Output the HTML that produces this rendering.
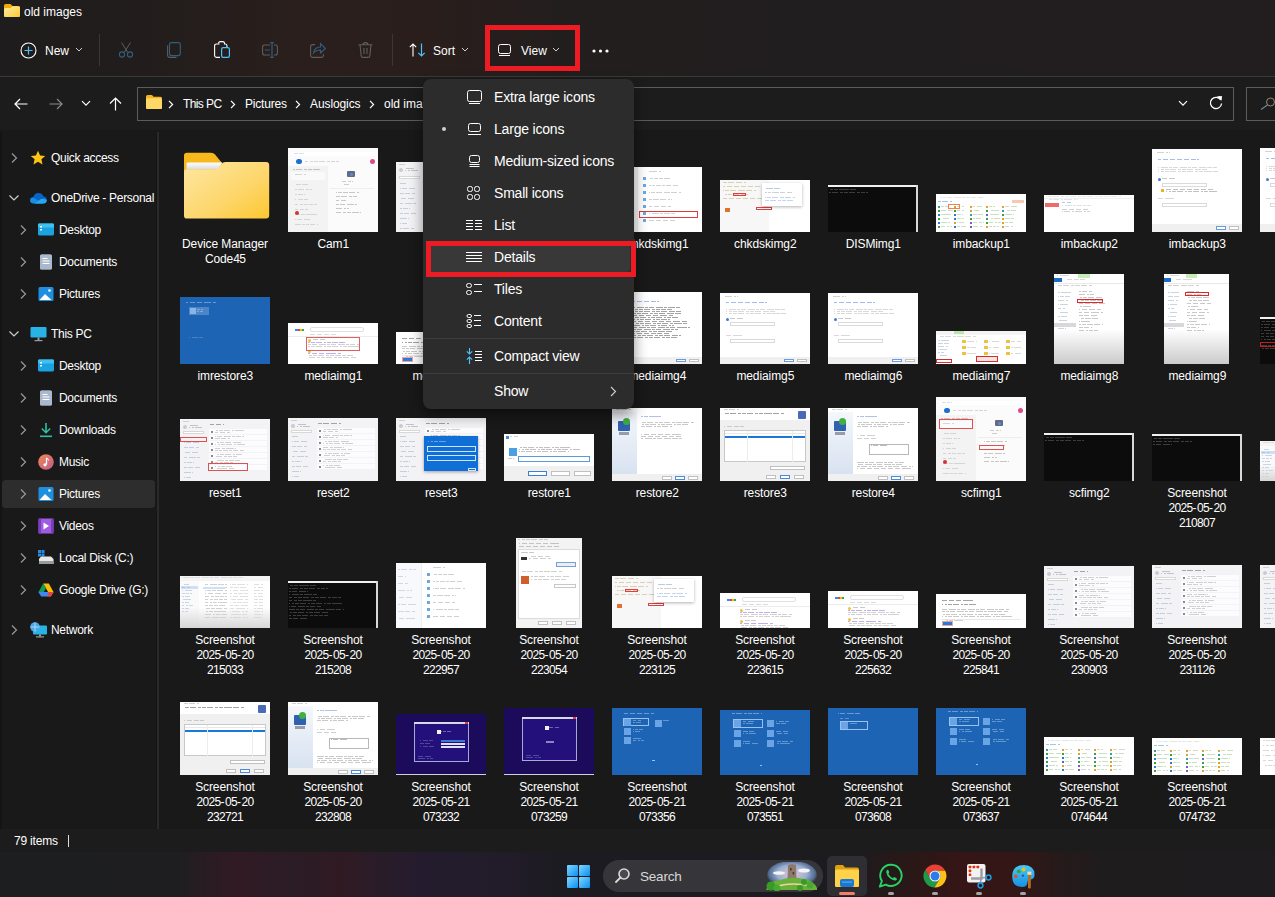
<!DOCTYPE html>
<html><head><meta charset="utf-8"><style>
*{margin:0;padding:0}
html,body{width:1275px;height:897px;overflow:hidden;background:#191919;font-family:"Liberation Sans", sans-serif}
.th{position:absolute;overflow:hidden;background:#fff}
.tf{filter:blur(0.7px)}
.th i{position:absolute;display:block}
.lab{position:absolute;width:100px;text-align:center;color:#fff;font-size:12px;line-height:15px;white-space:nowrap}
.sbt{position:absolute;color:#fff;font-size:12px;line-height:16px;letter-spacing:-0.3px;white-space:nowrap}
.t12{position:absolute;font-size:12px;line-height:16px;white-space:nowrap}
.mt{position:absolute;color:#fff;font-size:14px;line-height:18px;letter-spacing:-0.2px;white-space:nowrap}
.tsearch{position:absolute;color:#d8d8d8;font-size:13.5px;line-height:18px;letter-spacing:-0.2px}
</style></head><body>
<div style="position:absolute;left:0;top:0;width:1275px;height:76px;background:linear-gradient(90deg,#1e1c1c 0px,#221d1c 150px,#2a1f1c 300px,#291e1c 430px,#231e1e 560px,#211e1f 800px,#221e1f 1275px)"></div>
<div style="position:absolute;left:0;top:76px;width:1275px;height:1px;background:#3a3a3a"></div>
<div style="position:absolute;left:0;top:77px;width:1275px;height:53px;background:#1c1c1c"></div>
<div style="position:absolute;left:0;top:132px;width:2px;height:697px;background:#141414"></div>
<div style="position:absolute;left:156px;top:132px;width:1px;height:697px;background:#151515"></div><div style="position:absolute;left:157px;top:132px;width:2px;height:697px;background:#2a2a2a"></div>
<svg style="position:absolute;left:4px;top:4px" width="16" height="13" viewBox="0 0 16 13"><defs><linearGradient id="tfg" x1="0" y1="0" x2="1" y2="1"><stop offset="0" stop-color="#ffeea0"/><stop offset="1" stop-color="#fcc838"/></linearGradient></defs><path d="M1.5 0 H6.5 L8.5 2 H14.5 Q16 2 16 3.5 V11.5 Q16 13 14.5 13 H1.5 Q0 13 0 11.5 V1.5 Q0 0 1.5 0Z" fill="#f2aa08"/><path d="M0 5.5 Q0 4 1.5 4 H6.5 L8.5 2.2 H14.5 Q16 2.2 16 3.7 V11.5 Q16 13 14.5 13 H1.5 Q0 13 0 11.5Z" fill="url(#tfg)"/></svg><div class="t12" style="left:24px;top:4px;color:#fff">old images</div><svg style="position:absolute;left:20px;top:42px" width="17" height="17" viewBox="0 0 17 17"><circle cx="8.5" cy="8.5" r="7.5" fill="none" stroke="#fff" stroke-width="1.1"/><path d="M8.5 4.5 V12.5 M4.5 8.5 H12.5" stroke="#4cc2ff" stroke-width="1.2"/></svg><div class="t12" style="left:45px;top:43px;color:#fff">New</div><svg style="position:absolute;left:75px;top:47px" width="8" height="5" viewBox="0 0 8 5"><path d="M1 1 L4 4 L7 1" fill="none" stroke="#cfcfcf" stroke-width="1"/></svg><div style="position:absolute;left:99px;top:34px;width:1px;height:32px;background:#3a3636"></div><svg style="position:absolute;left:118px;top:42px" width="16" height="16" viewBox="0 0 16 16"><path d="M3.5 0.5 L9.5 10 M12.5 0.5 L6.5 10" stroke="#5e5e5e" stroke-width="1"/><circle cx="4" cy="12.5" r="2.6" fill="none" stroke="#2f5f80" stroke-width="1.1"/><circle cx="12" cy="12.5" r="2.6" fill="none" stroke="#2f5f80" stroke-width="1.1"/></svg><svg style="position:absolute;left:167px;top:42px" width="14" height="16" viewBox="0 0 14 16"><rect x="2.5" y="0.6" width="10.8" height="13" rx="2" fill="none" stroke="#2f5f80" stroke-width="1.1"/><path d="M0.6 3.5 V13 Q0.6 15.4 3 15.4 H9.5" fill="none" stroke="#5e5e5e" stroke-width="1.1"/></svg><svg style="position:absolute;left:214px;top:41px" width="16" height="17" viewBox="0 0 16 17"><path d="M5.5 3 H2.5 Q0.6 3 0.6 5 V14.5 Q0.6 16.4 2.5 16.4 H6" fill="none" stroke="#fff" stroke-width="1.1"/><path d="M4.5 2.5 Q4.5 0.6 6.5 0.6 H8.5 Q10.5 0.6 10.5 2.5 M10 3 H11.5 Q13 3 13 5 V6" fill="none" stroke="#fff" stroke-width="1.1"/><rect x="7.6" y="6.6" width="7.8" height="9.8" rx="1.6" fill="none" stroke="#4cc2ff" stroke-width="1.2"/></svg><svg style="position:absolute;left:262px;top:42px" width="16" height="16" viewBox="0 0 16 16"><path d="M8 3 H2.5 Q0.6 3 0.6 5 V11 Q0.6 13 2.5 13 H8 M12 3 H13.5 Q15.4 3 15.4 5 V11 Q15.4 13 13.5 13 H12" fill="none" stroke="#5e5e5e" stroke-width="1.1"/><path d="M10 0.6 V15.4 M8.2 0.6 H11.8 M8.2 15.4 H11.8 M2.8 8 H8" stroke="#2f5f80" stroke-width="1.2"/></svg><svg style="position:absolute;left:310px;top:42px" width="16" height="16" viewBox="0 0 16 16"><path d="M5 2.6 H2.5 Q0.6 2.6 0.6 4.5 V13.5 Q0.6 15.4 2.5 15.4 H11.5 Q13.4 15.4 13.4 13.5 V12" fill="none" stroke="#5e5e5e" stroke-width="1.1"/><path d="M3.5 11 Q4.5 5 10.5 5 V1.5 L15.4 6.5 L10.5 11 V8 Q6 8 3.5 11Z" fill="none" stroke="#2f5f80" stroke-width="1.1"/></svg><svg style="position:absolute;left:358px;top:42px" width="15" height="16" viewBox="0 0 15 16"><path d="M0.5 2.8 H14.5 M5 2.8 Q5 0.6 7.5 0.6 Q10 0.6 10 2.8 M2 2.8 L3.2 14 Q3.4 15.4 4.8 15.4 H10.2 Q11.6 15.4 11.8 14 L13 2.8 M6 6 V12 M9 6 V12" fill="none" stroke="#5e5e5e" stroke-width="1.1"/></svg><div style="position:absolute;left:392px;top:34px;width:1px;height:32px;background:#3a3636"></div><svg style="position:absolute;left:409px;top:43px" width="17" height="14" viewBox="0 0 17 14"><path d="M4 13.5 V1 M0.8 4.2 L4 1 L7.2 4.2" fill="none" stroke="#fff" stroke-width="1.1"/><path d="M12.5 0.5 V13 M9.3 9.8 L12.5 13 L15.7 9.8" fill="none" stroke="#4cc2ff" stroke-width="1.2"/></svg><div class="t12" style="left:433px;top:43px;color:#fff">Sort</div><svg style="position:absolute;left:461px;top:47px" width="8" height="5" viewBox="0 0 8 5"><path d="M1 1 L4 4 L7 1" fill="none" stroke="#cfcfcf" stroke-width="1"/></svg><div style="position:absolute;left:485px;top:25px;width:95px;height:46px;box-sizing:border-box;border:5px solid #ed1c24"></div><svg style="position:absolute;left:498px;top:44px" width="14" height="14" viewBox="0 0 14 14"><rect x="0.5" y="0.5" width="12" height="9" rx="2" fill="none" stroke="#fff" stroke-width="1"/><path d="M1 11.5 H12" stroke="#fff" stroke-width="1"/></svg><div class="t12" style="left:521px;top:43px;color:#fff">View</div><svg style="position:absolute;left:552px;top:47px" width="8" height="5" viewBox="0 0 8 5"><path d="M1 1 L4 4 L7 1" fill="none" stroke="#cfcfcf" stroke-width="1"/></svg><svg style="position:absolute;left:592px;top:49px" width="18" height="4" viewBox="0 0 18 4"><circle cx="2" cy="2" r="1.6" fill="#fff"/><circle cx="8.5" cy="2" r="1.6" fill="#fff"/><circle cx="15" cy="2" r="1.6" fill="#fff"/></svg>
<svg style="position:absolute;left:14px;top:98px" width="14" height="12" viewBox="0 0 14 12"><path d="M13.5 6 H1 M6 1 L1 6 L6 11" fill="none" stroke="#fff" stroke-width="1.2"/></svg><svg style="position:absolute;left:49px;top:98px" width="14" height="12" viewBox="0 0 14 12"><path d="M0.5 6 H13 M8 1 L13 6 L8 11" fill="none" stroke="#8a8a8a" stroke-width="1.2"/></svg><svg style="position:absolute;left:81px;top:100px" width="10" height="7" viewBox="0 0 10 7"><path d="M1 1.2 L5 5.2 L9 1.2" fill="none" stroke="#fff" stroke-width="1.2"/></svg><svg style="position:absolute;left:109px;top:97px" width="13" height="14" viewBox="0 0 13 14"><path d="M6.5 13.5 V1 M1 6.5 L6.5 1 L12 6.5" fill="none" stroke="#fff" stroke-width="1.2"/></svg><div style="position:absolute;left:137px;top:87px;width:1097px;height:34px;box-sizing:border-box;border:1px solid #5c5c5c;background:#1c1c1c"></div><svg style="position:absolute;left:146px;top:95px" width="16" height="14" viewBox="0 0 16 14"><path d="M1.5 0 H6 L7.5 1.8 H14.5 Q16 1.8 16 3.3 V12.5 Q16 14 14.5 14 H1.5 Q0 14 0 12.5 V1.5 Q0 0 1.5 0Z" fill="#f2b522"/><path d="M0 4.5 Q0 3.3 1.5 3.3 H14.5 Q16 3.3 16 4.8 V12.5 Q16 14 14.5 14 H1.5 Q0 14 0 12.5Z" fill="#ffd865"/></svg><svg style="position:absolute;left:168px;top:100px" width="6" height="9" viewBox="0 0 6 9"><path d="M1 0.8 L4.6 4.5 L1 8.2" fill="none" stroke="#fff" stroke-width="1.2"/></svg><div class="t12" style="left:183px;top:96px;color:#fff;letter-spacing:-0.6px">This PC</div><svg style="position:absolute;left:230px;top:100px" width="6" height="9" viewBox="0 0 6 9"><path d="M1 0.8 L4.6 4.5 L1 8.2" fill="none" stroke="#fff" stroke-width="1.2"/></svg><div class="t12" style="left:245px;top:96px;color:#fff;letter-spacing:-0.2px">Pictures</div><svg style="position:absolute;left:295px;top:100px" width="6" height="9" viewBox="0 0 6 9"><path d="M1 0.8 L4.6 4.5 L1 8.2" fill="none" stroke="#fff" stroke-width="1.2"/></svg><div class="t12" style="left:310px;top:96px;color:#fff;letter-spacing:-0.1px">Auslogics</div><svg style="position:absolute;left:369px;top:100px" width="6" height="9" viewBox="0 0 6 9"><path d="M1 0.8 L4.6 4.5 L1 8.2" fill="none" stroke="#fff" stroke-width="1.2"/></svg><div class="t12" style="left:384px;top:96px;color:#fff">old images</div><svg style="position:absolute;left:1178px;top:100px" width="10" height="7" viewBox="0 0 10 7"><path d="M1 1.2 L5 5.2 L9 1.2" fill="none" stroke="#fff" stroke-width="1.2"/></svg><svg style="position:absolute;left:1209px;top:96px" width="14" height="14" viewBox="0 0 14 14"><path d="M11.8 4 A5.6 5.6 0 1 0 12.6 7.5" fill="none" stroke="#fff" stroke-width="1.3"/><path d="M8.5 0.8 L12.2 4.2 L12.6 0.2Z" fill="#fff" stroke="#fff" stroke-width="0.8"/></svg><div style="position:absolute;left:1246px;top:87px;width:40px;height:34px;box-sizing:border-box;border:1px solid #5c5c5c"></div><svg style="position:absolute;left:1260px;top:97px" width="15" height="13" viewBox="0 0 15 13"><circle cx="10.5" cy="5" r="4" fill="none" stroke="#9a8a70" stroke-width="1"/><path d="M7.5 8 L1 12.5" stroke="#6a8aa0" stroke-width="1.1"/></svg>
<svg style="position:absolute;left:9px;top:152px" width="10" height="12" viewBox="0 0 10 12"><path d="M3 1.5 L7.5 6 L3 10.5" fill="none" stroke="#9a9a9a" stroke-width="1.2"/></svg><div style="position:absolute;left:30px;top:150px;width:16px;height:16px"><svg width="16" height="16" viewBox="0 0 16 16"><path d="M8 0.8 L10.1 5.4 L15.2 5.9 L11.4 9.3 L12.5 14.5 L8 11.8 L3.5 14.5 L4.6 9.3 L0.8 5.9 L5.9 5.4Z" fill="#ffc516"/></svg></div><div class="sbt" style="left:51px;top:150px">Quick access</div><svg style="position:absolute;left:8px;top:193px" width="12" height="10" viewBox="0 0 12 10"><path d="M1.5 2.5 L6 7 L10.5 2.5" fill="none" stroke="#cfcfcf" stroke-width="1.2"/></svg><div style="position:absolute;left:30px;top:190px;width:16px;height:16px"><svg width="17" height="12" viewBox="0 0 17 12" style="position:absolute;left:0;top:2px"><path d="M4 11.5 Q0.2 11.5 0.2 8.2 Q0.2 5.2 3.4 5 Q4.5 1 8.5 1 Q12 1 13.2 4.2 Q16.8 4.6 16.8 8 Q16.8 11.5 13 11.5Z" fill="#0a64c8"/><path d="M4 11.5 Q0.2 11.5 0.2 8.2 Q0.2 6 3 5.6 L13 11.5Z" fill="#1490df"/><path d="M5 11.5 L10 7.5 Q13 6 16.8 8 Q16.8 11.5 13 11.5Z" fill="#28a8ea"/></svg></div><div class="sbt" style="left:51px;top:190px">OneDrive - Personal</div><svg style="position:absolute;left:17.5px;top:224px" width="10" height="12" viewBox="0 0 10 12"><path d="M3 1.5 L7.5 6 L3 10.5" fill="none" stroke="#9a9a9a" stroke-width="1.2"/></svg><div style="position:absolute;left:38px;top:222px;width:16px;height:16px"><svg width="16" height="16" viewBox="0 0 16 16"><rect x="0" y="1.5" width="16" height="12" rx="1.5" fill="#1aa3e0"/><rect x="0" y="1.5" width="16" height="4" rx="1" fill="#3ec0f0"/><rect x="2" y="4" width="2" height="1.5" fill="#fff"/><rect x="2" y="7" width="2" height="1.5" fill="#fff"/></svg></div><div class="sbt" style="left:59px;top:222px">Desktop</div><svg style="position:absolute;left:17.5px;top:256px" width="10" height="12" viewBox="0 0 10 12"><path d="M3 1.5 L7.5 6 L3 10.5" fill="none" stroke="#9a9a9a" stroke-width="1.2"/></svg><div style="position:absolute;left:38px;top:254px;width:16px;height:16px"><svg width="16" height="16" viewBox="0 0 16 16"><rect x="2" y="0.5" width="12" height="15" rx="1.5" fill="#8b9ab0"/><rect x="2" y="0.5" width="12" height="15" rx="1.5" fill="#a9b8cc"/><rect x="4.5" y="4" width="5" height="1" fill="#fff"/><rect x="4.5" y="6.5" width="7" height="1" fill="#fff"/><rect x="4.5" y="9" width="7" height="1" fill="#fff"/></svg></div><div class="sbt" style="left:59px;top:254px">Documents</div><svg style="position:absolute;left:17.5px;top:288px" width="10" height="12" viewBox="0 0 10 12"><path d="M3 1.5 L7.5 6 L3 10.5" fill="none" stroke="#9a9a9a" stroke-width="1.2"/></svg><div style="position:absolute;left:38px;top:286px;width:16px;height:16px"><svg width="16" height="16" viewBox="0 0 16 16"><rect x="0.5" y="1" width="15" height="14" rx="1.5" fill="#1f8fe0"/><path d="M1.5 14 L7 8 L13.5 14Z" fill="#fff"/><circle cx="11.5" cy="4.5" r="1.3" fill="#fff"/></svg></div><div class="sbt" style="left:59px;top:286px">Pictures</div><svg style="position:absolute;left:8px;top:329px" width="12" height="10" viewBox="0 0 12 10"><path d="M1.5 2.5 L6 7 L10.5 2.5" fill="none" stroke="#cfcfcf" stroke-width="1.2"/></svg><div style="position:absolute;left:30px;top:326px;width:16px;height:16px"><svg width="17" height="16" viewBox="0 0 17 16"><rect x="0.5" y="1" width="16" height="10.5" rx="1" fill="#27b3e6"/><rect x="7.5" y="11.5" width="2" height="3" fill="#9a9a9a"/><rect x="4.5" y="14" width="8" height="1.2" fill="#9a9a9a"/></svg></div><div class="sbt" style="left:51px;top:326px">This PC</div><svg style="position:absolute;left:17.5px;top:360px" width="10" height="12" viewBox="0 0 10 12"><path d="M3 1.5 L7.5 6 L3 10.5" fill="none" stroke="#9a9a9a" stroke-width="1.2"/></svg><div style="position:absolute;left:38px;top:358px;width:16px;height:16px"><svg width="16" height="16" viewBox="0 0 16 16"><rect x="0" y="1.5" width="16" height="12" rx="1.5" fill="#1aa3e0"/><rect x="0" y="1.5" width="16" height="4" rx="1" fill="#3ec0f0"/><rect x="2" y="4" width="2" height="1.5" fill="#fff"/><rect x="2" y="7" width="2" height="1.5" fill="#fff"/></svg></div><div class="sbt" style="left:59px;top:358px">Desktop</div><svg style="position:absolute;left:17.5px;top:392px" width="10" height="12" viewBox="0 0 10 12"><path d="M3 1.5 L7.5 6 L3 10.5" fill="none" stroke="#9a9a9a" stroke-width="1.2"/></svg><div style="position:absolute;left:38px;top:390px;width:16px;height:16px"><svg width="16" height="16" viewBox="0 0 16 16"><rect x="2" y="0.5" width="12" height="15" rx="1.5" fill="#8b9ab0"/><rect x="2" y="0.5" width="12" height="15" rx="1.5" fill="#a9b8cc"/><rect x="4.5" y="4" width="5" height="1" fill="#fff"/><rect x="4.5" y="6.5" width="7" height="1" fill="#fff"/><rect x="4.5" y="9" width="7" height="1" fill="#fff"/></svg></div><div class="sbt" style="left:59px;top:390px">Documents</div><svg style="position:absolute;left:17.5px;top:424px" width="10" height="12" viewBox="0 0 10 12"><path d="M3 1.5 L7.5 6 L3 10.5" fill="none" stroke="#9a9a9a" stroke-width="1.2"/></svg><div style="position:absolute;left:38px;top:422px;width:16px;height:16px"><svg width="16" height="16" viewBox="0 0 16 16"><path d="M8 1 V10.5 M3.8 6.5 L8 10.7 L12.2 6.5" fill="none" stroke="#2ec0a0" stroke-width="1.6"/><rect x="2" y="13.5" width="12" height="1.6" fill="#2ec0a0"/></svg></div><div class="sbt" style="left:59px;top:422px">Downloads</div><svg style="position:absolute;left:17.5px;top:456px" width="10" height="12" viewBox="0 0 10 12"><path d="M3 1.5 L7.5 6 L3 10.5" fill="none" stroke="#9a9a9a" stroke-width="1.2"/></svg><div style="position:absolute;left:38px;top:454px;width:16px;height:16px"><svg width="16" height="16" viewBox="0 0 16 16"><defs><linearGradient id="mg" x1="0" y1="0" x2="1" y2="1"><stop offset="0" stop-color="#f08a50"/><stop offset="1" stop-color="#c05a90"/></linearGradient></defs><circle cx="8" cy="8" r="7.8" fill="url(#mg)"/><path d="M8.5 4 V10.5" stroke="#fff" stroke-width="1.3"/><circle cx="7" cy="10.8" r="1.6" fill="#fff"/><path d="M8.5 4 Q10.5 4.5 10.5 6.5" fill="none" stroke="#fff" stroke-width="1"/></svg></div><div class="sbt" style="left:59px;top:454px">Music</div><div style="position:absolute;left:2px;top:480px;width:153px;height:28px;background:#2d2d2d;border-radius:4px"></div><svg style="position:absolute;left:17.5px;top:488px" width="10" height="12" viewBox="0 0 10 12"><path d="M3 1.5 L7.5 6 L3 10.5" fill="none" stroke="#9a9a9a" stroke-width="1.2"/></svg><div style="position:absolute;left:38px;top:486px;width:16px;height:16px"><svg width="16" height="16" viewBox="0 0 16 16"><rect x="0.5" y="1" width="15" height="14" rx="1.5" fill="#1f8fe0"/><path d="M1.5 14 L7 8 L13.5 14Z" fill="#fff"/><circle cx="11.5" cy="4.5" r="1.3" fill="#fff"/></svg></div><div class="sbt" style="left:59px;top:486px">Pictures</div><svg style="position:absolute;left:17.5px;top:520px" width="10" height="12" viewBox="0 0 10 12"><path d="M3 1.5 L7.5 6 L3 10.5" fill="none" stroke="#9a9a9a" stroke-width="1.2"/></svg><div style="position:absolute;left:38px;top:518px;width:16px;height:16px"><svg width="16" height="16" viewBox="0 0 16 16"><rect x="0.5" y="0.5" width="15" height="15" rx="1.5" fill="#a05ce0"/><rect x="0.5" y="0.5" width="2.5" height="15" fill="#7c3cc0"/><rect x="13" y="0.5" width="2.5" height="15" fill="#7c3cc0"/><path d="M5.5 4.5 L11 8 L5.5 11.5Z" fill="#fff"/></svg></div><div class="sbt" style="left:59px;top:518px">Videos</div><svg style="position:absolute;left:17.5px;top:552px" width="10" height="12" viewBox="0 0 10 12"><path d="M3 1.5 L7.5 6 L3 10.5" fill="none" stroke="#9a9a9a" stroke-width="1.2"/></svg><div style="position:absolute;left:38px;top:550px;width:16px;height:16px"><svg width="16" height="16" viewBox="0 0 16 16"><rect x="0" y="0" width="3" height="3" fill="#2a8ae0"/><rect x="3.5" y="0" width="3" height="3" fill="#2a8ae0"/><rect x="0" y="3.5" width="3" height="3" fill="#2a8ae0"/><rect x="3.5" y="3.5" width="3" height="3" fill="#2a8ae0"/><path d="M1 9 L3 6.5 H13 L15.5 9 V14 H1Z" fill="#e8e8e8"/><rect x="1" y="11" width="14.5" height="3" fill="#9a9a9a"/><rect x="3" y="12" width="2" height="1" fill="#40d060"/></svg></div><div class="sbt" style="left:59px;top:550px">Local Disk (C:)</div><svg style="position:absolute;left:17.5px;top:584px" width="10" height="12" viewBox="0 0 10 12"><path d="M3 1.5 L7.5 6 L3 10.5" fill="none" stroke="#9a9a9a" stroke-width="1.2"/></svg><div style="position:absolute;left:38px;top:582px;width:16px;height:16px"><svg width="16" height="16" viewBox="0 0 16 16"><path d="M5.2 1.5 H10.8 L15.5 10 L12.7 14.5 Z" fill="#fbbc04"/><path d="M5.2 1.5 L0.5 10 L3.3 14.5 L8 6.3Z" fill="#0f9d58"/><path d="M0.5 10 H15.5 L12.7 14.5 H3.3Z" fill="#4285f4"/><path d="M15.5 10 L12.7 14.5 H9 L11 10Z" fill="#ea4335"/></svg></div><div class="sbt" style="left:59px;top:582px">Google Drive (G:)</div><svg style="position:absolute;left:9px;top:624px" width="10" height="12" viewBox="0 0 10 12"><path d="M3 1.5 L7.5 6 L3 10.5" fill="none" stroke="#9a9a9a" stroke-width="1.2"/></svg><div style="position:absolute;left:30px;top:622px;width:16px;height:16px"><svg width="17" height="16" viewBox="0 0 17 16"><rect x="3" y="3.5" width="14" height="9" rx="1" fill="#27b3e6"/><rect x="9" y="12.5" width="2" height="2" fill="#9a9a9a"/><rect x="6" y="14.3" width="8" height="1.2" fill="#9a9a9a"/><circle cx="5" cy="5" r="4.8" fill="#4aa8e8"/><path d="M0.5 5 H9.5 M5 0.3 V9.7" stroke="#bfe4ff" stroke-width="0.8"/></svg></div><div class="sbt" style="left:51px;top:622px">Network</div>
<div class="th" style="left:184px;top:152px;width:86px;height:68px;background:none"><svg width="86" height="68" viewBox="0 0 86 68" style="position:absolute;left:0;top:0">
<defs><linearGradient id="fg" x1="0" y1="0" x2="1" y2="1"><stop offset="0" stop-color="#fee7a2"/><stop offset="0.6" stop-color="#fdd66a"/><stop offset="1" stop-color="#fcc72f"/></linearGradient>
<linearGradient id="pg" x1="0" y1="0" x2="0" y2="1"><stop offset="0" stop-color="#ffffff"/><stop offset="1" stop-color="#d9dde3"/></linearGradient></defs>
<path d="M0 3.5 Q0 0.8 3 0.8 H27 Q29.5 0.8 31 2.6 L37.5 10.5 V20 H0Z" fill="#f6b81c"/>
<path d="M2.5 11.5 Q2.5 10.5 4 10.5 H38.5 L34 17 H2.5Z" fill="url(#pg)"/>
<path d="M0 20.5 Q0 17.2 3 17.2 H31.5 Q33.5 17.2 34.8 15.6 L38 11.5 Q39 10 41.5 10 H82 Q85.2 10 85.2 13.2 V63 Q85.2 66.6 82 66.6 H3.2 Q0 66.6 0 63.4 Z" fill="url(#fg)"/>
</svg></div>
<div class="lab" style="left:175px;top:237px"><span style="letter-spacing:-0.1px">Device Manager</span><br><span style="letter-spacing:-0.1px">Code</span><span style="letter-spacing:-0.7px">45</span></div>
<div class="th" style="left:288px;top:148px;width:90px;height:84px"><div class="tf"><i style="left:0px;top:0px;width:90px;height:84px;background:#fbfbfb;"></i><i style="left:3px;top:4px;width:84px;height:4px;background:#ffffff;"></i><i style="left:6px;top:5px;width:10px;height:1px;background:repeating-linear-gradient(90deg,#9ab8d8 0px 3px,transparent 3px 4px,#9ab8d8 4px 9px,transparent 9px 11px,#9ab8d8 11px 18px,transparent 18px 19px);background-position:-5px 0;opacity:.45"></i><i style="left:8px;top:11px;width:6px;height:5px;background:#1a6fd0;border-radius:3px;"></i><i style="left:17px;top:13px;width:34px;height:1px;background:repeating-linear-gradient(90deg,#a8a8a8 0px 4px,transparent 4px 5px,#a8a8a8 5px 11px,transparent 11px 13px,#a8a8a8 13px 16px,transparent 16px 17px);background-position:-8px 0;opacity:.45"></i><i style="left:82px;top:11px;width:5px;height:5px;background:#e04a8a;border-radius:3px;"></i><i style="left:0px;top:18px;width:40px;height:66px;background:#f3f3f3;"></i><i style="left:3px;top:24px;width:34px;height:8px;background:#fafafa;"></i><i style="left:5px;top:21px;width:27px;height:1px;background:repeating-linear-gradient(90deg,#888 0px 4px,transparent 4px 5px,#888 5px 11px,transparent 11px 13px,#888 13px 16px,transparent 16px 17px);background-position:-2px 0;opacity:.45"></i><i style="left:7px;top:26px;width:12px;height:1px;background:repeating-linear-gradient(90deg,#aaa 0px 6px,transparent 6px 8px,#aaa 8px 10px,transparent 10px 11px,#aaa 11px 15px,transparent 15px 16px);background-position:-11px 0;opacity:.45"></i><i style="left:7px;top:36px;width:14px;height:1px;background:repeating-linear-gradient(90deg,#b0b0b0 0px 4px,transparent 4px 5px,#b0b0b0 5px 11px,transparent 11px 13px,#b0b0b0 13px 16px,transparent 16px 17px);background-position:-12px 0;opacity:.45"></i><i style="left:7px;top:41px;width:17px;height:1px;background:repeating-linear-gradient(90deg,#b0b0b0 0px 4px,transparent 4px 5px,#b0b0b0 5px 11px,transparent 11px 13px,#b0b0b0 13px 16px,transparent 16px 17px);background-position:-2px 0;opacity:.45"></i><i style="left:7px;top:46px;width:10px;height:1px;background:repeating-linear-gradient(90deg,#b0b0b0 0px 3px,transparent 3px 4px,#b0b0b0 4px 9px,transparent 9px 11px,#b0b0b0 11px 18px,transparent 18px 19px);background-position:-1px 0;opacity:.45"></i><i style="left:7px;top:51px;width:13px;height:1px;background:repeating-linear-gradient(90deg,#b0b0b0 0px 3px,transparent 3px 4px,#b0b0b0 4px 9px,transparent 9px 11px,#b0b0b0 11px 18px,transparent 18px 19px);background-position:-8px 0;opacity:.45"></i><i style="left:7px;top:56px;width:22px;height:1px;background:repeating-linear-gradient(90deg,#b0b0b0 0px 4px,transparent 4px 5px,#b0b0b0 5px 11px,transparent 11px 13px,#b0b0b0 13px 16px,transparent 16px 17px);background-position:-8px 0;opacity:.45"></i><i style="left:7px;top:61px;width:13px;height:1px;background:repeating-linear-gradient(90deg,#b0b0b0 0px 4px,transparent 4px 5px,#b0b0b0 5px 11px,transparent 11px 13px,#b0b0b0 13px 16px,transparent 16px 17px);background-position:-8px 0;opacity:.45"></i><i style="left:7px;top:66px;width:22px;height:1px;background:repeating-linear-gradient(90deg,#b0b0b0 0px 6px,transparent 6px 8px,#b0b0b0 8px 10px,transparent 10px 11px,#b0b0b0 11px 15px,transparent 15px 16px);background-position:-5px 0;opacity:.45"></i><i style="left:7px;top:71px;width:15px;height:1px;background:repeating-linear-gradient(90deg,#b0b0b0 0px 3px,transparent 3px 4px,#b0b0b0 4px 9px,transparent 9px 11px,#b0b0b0 11px 18px,transparent 18px 19px);background-position:-2px 0;opacity:.45"></i><i style="left:7px;top:76px;width:23px;height:1px;background:repeating-linear-gradient(90deg,#b0b0b0 0px 3px,transparent 3px 4px,#b0b0b0 4px 9px,transparent 9px 11px,#b0b0b0 11px 18px,transparent 18px 19px);background-position:-12px 0;opacity:.45"></i><i style="left:7px;top:63px;width:4px;height:4px;background:#d83030;border-radius:2px;"></i><i style="left:59px;top:23px;width:8px;height:6px;background:#666a80;border-radius:1px;"></i><i style="left:62px;top:25px;width:3px;height:3px;background:#5a8ae0;border-radius:2px;"></i><i style="left:54px;top:33px;width:11px;height:1px;background:repeating-linear-gradient(90deg,#999 0px 3px,transparent 3px 4px,#999 4px 9px,transparent 9px 11px,#999 11px 18px,transparent 18px 19px);background-position:-16px 0;opacity:.45"></i><i style="left:54px;top:36px;width:7px;height:1px;background:repeating-linear-gradient(90deg,#999 0px 5px,transparent 5px 7px,#999 7px 12px,transparent 12px 14px);background-position:-12px 0;opacity:.45"></i><i style="left:42px;top:40px;width:44px;height:1px;background:#eeeeee;"></i><i style="left:48px;top:44px;width:23px;height:1px;background:repeating-linear-gradient(90deg,#888 0px 4px,transparent 4px 5px,#888 5px 11px,transparent 11px 13px,#888 13px 16px,transparent 16px 17px);background-position:-15px 0;opacity:.45"></i><i style="left:48px;top:48px;width:22px;height:1px;background:repeating-linear-gradient(90deg,#888 0px 4px,transparent 4px 5px,#888 5px 11px,transparent 11px 13px,#888 13px 16px,transparent 16px 17px);background-position:-0px 0;opacity:.45"></i><i style="left:48px;top:52px;width:10px;height:1px;background:repeating-linear-gradient(90deg,#888 0px 5px,transparent 5px 7px,#888 7px 12px,transparent 12px 14px);background-position:-12px 0;opacity:.45"></i><i style="left:48px;top:56px;width:21px;height:1px;background:repeating-linear-gradient(90deg,#888 0px 3px,transparent 3px 4px,#888 4px 9px,transparent 9px 11px,#888 11px 18px,transparent 18px 19px);background-position:-0px 0;opacity:.45"></i><i style="left:48px;top:60px;width:13px;height:1px;background:repeating-linear-gradient(90deg,#888 0px 6px,transparent 6px 8px,#888 8px 10px,transparent 10px 11px,#888 11px 15px,transparent 15px 16px);background-position:-13px 0;opacity:.45"></i><i style="left:48px;top:64px;width:25px;height:1px;background:repeating-linear-gradient(90deg,#888 0px 4px,transparent 4px 5px,#888 5px 11px,transparent 11px 13px,#888 13px 16px,transparent 16px 17px);background-position:-6px 0;opacity:.45"></i></div></div>
<div class="lab" style="left:283px;top:237px"><span style="letter-spacing:-0.1px">Cam</span><span style="letter-spacing:-0.7px">1</span></div>
<div class="th" style="left:396px;top:162px;width:90px;height:70px"><div class="tf"><i style="left:0px;top:0px;width:90px;height:70px;background:#f3f3f6;"></i><i style="left:3px;top:2px;width:7px;height:1px;background:repeating-linear-gradient(90deg,#a8a8a8 0px 3px,transparent 3px 4px,#a8a8a8 4px 9px,transparent 9px 11px,#a8a8a8 11px 18px,transparent 18px 19px);background-position:-4px 0;opacity:.45"></i><i style="left:3px;top:6px;width:4px;height:4px;background:#c8ccd4;border-radius:2px;"></i><i style="left:9px;top:6px;width:10px;height:1px;background:repeating-linear-gradient(90deg,#888 0px 6px,transparent 6px 8px,#888 8px 10px,transparent 10px 11px,#888 11px 15px,transparent 15px 16px);background-position:-7px 0;opacity:.45"></i><i style="left:9px;top:8px;width:13px;height:1px;background:repeating-linear-gradient(90deg,#888 0px 6px,transparent 6px 8px,#888 8px 10px,transparent 10px 11px,#888 11px 15px,transparent 15px 16px);background-position:-5px 0;opacity:.45"></i><i style="left:3px;top:14px;width:21px;height:3px;background:#ffffff;box-sizing:border-box;border:1px solid #d8d8d8;"></i><i style="left:4px;top:21px;width:8px;height:1px;background:repeating-linear-gradient(90deg,#8aa0c0 0px 6px,transparent 6px 8px,#8aa0c0 8px 10px,transparent 10px 11px,#8aa0c0 11px 15px,transparent 15px 16px);background-position:-8px 0;opacity:.45"></i><i style="left:4px;top:26px;width:15px;height:1px;background:repeating-linear-gradient(90deg,#8aa0c0 0px 3px,transparent 3px 4px,#8aa0c0 4px 9px,transparent 9px 11px,#8aa0c0 11px 18px,transparent 18px 19px);background-position:-2px 0;opacity:.45"></i><i style="left:4px;top:31px;width:15px;height:1px;background:repeating-linear-gradient(90deg,#8aa0c0 0px 3px,transparent 3px 4px,#8aa0c0 4px 9px,transparent 9px 11px,#8aa0c0 11px 18px,transparent 18px 19px);background-position:-14px 0;opacity:.45"></i><i style="left:4px;top:36px;width:15px;height:1px;background:repeating-linear-gradient(90deg,#8aa0c0 0px 5px,transparent 5px 7px,#8aa0c0 7px 12px,transparent 12px 14px);background-position:-6px 0;opacity:.45"></i><i style="left:4px;top:41px;width:16px;height:1px;background:repeating-linear-gradient(90deg,#8aa0c0 0px 4px,transparent 4px 5px,#8aa0c0 5px 11px,transparent 11px 13px,#8aa0c0 13px 16px,transparent 16px 17px);background-position:-8px 0;opacity:.45"></i><i style="left:4px;top:46px;width:10px;height:1px;background:repeating-linear-gradient(90deg,#8aa0c0 0px 3px,transparent 3px 4px,#8aa0c0 4px 9px,transparent 9px 11px,#8aa0c0 11px 18px,transparent 18px 19px);background-position:-11px 0;opacity:.45"></i><i style="left:4px;top:51px;width:16px;height:1px;background:repeating-linear-gradient(90deg,#8aa0c0 0px 3px,transparent 3px 4px,#8aa0c0 4px 9px,transparent 9px 11px,#8aa0c0 11px 18px,transparent 18px 19px);background-position:-16px 0;opacity:.45"></i><i style="left:4px;top:56px;width:9px;height:1px;background:repeating-linear-gradient(90deg,#8aa0c0 0px 3px,transparent 3px 4px,#8aa0c0 4px 9px,transparent 9px 11px,#8aa0c0 11px 18px,transparent 18px 19px);background-position:-5px 0;opacity:.45"></i><i style="left:4px;top:61px;width:7px;height:1px;background:repeating-linear-gradient(90deg,#8aa0c0 0px 4px,transparent 4px 5px,#8aa0c0 5px 11px,transparent 11px 13px,#8aa0c0 13px 16px,transparent 16px 17px);background-position:-3px 0;opacity:.45"></i><i style="left:4px;top:66px;width:14px;height:1px;background:repeating-linear-gradient(90deg,#8aa0c0 0px 4px,transparent 4px 5px,#8aa0c0 5px 11px,transparent 11px 13px,#8aa0c0 13px 16px,transparent 16px 17px);background-position:-2px 0;opacity:.45"></i><i style="left:30px;top:5px;width:14px;height:1px;background:repeating-linear-gradient(90deg,#444 0px 5px,transparent 5px 7px,#444 7px 12px,transparent 12px 14px);background-position:-8px 0;opacity:.45"></i><i style="left:29px;top:11px;width:58px;height:6px;background:#fcfcfe;"></i><i style="left:31px;top:13px;width:2px;height:2px;background:#8a8a8a;"></i><i style="left:35px;top:12px;width:30px;height:1px;background:repeating-linear-gradient(90deg,#9a9a9a 0px 6px,transparent 6px 8px,#9a9a9a 8px 10px,transparent 10px 11px,#9a9a9a 11px 15px,transparent 15px 16px);background-position:-7px 0;opacity:.45"></i><i style="left:35px;top:14px;width:15px;height:1px;background:repeating-linear-gradient(90deg,#9a9a9a 0px 5px,transparent 5px 7px,#9a9a9a 7px 12px,transparent 12px 14px);background-position:-2px 0;opacity:.45"></i><i style="left:29px;top:18px;width:58px;height:6px;background:#fcfcfe;"></i><i style="left:31px;top:20px;width:2px;height:2px;background:#8a8a8a;"></i><i style="left:35px;top:19px;width:29px;height:1px;background:repeating-linear-gradient(90deg,#9a9a9a 0px 3px,transparent 3px 4px,#9a9a9a 4px 9px,transparent 9px 11px,#9a9a9a 11px 18px,transparent 18px 19px);background-position:-2px 0;opacity:.45"></i><i style="left:35px;top:21px;width:15px;height:1px;background:repeating-linear-gradient(90deg,#9a9a9a 0px 3px,transparent 3px 4px,#9a9a9a 4px 9px,transparent 9px 11px,#9a9a9a 11px 18px,transparent 18px 19px);background-position:-13px 0;opacity:.45"></i><i style="left:29px;top:25px;width:58px;height:6px;background:#fcfcfe;"></i><i style="left:31px;top:27px;width:2px;height:2px;background:#8a8a8a;"></i><i style="left:35px;top:26px;width:26px;height:1px;background:repeating-linear-gradient(90deg,#9a9a9a 0px 6px,transparent 6px 8px,#9a9a9a 8px 10px,transparent 10px 11px,#9a9a9a 11px 15px,transparent 15px 16px);background-position:-6px 0;opacity:.45"></i><i style="left:35px;top:28px;width:30px;height:1px;background:repeating-linear-gradient(90deg,#9a9a9a 0px 6px,transparent 6px 8px,#9a9a9a 8px 10px,transparent 10px 11px,#9a9a9a 11px 15px,transparent 15px 16px);background-position:-5px 0;opacity:.45"></i><i style="left:29px;top:32px;width:58px;height:6px;background:#fcfcfe;"></i><i style="left:31px;top:34px;width:2px;height:2px;background:#8a8a8a;"></i><i style="left:35px;top:33px;width:21px;height:1px;background:repeating-linear-gradient(90deg,#9a9a9a 0px 4px,transparent 4px 5px,#9a9a9a 5px 11px,transparent 11px 13px,#9a9a9a 13px 16px,transparent 16px 17px);background-position:-6px 0;opacity:.45"></i><i style="left:35px;top:35px;width:29px;height:1px;background:repeating-linear-gradient(90deg,#9a9a9a 0px 3px,transparent 3px 4px,#9a9a9a 4px 9px,transparent 9px 11px,#9a9a9a 11px 18px,transparent 18px 19px);background-position:-15px 0;opacity:.45"></i><i style="left:29px;top:39px;width:58px;height:6px;background:#fcfcfe;"></i><i style="left:31px;top:41px;width:2px;height:2px;background:#8a8a8a;"></i><i style="left:35px;top:40px;width:27px;height:1px;background:repeating-linear-gradient(90deg,#9a9a9a 0px 6px,transparent 6px 8px,#9a9a9a 8px 10px,transparent 10px 11px,#9a9a9a 11px 15px,transparent 15px 16px);background-position:-6px 0;opacity:.45"></i><i style="left:35px;top:42px;width:22px;height:1px;background:repeating-linear-gradient(90deg,#9a9a9a 0px 4px,transparent 4px 5px,#9a9a9a 5px 11px,transparent 11px 13px,#9a9a9a 13px 16px,transparent 16px 17px);background-position:-4px 0;opacity:.45"></i><i style="left:29px;top:46px;width:58px;height:6px;background:#fcfcfe;"></i><i style="left:31px;top:48px;width:2px;height:2px;background:#8a8a8a;"></i><i style="left:35px;top:47px;width:25px;height:1px;background:repeating-linear-gradient(90deg,#9a9a9a 0px 3px,transparent 3px 4px,#9a9a9a 4px 9px,transparent 9px 11px,#9a9a9a 11px 18px,transparent 18px 19px);background-position:-9px 0;opacity:.45"></i><i style="left:35px;top:49px;width:18px;height:1px;background:repeating-linear-gradient(90deg,#9a9a9a 0px 4px,transparent 4px 5px,#9a9a9a 5px 11px,transparent 11px 13px,#9a9a9a 13px 16px,transparent 16px 17px);background-position:-8px 0;opacity:.45"></i><i style="left:29px;top:53px;width:58px;height:6px;background:#fcfcfe;"></i><i style="left:31px;top:55px;width:2px;height:2px;background:#8a8a8a;"></i><i style="left:35px;top:54px;width:17px;height:1px;background:repeating-linear-gradient(90deg,#9a9a9a 0px 6px,transparent 6px 8px,#9a9a9a 8px 10px,transparent 10px 11px,#9a9a9a 11px 15px,transparent 15px 16px);background-position:-5px 0;opacity:.45"></i><i style="left:35px;top:56px;width:19px;height:1px;background:repeating-linear-gradient(90deg,#9a9a9a 0px 5px,transparent 5px 7px,#9a9a9a 7px 12px,transparent 12px 14px);background-position:-12px 0;opacity:.45"></i><i style="left:27px;top:23px;width:62px;height:35px;box-sizing:border-box;border:1px solid #e06060;"></i></div></div>
<div class="th" style="left:504px;top:160px;width:90px;height:72px"><div class="tf"><i style="left:0px;top:0px;width:90px;height:72px;background:#ffffff;"></i><i style="left:5px;top:3px;width:13px;height:1px;background:repeating-linear-gradient(90deg,#9a9a9a 0px 6px,transparent 6px 8px,#9a9a9a 8px 10px,transparent 10px 11px,#9a9a9a 11px 15px,transparent 15px 16px);background-position:-12px 0;opacity:.45"></i><i style="left:6px;top:9px;width:41px;height:1px;background:repeating-linear-gradient(90deg,#3a6ad0 0px 5px,transparent 5px 7px,#3a6ad0 7px 12px,transparent 12px 14px);background-position:-2px 0;opacity:.45"></i><i style="left:6px;top:16px;width:59px;height:1px;background:repeating-linear-gradient(90deg,#aaa 0px 3px,transparent 3px 4px,#aaa 4px 9px,transparent 9px 11px,#aaa 11px 18px,transparent 18px 19px);background-position:-8px 0;opacity:.45"></i><i style="left:6px;top:18px;width:49px;height:1px;background:repeating-linear-gradient(90deg,#aaa 0px 4px,transparent 4px 5px,#aaa 5px 11px,transparent 11px 13px,#aaa 13px 16px,transparent 16px 17px);background-position:-10px 0;opacity:.45"></i><i style="left:6px;top:20px;width:60px;height:1px;background:repeating-linear-gradient(90deg,#aaa 0px 4px,transparent 4px 5px,#aaa 5px 11px,transparent 11px 13px,#aaa 13px 16px,transparent 16px 17px);background-position:-10px 0;opacity:.45"></i><i style="left:6px;top:25px;width:3px;height:3px;background:#3a7ad8;border-radius:2px;"></i><i style="left:10px;top:25px;width:15px;height:1px;background:repeating-linear-gradient(90deg,#888 0px 5px,transparent 5px 7px,#888 7px 12px,transparent 12px 14px);background-position:-7px 0;opacity:.45"></i><i style="left:10px;top:30px;width:45px;height:4px;box-sizing:border-box;border:1px solid #dadada;"></i><i style="left:6px;top:43px;width:17px;height:1px;background:repeating-linear-gradient(90deg,#aaa 0px 3px,transparent 3px 4px,#aaa 4px 9px,transparent 9px 11px,#aaa 11px 18px,transparent 18px 19px);background-position:-4px 0;opacity:.45"></i><i style="left:10px;top:47px;width:45px;height:4px;box-sizing:border-box;border:1px solid #dadada;"></i><i style="left:0px;top:65px;width:90px;height:7px;background:#f0f0f0;"></i><i style="left:64px;top:67px;width:10px;height:3px;background:#ffffff;box-sizing:border-box;border:1px solid #6a9ad8;"></i><i style="left:77px;top:67px;width:10px;height:3px;background:#ffffff;box-sizing:border-box;border:1px solid #c0c0c0;"></i></div></div>
<div class="th" style="left:612px;top:167px;width:90px;height:65px"><div class="tf"><i style="left:0px;top:0px;width:90px;height:65px;background:#ffffff;"></i><i style="left:0px;top:0px;width:25px;height:65px;background:#f7f9fc;"></i><i style="left:2px;top:6px;width:18px;height:1px;background:repeating-linear-gradient(90deg,#a0b0c8 0px 4px,transparent 4px 5px,#a0b0c8 5px 11px,transparent 11px 13px,#a0b0c8 13px 16px,transparent 16px 17px);background-position:-2px 0;opacity:.45"></i><i style="left:2px;top:13px;width:8px;height:1px;background:repeating-linear-gradient(90deg,#a0b0c8 0px 6px,transparent 6px 8px,#a0b0c8 8px 10px,transparent 10px 11px,#a0b0c8 11px 15px,transparent 15px 16px);background-position:-9px 0;opacity:.45"></i><i style="left:2px;top:20px;width:10px;height:1px;background:repeating-linear-gradient(90deg,#a0b0c8 0px 6px,transparent 6px 8px,#a0b0c8 8px 10px,transparent 10px 11px,#a0b0c8 11px 15px,transparent 15px 16px);background-position:-1px 0;opacity:.45"></i><i style="left:2px;top:27px;width:14px;height:1px;background:repeating-linear-gradient(90deg,#a0b0c8 0px 6px,transparent 6px 8px,#a0b0c8 8px 10px,transparent 10px 11px,#a0b0c8 11px 15px,transparent 15px 16px);background-position:-13px 0;opacity:.45"></i><i style="left:2px;top:34px;width:14px;height:1px;background:repeating-linear-gradient(90deg,#a0b0c8 0px 3px,transparent 3px 4px,#a0b0c8 4px 9px,transparent 9px 11px,#a0b0c8 11px 18px,transparent 18px 19px);background-position:-17px 0;opacity:.45"></i><i style="left:2px;top:41px;width:18px;height:1px;background:repeating-linear-gradient(90deg,#a0b0c8 0px 3px,transparent 3px 4px,#a0b0c8 4px 9px,transparent 9px 11px,#a0b0c8 11px 18px,transparent 18px 19px);background-position:-1px 0;opacity:.45"></i><i style="left:2px;top:48px;width:17px;height:1px;background:repeating-linear-gradient(90deg,#a0b0c8 0px 3px,transparent 3px 4px,#a0b0c8 4px 9px,transparent 9px 11px,#a0b0c8 11px 18px,transparent 18px 19px);background-position:-14px 0;opacity:.45"></i><i style="left:2px;top:55px;width:18px;height:1px;background:repeating-linear-gradient(90deg,#a0b0c8 0px 5px,transparent 5px 7px,#a0b0c8 7px 12px,transparent 12px 14px);background-position:-6px 0;opacity:.45"></i><i style="left:25px;top:0px;width:1px;height:65px;background:#eeeeee;"></i><i style="left:37px;top:4px;width:13px;height:1px;background:repeating-linear-gradient(90deg,#999 0px 6px,transparent 6px 8px,#999 8px 10px,transparent 10px 11px,#999 11px 15px,transparent 15px 16px);background-position:-11px 0;opacity:.45"></i><i style="left:31px;top:10px;width:3px;height:3px;background:#6aa8e0;"></i><i style="left:37px;top:11px;width:22px;height:1px;background:repeating-linear-gradient(90deg,#999 0px 4px,transparent 4px 5px,#999 5px 11px,transparent 11px 13px,#999 13px 16px,transparent 16px 17px);background-position:-12px 0;opacity:.45"></i><i style="left:31px;top:17px;width:3px;height:3px;background:#6aa8e0;"></i><i style="left:37px;top:18px;width:29px;height:1px;background:repeating-linear-gradient(90deg,#999 0px 3px,transparent 3px 4px,#999 4px 9px,transparent 9px 11px,#999 11px 18px,transparent 18px 19px);background-position:-16px 0;opacity:.45"></i><i style="left:31px;top:24px;width:3px;height:3px;background:#6aa8e0;"></i><i style="left:37px;top:25px;width:32px;height:1px;background:repeating-linear-gradient(90deg,#999 0px 4px,transparent 4px 5px,#999 5px 11px,transparent 11px 13px,#999 13px 16px,transparent 16px 17px);background-position:-15px 0;opacity:.45"></i><i style="left:31px;top:31px;width:3px;height:3px;background:#6aa8e0;"></i><i style="left:37px;top:32px;width:23px;height:1px;background:repeating-linear-gradient(90deg,#999 0px 6px,transparent 6px 8px,#999 8px 10px,transparent 10px 11px,#999 11px 15px,transparent 15px 16px);background-position:-12px 0;opacity:.45"></i><i style="left:31px;top:38px;width:3px;height:3px;background:#6aa8e0;"></i><i style="left:37px;top:39px;width:22px;height:1px;background:repeating-linear-gradient(90deg,#999 0px 5px,transparent 5px 7px,#999 7px 12px,transparent 12px 14px);background-position:-2px 0;opacity:.45"></i><i style="left:31px;top:45px;width:3px;height:3px;background:#6aa8e0;"></i><i style="left:37px;top:46px;width:26px;height:1px;background:repeating-linear-gradient(90deg,#999 0px 3px,transparent 3px 4px,#999 4px 9px,transparent 9px 11px,#999 11px 18px,transparent 18px 19px);background-position:-8px 0;opacity:.45"></i><i style="left:31px;top:52px;width:3px;height:3px;background:#6aa8e0;"></i><i style="left:37px;top:53px;width:28px;height:1px;background:repeating-linear-gradient(90deg,#999 0px 5px,transparent 5px 7px,#999 7px 12px,transparent 12px 14px);background-position:-7px 0;opacity:.45"></i><i style="left:27px;top:44px;width:59px;height:7px;box-sizing:border-box;border:1px solid #e03a3a;"></i><i style="left:0px;top:55px;width:8px;height:6px;background:#cfe0f8;box-sizing:border-box;border:1px solid #e03a3a;"></i></div></div>
<div class="lab" style="left:607px;top:237px"><span style="letter-spacing:-0.1px">chkdskimg</span><span style="letter-spacing:-0.7px">1</span></div>
<div class="th" style="left:720px;top:180px;width:90px;height:52px"><div class="tf"><i style="left:0px;top:0px;width:90px;height:52px;background:#ffffff;"></i><i style="left:0px;top:0px;width:49px;height:52px;background:#f7f7f7;"></i><i style="left:3px;top:2px;width:24px;height:1px;background:repeating-linear-gradient(90deg,#b8a060 0px 6px,transparent 6px 8px,#b8a060 8px 10px,transparent 10px 11px,#b8a060 11px 15px,transparent 15px 16px);background-position:-11px 0;opacity:.45"></i><i style="left:3px;top:6px;width:42px;height:1px;background:repeating-linear-gradient(90deg,#b8a060 0px 5px,transparent 5px 7px,#b8a060 7px 12px,transparent 12px 14px);background-position:-10px 0;opacity:.45"></i><i style="left:3px;top:10px;width:33px;height:1px;background:repeating-linear-gradient(90deg,#b8a060 0px 4px,transparent 4px 5px,#b8a060 5px 11px,transparent 11px 13px,#b8a060 13px 16px,transparent 16px 17px);background-position:-15px 0;opacity:.45"></i><i style="left:3px;top:14px;width:25px;height:1px;background:repeating-linear-gradient(90deg,#b8a060 0px 6px,transparent 6px 8px,#b8a060 8px 10px,transparent 10px 11px,#b8a060 11px 15px,transparent 15px 16px);background-position:-6px 0;opacity:.45"></i><i style="left:3px;top:18px;width:44px;height:1px;background:repeating-linear-gradient(90deg,#b8a060 0px 5px,transparent 5px 7px,#b8a060 7px 12px,transparent 12px 14px);background-position:-8px 0;opacity:.45"></i><i style="left:13px;top:13px;width:13px;height:3px;box-sizing:border-box;border:1px solid #e04040;"></i><i style="left:36px;top:27px;width:16px;height:3px;box-sizing:border-box;border:1px solid #e04040;"></i><i style="left:5px;top:28px;width:5px;height:4px;background:#e07030;"></i><i style="left:42px;top:3px;width:40px;height:23px;background:#ffffff;box-shadow:0 1px 3px rgba(0,0,0,0.3)"></i><i style="left:45px;top:8px;width:16px;height:1px;background:repeating-linear-gradient(90deg,#5a8ad8 0px 4px,transparent 4px 5px,#5a8ad8 5px 11px,transparent 11px 13px,#5a8ad8 13px 16px,transparent 16px 17px);background-position:-12px 0;opacity:.45"></i><i style="left:45px;top:12px;width:27px;height:1px;background:repeating-linear-gradient(90deg,#999 0px 3px,transparent 3px 4px,#999 4px 9px,transparent 9px 11px,#999 11px 18px,transparent 18px 19px);background-position:-16px 0;opacity:.45"></i><i style="left:45px;top:17px;width:30px;height:1px;background:repeating-linear-gradient(90deg,#7aa0e0 0px 4px,transparent 4px 5px,#7aa0e0 5px 11px,transparent 11px 13px,#7aa0e0 13px 16px,transparent 16px 17px);background-position:-15px 0;opacity:.45"></i><i style="left:45px;top:20px;width:29px;height:1px;background:repeating-linear-gradient(90deg,#7aa0e0 0px 4px,transparent 4px 5px,#7aa0e0 5px 11px,transparent 11px 13px,#7aa0e0 13px 16px,transparent 16px 17px);background-position:-0px 0;opacity:.45"></i></div></div>
<div class="lab" style="left:715px;top:237px"><span style="letter-spacing:-0.1px">chkdskimg</span><span style="letter-spacing:-0.7px">2</span></div>
<div class="th" style="left:828px;top:185px;width:90px;height:47px"><div class="tf"><i style="left:0px;top:0px;width:90px;height:47px;background:#0c0c0c;"></i><i style="left:0px;top:0px;width:90px;height:2px;background:#f0f0f0;"></i><i style="left:88px;top:0px;width:2px;height:47px;background:#d8d8d8;"></i><i style="left:1px;top:4px;width:28px;height:1px;background:repeating-linear-gradient(90deg,#777 0px 4px,transparent 4px 5px,#777 5px 11px,transparent 11px 13px,#777 13px 16px,transparent 16px 17px);background-position:-12px 0;opacity:.45"></i><i style="left:1px;top:7px;width:39px;height:1px;background:repeating-linear-gradient(90deg,#777 0px 4px,transparent 4px 5px,#777 5px 11px,transparent 11px 13px,#777 13px 16px,transparent 16px 17px);background-position:-2px 0;opacity:.45"></i></div></div>
<div class="lab" style="left:823px;top:237px"><span style="letter-spacing:-0.1px">DISMimg</span><span style="letter-spacing:-0.7px">1</span></div>
<div class="th" style="left:936px;top:194px;width:90px;height:38px"><div class="tf"><i style="left:0px;top:0px;width:90px;height:38px;background:#ffffff;"></i><i style="left:4px;top:3px;width:43px;height:1px;background:repeating-linear-gradient(90deg,#c8c8c8 0px 3px,transparent 3px 4px,#c8c8c8 4px 9px,transparent 9px 11px,#c8c8c8 11px 18px,transparent 18px 19px);background-position:-16px 0;opacity:.45"></i><i style="left:2px;top:7px;width:14px;height:1px;background:repeating-linear-gradient(90deg,#3a7ad0 0px 4px,transparent 4px 5px,#3a7ad0 5px 11px,transparent 11px 13px,#3a7ad0 13px 16px,transparent 16px 17px);background-position:-15px 0;opacity:.45"></i><i style="left:76px;top:6px;width:12px;height:3px;background:#f8c8b0;"></i><i style="left:2px;top:12px;width:2px;height:2px;background:#30a0a0;"></i><i style="left:5px;top:12px;width:8px;height:1px;background:repeating-linear-gradient(90deg,#8ab87a 0px 3px,transparent 3px 4px,#8ab87a 4px 9px,transparent 9px 11px,#8ab87a 11px 18px,transparent 18px 19px);background-position:-16px 0;opacity:.45"></i><i style="left:2px;top:16px;width:2px;height:2px;background:#3aa03a;"></i><i style="left:5px;top:16px;width:12px;height:1px;background:repeating-linear-gradient(90deg,#8ab87a 0px 5px,transparent 5px 7px,#8ab87a 7px 12px,transparent 12px 14px);background-position:-12px 0;opacity:.45"></i><i style="left:2px;top:20px;width:2px;height:2px;background:#2a7ad0;"></i><i style="left:5px;top:20px;width:11px;height:1px;background:repeating-linear-gradient(90deg,#8ab87a 0px 4px,transparent 4px 5px,#8ab87a 5px 11px,transparent 11px 13px,#8ab87a 13px 16px,transparent 16px 17px);background-position:-5px 0;opacity:.45"></i><i style="left:2px;top:24px;width:2px;height:2px;background:#3aa03a;"></i><i style="left:5px;top:24px;width:8px;height:1px;background:repeating-linear-gradient(90deg,#8ab87a 0px 5px,transparent 5px 7px,#8ab87a 7px 12px,transparent 12px 14px);background-position:-13px 0;opacity:.45"></i><i style="left:2px;top:28px;width:2px;height:2px;background:#2a7ad0;"></i><i style="left:5px;top:28px;width:9px;height:1px;background:repeating-linear-gradient(90deg,#8ab87a 0px 4px,transparent 4px 5px,#8ab87a 5px 11px,transparent 11px 13px,#8ab87a 13px 16px,transparent 16px 17px);background-position:-7px 0;opacity:.45"></i><i style="left:2px;top:32px;width:2px;height:2px;background:#3aa03a;"></i><i style="left:5px;top:32px;width:11px;height:1px;background:repeating-linear-gradient(90deg,#8ab87a 0px 6px,transparent 6px 8px,#8ab87a 8px 10px,transparent 10px 11px,#8ab87a 11px 15px,transparent 15px 16px);background-position:-13px 0;opacity:.45"></i><i style="left:18px;top:12px;width:2px;height:2px;background:#e0a030;"></i><i style="left:21px;top:12px;width:7px;height:1px;background:repeating-linear-gradient(90deg,#8ab87a 0px 5px,transparent 5px 7px,#8ab87a 7px 12px,transparent 12px 14px);background-position:-2px 0;opacity:.45"></i><i style="left:18px;top:16px;width:2px;height:2px;background:#3aa03a;"></i><i style="left:21px;top:16px;width:7px;height:1px;background:repeating-linear-gradient(90deg,#8ab87a 0px 5px,transparent 5px 7px,#8ab87a 7px 12px,transparent 12px 14px);background-position:-2px 0;opacity:.45"></i><i style="left:18px;top:20px;width:2px;height:2px;background:#2a7ad0;"></i><i style="left:21px;top:20px;width:6px;height:1px;background:repeating-linear-gradient(90deg,#8ab87a 0px 4px,transparent 4px 5px,#8ab87a 5px 11px,transparent 11px 13px,#8ab87a 13px 16px,transparent 16px 17px);background-position:-6px 0;opacity:.45"></i><i style="left:18px;top:24px;width:2px;height:2px;background:#2a7ad0;"></i><i style="left:21px;top:24px;width:7px;height:1px;background:repeating-linear-gradient(90deg,#8ab87a 0px 6px,transparent 6px 8px,#8ab87a 8px 10px,transparent 10px 11px,#8ab87a 11px 15px,transparent 15px 16px);background-position:-9px 0;opacity:.45"></i><i style="left:18px;top:28px;width:2px;height:2px;background:#e0a030;"></i><i style="left:21px;top:28px;width:7px;height:1px;background:repeating-linear-gradient(90deg,#8ab87a 0px 6px,transparent 6px 8px,#8ab87a 8px 10px,transparent 10px 11px,#8ab87a 11px 15px,transparent 15px 16px);background-position:-5px 0;opacity:.45"></i><i style="left:18px;top:32px;width:2px;height:2px;background:#2a7ad0;"></i><i style="left:21px;top:32px;width:9px;height:1px;background:repeating-linear-gradient(90deg,#8ab87a 0px 3px,transparent 3px 4px,#8ab87a 4px 9px,transparent 9px 11px,#8ab87a 11px 18px,transparent 18px 19px);background-position:-0px 0;opacity:.45"></i><i style="left:34px;top:12px;width:2px;height:2px;background:#e0a030;"></i><i style="left:37px;top:12px;width:9px;height:1px;background:repeating-linear-gradient(90deg,#8ab87a 0px 6px,transparent 6px 8px,#8ab87a 8px 10px,transparent 10px 11px,#8ab87a 11px 15px,transparent 15px 16px);background-position:-4px 0;opacity:.45"></i><i style="left:34px;top:16px;width:2px;height:2px;background:#e0a030;"></i><i style="left:37px;top:16px;width:6px;height:1px;background:repeating-linear-gradient(90deg,#8ab87a 0px 3px,transparent 3px 4px,#8ab87a 4px 9px,transparent 9px 11px,#8ab87a 11px 18px,transparent 18px 19px);background-position:-9px 0;opacity:.45"></i><i style="left:34px;top:20px;width:2px;height:2px;background:#30a0a0;"></i><i style="left:37px;top:20px;width:10px;height:1px;background:repeating-linear-gradient(90deg,#8ab87a 0px 4px,transparent 4px 5px,#8ab87a 5px 11px,transparent 11px 13px,#8ab87a 13px 16px,transparent 16px 17px);background-position:-10px 0;opacity:.45"></i><i style="left:34px;top:24px;width:2px;height:2px;background:#3aa03a;"></i><i style="left:37px;top:24px;width:8px;height:1px;background:repeating-linear-gradient(90deg,#8ab87a 0px 3px,transparent 3px 4px,#8ab87a 4px 9px,transparent 9px 11px,#8ab87a 11px 18px,transparent 18px 19px);background-position:-9px 0;opacity:.45"></i><i style="left:34px;top:28px;width:2px;height:2px;background:#7a5ac0;"></i><i style="left:37px;top:28px;width:11px;height:1px;background:repeating-linear-gradient(90deg,#8ab87a 0px 3px,transparent 3px 4px,#8ab87a 4px 9px,transparent 9px 11px,#8ab87a 11px 18px,transparent 18px 19px);background-position:-5px 0;opacity:.45"></i><i style="left:34px;top:32px;width:2px;height:2px;background:#7a5ac0;"></i><i style="left:37px;top:32px;width:9px;height:1px;background:repeating-linear-gradient(90deg,#8ab87a 0px 6px,transparent 6px 8px,#8ab87a 8px 10px,transparent 10px 11px,#8ab87a 11px 15px,transparent 15px 16px);background-position:-1px 0;opacity:.45"></i><i style="left:50px;top:12px;width:2px;height:2px;background:#e0a030;"></i><i style="left:53px;top:12px;width:6px;height:1px;background:repeating-linear-gradient(90deg,#8ab87a 0px 3px,transparent 3px 4px,#8ab87a 4px 9px,transparent 9px 11px,#8ab87a 11px 18px,transparent 18px 19px);background-position:-12px 0;opacity:.45"></i><i style="left:50px;top:16px;width:2px;height:2px;background:#3aa03a;"></i><i style="left:53px;top:16px;width:10px;height:1px;background:repeating-linear-gradient(90deg,#8ab87a 0px 5px,transparent 5px 7px,#8ab87a 7px 12px,transparent 12px 14px);background-position:-5px 0;opacity:.45"></i><i style="left:50px;top:20px;width:2px;height:2px;background:#7a5ac0;"></i><i style="left:53px;top:20px;width:10px;height:1px;background:repeating-linear-gradient(90deg,#8ab87a 0px 4px,transparent 4px 5px,#8ab87a 5px 11px,transparent 11px 13px,#8ab87a 13px 16px,transparent 16px 17px);background-position:-14px 0;opacity:.45"></i><i style="left:50px;top:24px;width:2px;height:2px;background:#3aa03a;"></i><i style="left:53px;top:24px;width:11px;height:1px;background:repeating-linear-gradient(90deg,#8ab87a 0px 6px,transparent 6px 8px,#8ab87a 8px 10px,transparent 10px 11px,#8ab87a 11px 15px,transparent 15px 16px);background-position:-6px 0;opacity:.45"></i><i style="left:50px;top:28px;width:2px;height:2px;background:#3aa03a;"></i><i style="left:53px;top:28px;width:12px;height:1px;background:repeating-linear-gradient(90deg,#8ab87a 0px 6px,transparent 6px 8px,#8ab87a 8px 10px,transparent 10px 11px,#8ab87a 11px 15px,transparent 15px 16px);background-position:-14px 0;opacity:.45"></i><i style="left:50px;top:32px;width:2px;height:2px;background:#e0a030;"></i><i style="left:53px;top:32px;width:10px;height:1px;background:repeating-linear-gradient(90deg,#8ab87a 0px 3px,transparent 3px 4px,#8ab87a 4px 9px,transparent 9px 11px,#8ab87a 11px 18px,transparent 18px 19px);background-position:-16px 0;opacity:.45"></i><i style="left:66px;top:12px;width:2px;height:2px;background:#e0a030;"></i><i style="left:69px;top:12px;width:12px;height:1px;background:repeating-linear-gradient(90deg,#8ab87a 0px 5px,transparent 5px 7px,#8ab87a 7px 12px,transparent 12px 14px);background-position:-1px 0;opacity:.45"></i><i style="left:66px;top:16px;width:2px;height:2px;background:#30a0a0;"></i><i style="left:69px;top:16px;width:11px;height:1px;background:repeating-linear-gradient(90deg,#8ab87a 0px 3px,transparent 3px 4px,#8ab87a 4px 9px,transparent 9px 11px,#8ab87a 11px 18px,transparent 18px 19px);background-position:-9px 0;opacity:.45"></i><i style="left:66px;top:20px;width:2px;height:2px;background:#3aa03a;"></i><i style="left:69px;top:20px;width:9px;height:1px;background:repeating-linear-gradient(90deg,#8ab87a 0px 4px,transparent 4px 5px,#8ab87a 5px 11px,transparent 11px 13px,#8ab87a 13px 16px,transparent 16px 17px);background-position:-6px 0;opacity:.45"></i><i style="left:66px;top:24px;width:2px;height:2px;background:#e0a030;"></i><i style="left:69px;top:24px;width:10px;height:1px;background:repeating-linear-gradient(90deg,#8ab87a 0px 3px,transparent 3px 4px,#8ab87a 4px 9px,transparent 9px 11px,#8ab87a 11px 18px,transparent 18px 19px);background-position:-4px 0;opacity:.45"></i><i style="left:66px;top:28px;width:2px;height:2px;background:#e0a030;"></i><i style="left:69px;top:28px;width:8px;height:1px;background:repeating-linear-gradient(90deg,#8ab87a 0px 4px,transparent 4px 5px,#8ab87a 5px 11px,transparent 11px 13px,#8ab87a 13px 16px,transparent 16px 17px);background-position:-9px 0;opacity:.45"></i><i style="left:66px;top:32px;width:2px;height:2px;background:#e0a030;"></i><i style="left:69px;top:32px;width:8px;height:1px;background:repeating-linear-gradient(90deg,#8ab87a 0px 6px,transparent 6px 8px,#8ab87a 8px 10px,transparent 10px 11px,#8ab87a 11px 15px,transparent 15px 16px);background-position:-2px 0;opacity:.45"></i><i style="left:12px;top:10px;width:12px;height:5px;box-sizing:border-box;border:1px solid #f08050;"></i></div></div>
<div class="lab" style="left:931px;top:237px"><span style="letter-spacing:-0.1px">imbackup</span><span style="letter-spacing:-0.7px">1</span></div>
<div class="th" style="left:1044px;top:195px;width:90px;height:37px"><div class="tf"><i style="left:0px;top:0px;width:90px;height:37px;background:#ffffff;"></i><i style="left:2px;top:1px;width:75px;height:1px;background:repeating-linear-gradient(90deg,#d0d0d0 0px 4px,transparent 4px 5px,#d0d0d0 5px 11px,transparent 11px 13px,#d0d0d0 13px 16px,transparent 16px 17px);background-position:-15px 0;opacity:.45"></i><i style="left:0px;top:3px;width:90px;height:1px;background:#f0f0f0;"></i><i style="left:5px;top:4px;width:29px;height:1px;background:repeating-linear-gradient(90deg,#b0c8e0 0px 6px,transparent 6px 8px,#b0c8e0 8px 10px,transparent 10px 11px,#b0c8e0 11px 15px,transparent 15px 16px);background-position:-12px 0;opacity:.45"></i><i style="left:1px;top:8px;width:14px;height:4px;background:#f06a6a;"></i><i style="left:18px;top:7px;width:9px;height:1px;background:repeating-linear-gradient(90deg,#5a8ad8 0px 5px,transparent 5px 7px,#5a8ad8 7px 12px,transparent 12px 14px);background-position:-2px 0;opacity:.45"></i><i style="left:18px;top:10px;width:29px;height:1px;background:repeating-linear-gradient(90deg,#c0c0c0 0px 3px,transparent 3px 4px,#c0c0c0 4px 9px,transparent 9px 11px,#c0c0c0 11px 18px,transparent 18px 19px);background-position:-8px 0;opacity:.45"></i><i style="left:18px;top:14px;width:28px;height:1px;background:repeating-linear-gradient(90deg,#9a9a9a 0px 5px,transparent 5px 7px,#9a9a9a 7px 12px,transparent 12px 14px);background-position:-7px 0;opacity:.45"></i><i style="left:18px;top:16px;width:28px;height:1px;background:repeating-linear-gradient(90deg,#9a9a9a 0px 6px,transparent 6px 8px,#9a9a9a 8px 10px,transparent 10px 11px,#9a9a9a 11px 15px,transparent 15px 16px);background-position:-14px 0;opacity:.45"></i></div></div>
<div class="lab" style="left:1039px;top:237px"><span style="letter-spacing:-0.1px">imbackup</span><span style="letter-spacing:-0.7px">2</span></div>
<div class="th" style="left:1152px;top:149px;width:90px;height:83px"><div class="tf"><i style="left:0px;top:0px;width:90px;height:83px;background:#ffffff;"></i><i style="left:5px;top:3px;width:13px;height:1px;background:repeating-linear-gradient(90deg,#9a9a9a 0px 6px,transparent 6px 8px,#9a9a9a 8px 10px,transparent 10px 11px,#9a9a9a 11px 15px,transparent 15px 16px);background-position:-12px 0;opacity:.45"></i><i style="left:6px;top:10px;width:41px;height:1px;background:repeating-linear-gradient(90deg,#3a6ad0 0px 5px,transparent 5px 7px,#3a6ad0 7px 12px,transparent 12px 14px);background-position:-2px 0;opacity:.45"></i><i style="left:6px;top:18px;width:59px;height:1px;background:repeating-linear-gradient(90deg,#aaa 0px 3px,transparent 3px 4px,#aaa 4px 9px,transparent 9px 11px,#aaa 11px 18px,transparent 18px 19px);background-position:-8px 0;opacity:.45"></i><i style="left:6px;top:20px;width:49px;height:1px;background:repeating-linear-gradient(90deg,#aaa 0px 4px,transparent 4px 5px,#aaa 5px 11px,transparent 11px 13px,#aaa 13px 16px,transparent 16px 17px);background-position:-10px 0;opacity:.45"></i><i style="left:6px;top:22px;width:60px;height:1px;background:repeating-linear-gradient(90deg,#aaa 0px 4px,transparent 4px 5px,#aaa 5px 11px,transparent 11px 13px,#aaa 13px 16px,transparent 16px 17px);background-position:-10px 0;opacity:.45"></i><i style="left:6px;top:29px;width:3px;height:3px;background:#3a7ad8;border-radius:2px;"></i><i style="left:10px;top:29px;width:15px;height:1px;background:repeating-linear-gradient(90deg,#888 0px 5px,transparent 5px 7px,#888 7px 12px,transparent 12px 14px);background-position:-7px 0;opacity:.45"></i><i style="left:10px;top:34px;width:45px;height:4px;box-sizing:border-box;border:1px solid #dadada;"></i><i style="left:9px;top:40px;width:3px;height:3px;background:#f0b020;"></i><i style="left:14px;top:40px;width:49px;height:1px;background:repeating-linear-gradient(90deg,#777 0px 5px,transparent 5px 7px,#777 7px 12px,transparent 12px 14px);background-position:-7px 0;opacity:.45"></i><i style="left:14px;top:42px;width:51px;height:1px;background:repeating-linear-gradient(90deg,#777 0px 6px,transparent 6px 8px,#777 8px 10px,transparent 10px 11px,#777 11px 15px,transparent 15px 16px);background-position:-5px 0;opacity:.45"></i><i style="left:6px;top:49px;width:17px;height:1px;background:repeating-linear-gradient(90deg,#aaa 0px 3px,transparent 3px 4px,#aaa 4px 9px,transparent 9px 11px,#aaa 11px 18px,transparent 18px 19px);background-position:-4px 0;opacity:.45"></i><i style="left:10px;top:54px;width:45px;height:4px;box-sizing:border-box;border:1px solid #dadada;"></i><i style="left:0px;top:75px;width:90px;height:8px;background:#f0f0f0;"></i><i style="left:64px;top:77px;width:10px;height:4px;background:#ffffff;box-sizing:border-box;border:1px solid #6a9ad8;"></i><i style="left:77px;top:77px;width:10px;height:4px;background:#ffffff;box-sizing:border-box;border:1px solid #c0c0c0;"></i></div></div>
<div class="lab" style="left:1147px;top:237px"><span style="letter-spacing:-0.1px">imbackup</span><span style="letter-spacing:-0.7px">3</span></div>
<div class="th" style="left:1260px;top:148px;width:90px;height:84px"><div class="tf"><i style="left:0px;top:0px;width:90px;height:84px;background:#ffffff;"></i><i style="left:5px;top:3px;width:13px;height:1px;background:repeating-linear-gradient(90deg,#9a9a9a 0px 6px,transparent 6px 8px,#9a9a9a 8px 10px,transparent 10px 11px,#9a9a9a 11px 15px,transparent 15px 16px);background-position:-12px 0;opacity:.45"></i><i style="left:6px;top:10px;width:41px;height:1px;background:repeating-linear-gradient(90deg,#3a6ad0 0px 5px,transparent 5px 7px,#3a6ad0 7px 12px,transparent 12px 14px);background-position:-2px 0;opacity:.45"></i><i style="left:6px;top:18px;width:59px;height:1px;background:repeating-linear-gradient(90deg,#aaa 0px 3px,transparent 3px 4px,#aaa 4px 9px,transparent 9px 11px,#aaa 11px 18px,transparent 18px 19px);background-position:-8px 0;opacity:.45"></i><i style="left:6px;top:20px;width:49px;height:1px;background:repeating-linear-gradient(90deg,#aaa 0px 4px,transparent 4px 5px,#aaa 5px 11px,transparent 11px 13px,#aaa 13px 16px,transparent 16px 17px);background-position:-10px 0;opacity:.45"></i><i style="left:6px;top:22px;width:60px;height:1px;background:repeating-linear-gradient(90deg,#aaa 0px 4px,transparent 4px 5px,#aaa 5px 11px,transparent 11px 13px,#aaa 13px 16px,transparent 16px 17px);background-position:-10px 0;opacity:.45"></i><i style="left:6px;top:30px;width:3px;height:3px;background:#3a7ad8;border-radius:2px;"></i><i style="left:10px;top:30px;width:15px;height:1px;background:repeating-linear-gradient(90deg,#888 0px 5px,transparent 5px 7px,#888 7px 12px,transparent 12px 14px);background-position:-7px 0;opacity:.45"></i><i style="left:10px;top:35px;width:45px;height:4px;box-sizing:border-box;border:1px solid #dadada;"></i><i style="left:6px;top:50px;width:17px;height:1px;background:repeating-linear-gradient(90deg,#aaa 0px 3px,transparent 3px 4px,#aaa 4px 9px,transparent 9px 11px,#aaa 11px 18px,transparent 18px 19px);background-position:-4px 0;opacity:.45"></i><i style="left:10px;top:55px;width:45px;height:4px;box-sizing:border-box;border:1px solid #dadada;"></i><i style="left:0px;top:76px;width:90px;height:8px;background:#f0f0f0;"></i><i style="left:64px;top:78px;width:10px;height:4px;background:#ffffff;box-sizing:border-box;border:1px solid #6a9ad8;"></i><i style="left:77px;top:78px;width:10px;height:4px;background:#ffffff;box-sizing:border-box;border:1px solid #c0c0c0;"></i></div></div>
<div class="th" style="left:180px;top:297px;width:90px;height:67px"><div class="tf"><i style="left:0px;top:0px;width:90px;height:67px;background:#1e64b4;"></i><i style="left:6px;top:5px;width:30px;height:1px;background:repeating-linear-gradient(90deg,#c8dcf4 0px 5px,transparent 5px 7px,#c8dcf4 7px 12px,transparent 12px 14px);background-position:-10px 0;opacity:.45"></i><i style="left:9px;top:10px;width:20px;height:8px;background:#4d86c8;"></i><i style="left:10px;top:11px;width:6px;height:6px;background:#8ab4e6;"></i><i style="left:17px;top:12px;width:6px;height:1px;background:repeating-linear-gradient(90deg,#c0d8f0 0px 5px,transparent 5px 7px,#c0d8f0 7px 12px,transparent 12px 14px);background-position:-2px 0;opacity:.45"></i><i style="left:17px;top:14px;width:6px;height:1px;background:repeating-linear-gradient(90deg,#c0d8f0 0px 4px,transparent 4px 5px,#c0d8f0 5px 11px,transparent 11px 13px,#c0d8f0 13px 16px,transparent 16px 17px);background-position:-2px 0;opacity:.45"></i><i style="left:9px;top:40px;width:14px;height:1px;background:repeating-linear-gradient(90deg,#7aa4d8 0px 3px,transparent 3px 4px,#7aa4d8 4px 9px,transparent 9px 11px,#7aa4d8 11px 18px,transparent 18px 19px);background-position:-8px 0;opacity:.45"></i></div></div>
<div class="lab" style="left:175px;top:369px"><span style="letter-spacing:-0.1px">imrestore</span><span style="letter-spacing:-0.7px">3</span></div>
<div class="th" style="left:288px;top:323px;width:90px;height:41px"><div class="tf"><i style="left:0px;top:0px;width:90px;height:41px;background:#ffffff;"></i><i style="left:7px;top:6px;width:3px;height:2px;background:#4285f4;"></i><i style="left:10px;top:6px;width:2px;height:2px;background:#ea4335;"></i><i style="left:12px;top:6px;width:2px;height:2px;background:#fbbc04;"></i><i style="left:14px;top:6px;width:2px;height:2px;background:#34a853;"></i><i style="left:22px;top:4px;width:54px;height:5px;box-sizing:border-box;border:1px solid #e0e0e0;border-radius:2px;"></i><i style="left:22px;top:11px;width:28px;height:1px;background:repeating-linear-gradient(90deg,#b0b0b0 0px 5px,transparent 5px 7px,#b0b0b0 7px 12px,transparent 12px 14px);background-position:-7px 0;opacity:.45"></i><i style="left:0px;top:13px;width:90px;height:1px;background:#ececec;"></i><i style="left:20px;top:16px;width:3px;height:3px;background:#f0c040;border-radius:2px;"></i><i style="left:25px;top:16px;width:14px;height:1px;background:repeating-linear-gradient(90deg,#888 0px 5px,transparent 5px 7px,#888 7px 12px,transparent 12px 14px);background-position:-7px 0;opacity:.45"></i><i style="left:20px;top:19px;width:39px;height:1px;background:repeating-linear-gradient(90deg,#7a4ad0 0px 6px,transparent 6px 8px,#7a4ad0 8px 10px,transparent 10px 11px,#7a4ad0 11px 15px,transparent 15px 16px);background-position:-8px 0;opacity:.45"></i><i style="left:20px;top:21px;width:52px;height:1px;background:repeating-linear-gradient(90deg,#9a9a9a 0px 3px,transparent 3px 4px,#9a9a9a 4px 9px,transparent 9px 11px,#9a9a9a 11px 18px,transparent 18px 19px);background-position:-0px 0;opacity:.45"></i><i style="left:20px;top:23px;width:53px;height:1px;background:repeating-linear-gradient(90deg,#9a9a9a 0px 6px,transparent 6px 8px,#9a9a9a 8px 10px,transparent 10px 11px,#9a9a9a 11px 15px,transparent 15px 16px);background-position:-8px 0;opacity:.45"></i><i style="left:20px;top:27px;width:3px;height:3px;background:#f0c040;border-radius:2px;"></i><i style="left:25px;top:27px;width:13px;height:1px;background:repeating-linear-gradient(90deg,#888 0px 5px,transparent 5px 7px,#888 7px 12px,transparent 12px 14px);background-position:-7px 0;opacity:.45"></i><i style="left:20px;top:30px;width:33px;height:1px;background:repeating-linear-gradient(90deg,#7a4ad0 0px 5px,transparent 5px 7px,#7a4ad0 7px 12px,transparent 12px 14px);background-position:-10px 0;opacity:.45"></i><i style="left:20px;top:32px;width:46px;height:1px;background:repeating-linear-gradient(90deg,#9a9a9a 0px 4px,transparent 4px 5px,#9a9a9a 5px 11px,transparent 11px 13px,#9a9a9a 13px 16px,transparent 16px 17px);background-position:-12px 0;opacity:.45"></i><i style="left:20px;top:34px;width:48px;height:1px;background:repeating-linear-gradient(90deg,#9a9a9a 0px 4px,transparent 4px 5px,#9a9a9a 5px 11px,transparent 11px 13px,#9a9a9a 13px 16px,transparent 16px 17px);background-position:-4px 0;opacity:.45"></i><i style="left:18px;top:14px;width:54px;height:14px;box-sizing:border-box;border:1px solid #e06060;"></i></div></div>
<div class="lab" style="left:283px;top:369px"><span style="letter-spacing:-0.1px">mediaimg</span><span style="letter-spacing:-0.7px">1</span></div>
<div class="th" style="left:396px;top:332px;width:90px;height:32px"><div class="tf"><i style="left:0px;top:0px;width:90px;height:32px;background:#ffffff;"></i><i style="left:6px;top:6px;width:33px;height:1px;background:repeating-linear-gradient(90deg,#333 0px 5px,transparent 5px 7px,#333 7px 12px,transparent 12px 14px);background-position:-7px 0;opacity:.45"></i><i style="left:6px;top:10px;width:34px;height:1px;background:repeating-linear-gradient(90deg,#333 0px 6px,transparent 6px 8px,#333 8px 10px,transparent 10px 11px,#333 11px 15px,transparent 15px 16px);background-position:-5px 0;opacity:.45"></i><i style="left:6px;top:14px;width:68px;height:1px;background:repeating-linear-gradient(90deg,#888 0px 3px,transparent 3px 4px,#888 4px 9px,transparent 9px 11px,#888 11px 18px,transparent 18px 19px);background-position:-4px 0;opacity:.45"></i><i style="left:6px;top:16px;width:66px;height:1px;background:repeating-linear-gradient(90deg,#888 0px 3px,transparent 3px 4px,#888 4px 9px,transparent 9px 11px,#888 11px 18px,transparent 18px 19px);background-position:-15px 0;opacity:.45"></i><i style="left:6px;top:19px;width:64px;height:1px;background:repeating-linear-gradient(90deg,#888 0px 6px,transparent 6px 8px,#888 8px 10px,transparent 10px 11px,#888 11px 15px,transparent 15px 16px);background-position:-7px 0;opacity:.45"></i><i style="left:6px;top:21px;width:70px;height:1px;background:repeating-linear-gradient(90deg,#888 0px 6px,transparent 6px 8px,#888 8px 10px,transparent 10px 11px,#888 11px 15px,transparent 15px 16px);background-position:-5px 0;opacity:.45"></i><i style="left:6px;top:23px;width:78px;height:1px;background:#e8e8e8;"></i><i style="left:10px;top:24px;width:19px;height:1px;background:repeating-linear-gradient(90deg,#999 0px 6px,transparent 6px 8px,#999 8px 10px,transparent 10px 11px,#999 11px 15px,transparent 15px 16px);background-position:-8px 0;opacity:.45"></i><i style="left:6px;top:25px;width:11px;height:5px;background:#2a7ad8;box-sizing:border-box;border:1px solid #f0a0a0;"></i></div></div>
<div class="lab" style="left:391px;top:369px"><span style="letter-spacing:-0.1px">mediaimg</span><span style="letter-spacing:-0.7px">2</span></div>
<div class="th" style="left:504px;top:300px;width:90px;height:64px"><div class="tf"><i style="left:0px;top:0px;width:90px;height:64px;background:#ffffff;"></i><i style="left:5px;top:3px;width:13px;height:1px;background:repeating-linear-gradient(90deg,#9a9a9a 0px 6px,transparent 6px 8px,#9a9a9a 8px 10px,transparent 10px 11px,#9a9a9a 11px 15px,transparent 15px 16px);background-position:-12px 0;opacity:.45"></i><i style="left:6px;top:8px;width:41px;height:1px;background:repeating-linear-gradient(90deg,#3a6ad0 0px 5px,transparent 5px 7px,#3a6ad0 7px 12px,transparent 12px 14px);background-position:-2px 0;opacity:.45"></i><i style="left:6px;top:14px;width:59px;height:1px;background:repeating-linear-gradient(90deg,#aaa 0px 3px,transparent 3px 4px,#aaa 4px 9px,transparent 9px 11px,#aaa 11px 18px,transparent 18px 19px);background-position:-8px 0;opacity:.45"></i><i style="left:6px;top:16px;width:49px;height:1px;background:repeating-linear-gradient(90deg,#aaa 0px 4px,transparent 4px 5px,#aaa 5px 11px,transparent 11px 13px,#aaa 13px 16px,transparent 16px 17px);background-position:-10px 0;opacity:.45"></i><i style="left:6px;top:18px;width:60px;height:1px;background:repeating-linear-gradient(90deg,#aaa 0px 4px,transparent 4px 5px,#aaa 5px 11px,transparent 11px 13px,#aaa 13px 16px,transparent 16px 17px);background-position:-10px 0;opacity:.45"></i><i style="left:6px;top:23px;width:3px;height:3px;background:#3a7ad8;border-radius:2px;"></i><i style="left:10px;top:23px;width:15px;height:1px;background:repeating-linear-gradient(90deg,#888 0px 5px,transparent 5px 7px,#888 7px 12px,transparent 12px 14px);background-position:-7px 0;opacity:.45"></i><i style="left:10px;top:26px;width:45px;height:4px;box-sizing:border-box;border:1px solid #dadada;"></i><i style="left:6px;top:38px;width:17px;height:1px;background:repeating-linear-gradient(90deg,#aaa 0px 3px,transparent 3px 4px,#aaa 4px 9px,transparent 9px 11px,#aaa 11px 18px,transparent 18px 19px);background-position:-4px 0;opacity:.45"></i><i style="left:10px;top:42px;width:45px;height:4px;box-sizing:border-box;border:1px solid #dadada;"></i><i style="left:0px;top:58px;width:90px;height:6px;background:#f0f0f0;"></i><i style="left:64px;top:60px;width:10px;height:2px;background:#ffffff;box-sizing:border-box;border:1px solid #6a9ad8;"></i><i style="left:77px;top:60px;width:10px;height:2px;background:#ffffff;box-sizing:border-box;border:1px solid #c0c0c0;"></i></div></div>
<div class="lab" style="left:499px;top:369px"><span style="letter-spacing:-0.1px">mediaimg</span><span style="letter-spacing:-0.7px">3</span></div>
<div class="th" style="left:612px;top:292px;width:90px;height:72px"><div class="tf"><i style="left:0px;top:0px;width:90px;height:72px;background:#ffffff;"></i><i style="left:5px;top:3px;width:13px;height:1px;background:repeating-linear-gradient(90deg,#9a9a9a 0px 6px,transparent 6px 8px,#9a9a9a 8px 10px,transparent 10px 11px,#9a9a9a 11px 15px,transparent 15px 16px);background-position:-12px 0;opacity:.45"></i><i style="left:6px;top:9px;width:41px;height:1px;background:repeating-linear-gradient(90deg,#3a6ad0 0px 5px,transparent 5px 7px,#3a6ad0 7px 12px,transparent 12px 14px);background-position:-2px 0;opacity:.45"></i><i style="left:3px;top:15px;width:65px;height:1px;background:repeating-linear-gradient(90deg,#333 0px 3px,transparent 3px 4px,#333 4px 9px,transparent 9px 11px,#333 11px 18px,transparent 18px 19px);background-position:-8px 0;opacity:.45"></i><i style="left:3px;top:17px;width:57px;height:1px;background:repeating-linear-gradient(90deg,#333 0px 4px,transparent 4px 5px,#333 5px 11px,transparent 11px 13px,#333 13px 16px,transparent 16px 17px);background-position:-10px 0;opacity:.45"></i><i style="left:3px;top:19px;width:66px;height:1px;background:repeating-linear-gradient(90deg,#333 0px 4px,transparent 4px 5px,#333 5px 11px,transparent 11px 13px,#333 13px 16px,transparent 16px 17px);background-position:-10px 0;opacity:.45"></i><i style="left:3px;top:21px;width:67px;height:1px;background:repeating-linear-gradient(90deg,#333 0px 4px,transparent 4px 5px,#333 5px 11px,transparent 11px 13px,#333 13px 16px,transparent 16px 17px);background-position:-12px 0;opacity:.45"></i><i style="left:3px;top:23px;width:58px;height:1px;background:repeating-linear-gradient(90deg,#333 0px 5px,transparent 5px 7px,#333 7px 12px,transparent 12px 14px);background-position:-11px 0;opacity:.45"></i><i style="left:3px;top:25px;width:64px;height:1px;background:repeating-linear-gradient(90deg,#333 0px 6px,transparent 6px 8px,#333 8px 10px,transparent 10px 11px,#333 11px 15px,transparent 15px 16px);background-position:-7px 0;opacity:.45"></i><i style="left:3px;top:27px;width:55px;height:1px;background:repeating-linear-gradient(90deg,#333 0px 6px,transparent 6px 8px,#333 8px 10px,transparent 10px 11px,#333 11px 15px,transparent 15px 16px);background-position:-2px 0;opacity:.45"></i><i style="left:3px;top:29px;width:72px;height:1px;background:repeating-linear-gradient(90deg,#333 0px 5px,transparent 5px 7px,#333 7px 12px,transparent 12px 14px);background-position:-12px 0;opacity:.45"></i><i style="left:3px;top:31px;width:72px;height:1px;background:repeating-linear-gradient(90deg,#333 0px 4px,transparent 4px 5px,#333 5px 11px,transparent 11px 13px,#333 13px 16px,transparent 16px 17px);background-position:-9px 0;opacity:.45"></i><i style="left:3px;top:33px;width:59px;height:1px;background:repeating-linear-gradient(90deg,#333 0px 6px,transparent 6px 8px,#333 8px 10px,transparent 10px 11px,#333 11px 15px,transparent 15px 16px);background-position:-13px 0;opacity:.45"></i><i style="left:3px;top:35px;width:75px;height:1px;background:repeating-linear-gradient(90deg,#333 0px 3px,transparent 3px 4px,#333 4px 9px,transparent 9px 11px,#333 11px 18px,transparent 18px 19px);background-position:-6px 0;opacity:.45"></i><i style="left:3px;top:37px;width:63px;height:1px;background:repeating-linear-gradient(90deg,#333 0px 3px,transparent 3px 4px,#333 4px 9px,transparent 9px 11px,#333 11px 18px,transparent 18px 19px);background-position:-1px 0;opacity:.45"></i><i style="left:3px;top:39px;width:59px;height:1px;background:repeating-linear-gradient(90deg,#333 0px 4px,transparent 4px 5px,#333 5px 11px,transparent 11px 13px,#333 13px 16px,transparent 16px 17px);background-position:-13px 0;opacity:.45"></i><i style="left:3px;top:41px;width:55px;height:1px;background:repeating-linear-gradient(90deg,#333 0px 5px,transparent 5px 7px,#333 7px 12px,transparent 12px 14px);background-position:-13px 0;opacity:.45"></i><i style="left:3px;top:43px;width:66px;height:1px;background:repeating-linear-gradient(90deg,#333 0px 4px,transparent 4px 5px,#333 5px 11px,transparent 11px 13px,#333 13px 16px,transparent 16px 17px);background-position:-7px 0;opacity:.45"></i><i style="left:3px;top:45px;width:64px;height:1px;background:repeating-linear-gradient(90deg,#333 0px 4px,transparent 4px 5px,#333 5px 11px,transparent 11px 13px,#333 13px 16px,transparent 16px 17px);background-position:-0px 0;opacity:.45"></i><i style="left:0px;top:65px;width:90px;height:7px;background:#f0f0f0;"></i><i style="left:64px;top:67px;width:10px;height:3px;background:#ffffff;box-sizing:border-box;border:1px solid #6a9ad8;"></i><i style="left:77px;top:67px;width:10px;height:3px;background:#ffffff;box-sizing:border-box;border:1px solid #c0c0c0;"></i></div></div>
<div class="lab" style="left:607px;top:369px"><span style="letter-spacing:-0.1px">mediaimg</span><span style="letter-spacing:-0.7px">4</span></div>
<div class="th" style="left:720px;top:293px;width:90px;height:71px"><div class="tf"><i style="left:0px;top:0px;width:90px;height:71px;background:#ffffff;"></i><i style="left:5px;top:3px;width:13px;height:1px;background:repeating-linear-gradient(90deg,#9a9a9a 0px 6px,transparent 6px 8px,#9a9a9a 8px 10px,transparent 10px 11px,#9a9a9a 11px 15px,transparent 15px 16px);background-position:-12px 0;opacity:.45"></i><i style="left:6px;top:9px;width:41px;height:1px;background:repeating-linear-gradient(90deg,#3a6ad0 0px 5px,transparent 5px 7px,#3a6ad0 7px 12px,transparent 12px 14px);background-position:-2px 0;opacity:.45"></i><i style="left:6px;top:16px;width:59px;height:1px;background:repeating-linear-gradient(90deg,#aaa 0px 3px,transparent 3px 4px,#aaa 4px 9px,transparent 9px 11px,#aaa 11px 18px,transparent 18px 19px);background-position:-8px 0;opacity:.45"></i><i style="left:6px;top:18px;width:49px;height:1px;background:repeating-linear-gradient(90deg,#aaa 0px 4px,transparent 4px 5px,#aaa 5px 11px,transparent 11px 13px,#aaa 13px 16px,transparent 16px 17px);background-position:-10px 0;opacity:.45"></i><i style="left:6px;top:20px;width:60px;height:1px;background:repeating-linear-gradient(90deg,#aaa 0px 4px,transparent 4px 5px,#aaa 5px 11px,transparent 11px 13px,#aaa 13px 16px,transparent 16px 17px);background-position:-10px 0;opacity:.45"></i><i style="left:6px;top:25px;width:3px;height:3px;background:#3a7ad8;border-radius:2px;"></i><i style="left:10px;top:25px;width:15px;height:1px;background:repeating-linear-gradient(90deg,#888 0px 5px,transparent 5px 7px,#888 7px 12px,transparent 12px 14px);background-position:-7px 0;opacity:.45"></i><i style="left:10px;top:29px;width:45px;height:4px;box-sizing:border-box;border:1px solid #dadada;"></i><i style="left:6px;top:42px;width:17px;height:1px;background:repeating-linear-gradient(90deg,#aaa 0px 3px,transparent 3px 4px,#aaa 4px 9px,transparent 9px 11px,#aaa 11px 18px,transparent 18px 19px);background-position:-4px 0;opacity:.45"></i><i style="left:10px;top:46px;width:45px;height:4px;box-sizing:border-box;border:1px solid #dadada;"></i><i style="left:0px;top:64px;width:90px;height:7px;background:#f0f0f0;"></i><i style="left:64px;top:66px;width:10px;height:3px;background:#ffffff;box-sizing:border-box;border:1px solid #6a9ad8;"></i><i style="left:77px;top:66px;width:10px;height:3px;background:#ffffff;box-sizing:border-box;border:1px solid #c0c0c0;"></i></div></div>
<div class="lab" style="left:715px;top:369px"><span style="letter-spacing:-0.1px">mediaimg</span><span style="letter-spacing:-0.7px">5</span></div>
<div class="th" style="left:828px;top:293px;width:90px;height:71px"><div class="tf"><i style="left:0px;top:0px;width:90px;height:71px;background:#ffffff;"></i><i style="left:5px;top:3px;width:13px;height:1px;background:repeating-linear-gradient(90deg,#9a9a9a 0px 6px,transparent 6px 8px,#9a9a9a 8px 10px,transparent 10px 11px,#9a9a9a 11px 15px,transparent 15px 16px);background-position:-12px 0;opacity:.45"></i><i style="left:6px;top:9px;width:41px;height:1px;background:repeating-linear-gradient(90deg,#3a6ad0 0px 5px,transparent 5px 7px,#3a6ad0 7px 12px,transparent 12px 14px);background-position:-2px 0;opacity:.45"></i><i style="left:6px;top:16px;width:59px;height:1px;background:repeating-linear-gradient(90deg,#aaa 0px 3px,transparent 3px 4px,#aaa 4px 9px,transparent 9px 11px,#aaa 11px 18px,transparent 18px 19px);background-position:-8px 0;opacity:.45"></i><i style="left:6px;top:18px;width:49px;height:1px;background:repeating-linear-gradient(90deg,#aaa 0px 4px,transparent 4px 5px,#aaa 5px 11px,transparent 11px 13px,#aaa 13px 16px,transparent 16px 17px);background-position:-10px 0;opacity:.45"></i><i style="left:6px;top:20px;width:60px;height:1px;background:repeating-linear-gradient(90deg,#aaa 0px 4px,transparent 4px 5px,#aaa 5px 11px,transparent 11px 13px,#aaa 13px 16px,transparent 16px 17px);background-position:-10px 0;opacity:.45"></i><i style="left:6px;top:25px;width:3px;height:3px;background:#3a7ad8;border-radius:2px;"></i><i style="left:10px;top:25px;width:15px;height:1px;background:repeating-linear-gradient(90deg,#888 0px 5px,transparent 5px 7px,#888 7px 12px,transparent 12px 14px);background-position:-7px 0;opacity:.45"></i><i style="left:10px;top:29px;width:45px;height:4px;box-sizing:border-box;border:1px solid #dadada;"></i><i style="left:6px;top:42px;width:17px;height:1px;background:repeating-linear-gradient(90deg,#aaa 0px 3px,transparent 3px 4px,#aaa 4px 9px,transparent 9px 11px,#aaa 11px 18px,transparent 18px 19px);background-position:-4px 0;opacity:.45"></i><i style="left:10px;top:46px;width:45px;height:4px;box-sizing:border-box;border:1px solid #dadada;"></i><i style="left:0px;top:64px;width:90px;height:7px;background:#f0f0f0;"></i><i style="left:64px;top:66px;width:10px;height:3px;background:#ffffff;box-sizing:border-box;border:1px solid #6a9ad8;"></i><i style="left:77px;top:66px;width:10px;height:3px;background:#ffffff;box-sizing:border-box;border:1px solid #c0c0c0;"></i></div></div>
<div class="lab" style="left:823px;top:369px"><span style="letter-spacing:-0.1px">mediaimg</span><span style="letter-spacing:-0.7px">6</span></div>
<div class="th" style="left:936px;top:331px;width:90px;height:33px"><div class="tf"><i style="left:0px;top:0px;width:90px;height:33px;background:#ffffff;"></i><i style="left:0px;top:0px;width:90px;height:4px;background:#f4f4f4;"></i><i style="left:18px;top:0px;width:10px;height:3px;background:#b8e8a8;"></i><i style="left:3px;top:5px;width:37px;height:1px;background:repeating-linear-gradient(90deg,#aaa 0px 4px,transparent 4px 5px,#aaa 5px 11px,transparent 11px 13px,#aaa 13px 16px,transparent 16px 17px);background-position:-16px 0;opacity:.45"></i><i style="left:2px;top:9px;width:13px;height:1px;background:repeating-linear-gradient(90deg,#8aa0c0 0px 6px,transparent 6px 8px,#8aa0c0 8px 10px,transparent 10px 11px,#8aa0c0 11px 15px,transparent 15px 16px);background-position:-8px 0;opacity:.45"></i><i style="left:2px;top:12px;width:11px;height:1px;background:repeating-linear-gradient(90deg,#8aa0c0 0px 4px,transparent 4px 5px,#8aa0c0 5px 11px,transparent 11px 13px,#8aa0c0 13px 16px,transparent 16px 17px);background-position:-10px 0;opacity:.45"></i><i style="left:2px;top:15px;width:10px;height:1px;background:repeating-linear-gradient(90deg,#8aa0c0 0px 6px,transparent 6px 8px,#8aa0c0 8px 10px,transparent 10px 11px,#8aa0c0 11px 15px,transparent 15px 16px);background-position:-0px 0;opacity:.45"></i><i style="left:2px;top:18px;width:9px;height:1px;background:repeating-linear-gradient(90deg,#8aa0c0 0px 4px,transparent 4px 5px,#8aa0c0 5px 11px,transparent 11px 13px,#8aa0c0 13px 16px,transparent 16px 17px);background-position:-3px 0;opacity:.45"></i><i style="left:2px;top:21px;width:6px;height:1px;background:repeating-linear-gradient(90deg,#8aa0c0 0px 5px,transparent 5px 7px,#8aa0c0 7px 12px,transparent 12px 14px);background-position:-9px 0;opacity:.45"></i><i style="left:2px;top:24px;width:9px;height:1px;background:repeating-linear-gradient(90deg,#8aa0c0 0px 6px,transparent 6px 8px,#8aa0c0 8px 10px,transparent 10px 11px,#8aa0c0 11px 15px,transparent 15px 16px);background-position:-6px 0;opacity:.45"></i><i style="left:26px;top:9px;width:4px;height:3px;background:#f0c040;"></i><i style="left:31px;top:10px;width:10px;height:1px;background:repeating-linear-gradient(90deg,#aaa 0px 6px,transparent 6px 8px,#aaa 8px 10px,transparent 10px 11px,#aaa 11px 15px,transparent 15px 16px);background-position:-9px 0;opacity:.45"></i><i style="left:26px;top:15px;width:4px;height:3px;background:#f0c040;"></i><i style="left:31px;top:16px;width:10px;height:1px;background:repeating-linear-gradient(90deg,#aaa 0px 3px,transparent 3px 4px,#aaa 4px 9px,transparent 9px 11px,#aaa 11px 18px,transparent 18px 19px);background-position:-0px 0;opacity:.45"></i><i style="left:26px;top:21px;width:4px;height:3px;background:#f0c040;"></i><i style="left:31px;top:22px;width:10px;height:1px;background:repeating-linear-gradient(90deg,#aaa 0px 4px,transparent 4px 5px,#aaa 5px 11px,transparent 11px 13px,#aaa 13px 16px,transparent 16px 17px);background-position:-15px 0;opacity:.45"></i><i style="left:48px;top:9px;width:4px;height:3px;background:#f0c040;"></i><i style="left:53px;top:10px;width:10px;height:1px;background:repeating-linear-gradient(90deg,#aaa 0px 5px,transparent 5px 7px,#aaa 7px 12px,transparent 12px 14px);background-position:-4px 0;opacity:.45"></i><i style="left:48px;top:15px;width:4px;height:3px;background:#f0c040;"></i><i style="left:53px;top:16px;width:10px;height:1px;background:repeating-linear-gradient(90deg,#aaa 0px 5px,transparent 5px 7px,#aaa 7px 12px,transparent 12px 14px);background-position:-13px 0;opacity:.45"></i><i style="left:48px;top:21px;width:4px;height:3px;background:#f0c040;"></i><i style="left:53px;top:22px;width:10px;height:1px;background:repeating-linear-gradient(90deg,#aaa 0px 4px,transparent 4px 5px,#aaa 5px 11px,transparent 11px 13px,#aaa 13px 16px,transparent 16px 17px);background-position:-13px 0;opacity:.45"></i><i style="left:70px;top:9px;width:4px;height:3px;background:#f0c040;"></i><i style="left:75px;top:10px;width:10px;height:1px;background:repeating-linear-gradient(90deg,#aaa 0px 5px,transparent 5px 7px,#aaa 7px 12px,transparent 12px 14px);background-position:-1px 0;opacity:.45"></i><i style="left:70px;top:15px;width:4px;height:3px;background:#f0c040;"></i><i style="left:75px;top:16px;width:10px;height:1px;background:repeating-linear-gradient(90deg,#aaa 0px 4px,transparent 4px 5px,#aaa 5px 11px,transparent 11px 13px,#aaa 13px 16px,transparent 16px 17px);background-position:-12px 0;opacity:.45"></i><i style="left:70px;top:21px;width:4px;height:3px;background:#f0c040;"></i><i style="left:75px;top:22px;width:10px;height:1px;background:repeating-linear-gradient(90deg,#aaa 0px 6px,transparent 6px 8px,#aaa 8px 10px,transparent 10px 11px,#aaa 11px 15px,transparent 15px 16px);background-position:-14px 0;opacity:.45"></i><i style="left:0px;top:28px;width:16px;height:4px;box-sizing:border-box;border:1px solid #e02828;"></i><i style="left:40px;top:25px;width:22px;height:6px;background:#e8e8e8;box-sizing:border-box;border:1px solid #e02828;"></i></div></div>
<div class="lab" style="left:931px;top:369px"><span style="letter-spacing:-0.1px">mediaimg</span><span style="letter-spacing:-0.7px">7</span></div>
<div class="th" style="left:1054px;top:274px;width:70px;height:90px"><div class="tf"><i style="left:0px;top:0px;width:70px;height:90px;background:#ffffff;"></i><i style="left:3px;top:1px;width:12px;height:1px;background:repeating-linear-gradient(90deg,#aaa 0px 5px,transparent 5px 7px,#aaa 7px 12px,transparent 12px 14px);background-position:-4px 0;opacity:.45"></i><i style="left:24px;top:0px;width:12px;height:4px;background:#c8ecb8;"></i><i style="left:0px;top:4px;width:8px;height:4px;background:#1a6ac8;"></i><i style="left:11px;top:5px;width:20px;height:1px;background:repeating-linear-gradient(90deg,#aaa 0px 5px,transparent 5px 7px,#aaa 7px 12px,transparent 12px 14px);background-position:-5px 0;opacity:.45"></i><i style="left:0px;top:9px;width:70px;height:1px;background:#e8e8e8;"></i><i style="left:3px;top:11px;width:35px;height:1px;background:repeating-linear-gradient(90deg,#999 0px 4px,transparent 4px 5px,#999 5px 11px,transparent 11px 13px,#999 13px 16px,transparent 16px 17px);background-position:-16px 0;opacity:.45"></i><i style="left:4px;top:18px;width:15px;height:1px;background:repeating-linear-gradient(90deg,#8aa0c0 0px 6px,transparent 6px 8px,#8aa0c0 8px 10px,transparent 10px 11px,#8aa0c0 11px 15px,transparent 15px 16px);background-position:-8px 0;opacity:.45"></i><i style="left:4px;top:22px;width:12px;height:1px;background:repeating-linear-gradient(90deg,#8aa0c0 0px 4px,transparent 4px 5px,#8aa0c0 5px 11px,transparent 11px 13px,#8aa0c0 13px 16px,transparent 16px 17px);background-position:-10px 0;opacity:.45"></i><i style="left:4px;top:26px;width:11px;height:1px;background:repeating-linear-gradient(90deg,#8aa0c0 0px 6px,transparent 6px 8px,#8aa0c0 8px 10px,transparent 10px 11px,#8aa0c0 11px 15px,transparent 15px 16px);background-position:-0px 0;opacity:.45"></i><i style="left:4px;top:30px;width:10px;height:1px;background:repeating-linear-gradient(90deg,#8aa0c0 0px 4px,transparent 4px 5px,#8aa0c0 5px 11px,transparent 11px 13px,#8aa0c0 13px 16px,transparent 16px 17px);background-position:-3px 0;opacity:.45"></i><i style="left:4px;top:34px;width:7px;height:1px;background:repeating-linear-gradient(90deg,#8aa0c0 0px 5px,transparent 5px 7px,#8aa0c0 7px 12px,transparent 12px 14px);background-position:-9px 0;opacity:.45"></i><i style="left:4px;top:38px;width:10px;height:1px;background:repeating-linear-gradient(90deg,#8aa0c0 0px 6px,transparent 6px 8px,#8aa0c0 8px 10px,transparent 10px 11px,#8aa0c0 11px 15px,transparent 15px 16px);background-position:-6px 0;opacity:.45"></i><i style="left:4px;top:42px;width:9px;height:1px;background:repeating-linear-gradient(90deg,#8aa0c0 0px 3px,transparent 3px 4px,#8aa0c0 4px 9px,transparent 9px 11px,#8aa0c0 11px 18px,transparent 18px 19px);background-position:-10px 0;opacity:.45"></i><i style="left:4px;top:46px;width:10px;height:1px;background:repeating-linear-gradient(90deg,#8aa0c0 0px 5px,transparent 5px 7px,#8aa0c0 7px 12px,transparent 12px 14px);background-position:-6px 0;opacity:.45"></i><i style="left:4px;top:50px;width:7px;height:1px;background:repeating-linear-gradient(90deg,#8aa0c0 0px 6px,transparent 6px 8px,#8aa0c0 8px 10px,transparent 10px 11px,#8aa0c0 11px 15px,transparent 15px 16px);background-position:-1px 0;opacity:.45"></i><i style="left:4px;top:54px;width:8px;height:1px;background:repeating-linear-gradient(90deg,#8aa0c0 0px 4px,transparent 4px 5px,#8aa0c0 5px 11px,transparent 11px 13px,#8aa0c0 13px 16px,transparent 16px 17px);background-position:-6px 0;opacity:.45"></i><i style="left:0px;top:49px;width:22px;height:4px;background:#d8d8d8;"></i><i style="left:25px;top:17px;width:13px;height:1px;background:repeating-linear-gradient(90deg,#888 0px 5px,transparent 5px 7px,#888 7px 12px,transparent 12px 14px);background-position:-10px 0;opacity:.45"></i><i style="left:25px;top:20px;width:15px;height:1px;background:repeating-linear-gradient(90deg,#888 0px 6px,transparent 6px 8px,#888 8px 10px,transparent 10px 11px,#888 11px 15px,transparent 15px 16px);background-position:-15px 0;opacity:.45"></i><i style="left:25px;top:23px;width:24px;height:1px;background:repeating-linear-gradient(90deg,#888 0px 6px,transparent 6px 8px,#888 8px 10px,transparent 10px 11px,#888 11px 15px,transparent 15px 16px);background-position:-7px 0;opacity:.45"></i><i style="left:25px;top:26px;width:24px;height:1px;background:repeating-linear-gradient(90deg,#888 0px 4px,transparent 4px 5px,#888 5px 11px,transparent 11px 13px,#888 13px 16px,transparent 16px 17px);background-position:-11px 0;opacity:.45"></i><i style="left:25px;top:29px;width:26px;height:1px;background:repeating-linear-gradient(90deg,#888 0px 5px,transparent 5px 7px,#888 7px 12px,transparent 12px 14px);background-position:-1px 0;opacity:.45"></i><i style="left:25px;top:32px;width:13px;height:1px;background:repeating-linear-gradient(90deg,#888 0px 6px,transparent 6px 8px,#888 8px 10px,transparent 10px 11px,#888 11px 15px,transparent 15px 16px);background-position:-7px 0;opacity:.45"></i><i style="left:25px;top:35px;width:22px;height:1px;background:repeating-linear-gradient(90deg,#888 0px 5px,transparent 5px 7px,#888 7px 12px,transparent 12px 14px);background-position:-11px 0;opacity:.45"></i><i style="left:25px;top:38px;width:24px;height:1px;background:repeating-linear-gradient(90deg,#888 0px 5px,transparent 5px 7px,#888 7px 12px,transparent 12px 14px);background-position:-9px 0;opacity:.45"></i><i style="left:25px;top:41px;width:18px;height:1px;background:repeating-linear-gradient(90deg,#888 0px 3px,transparent 3px 4px,#888 4px 9px,transparent 9px 11px,#888 11px 18px,transparent 18px 19px);background-position:-17px 0;opacity:.45"></i><i style="left:25px;top:44px;width:19px;height:1px;background:repeating-linear-gradient(90deg,#888 0px 4px,transparent 4px 5px,#888 5px 11px,transparent 11px 13px,#888 13px 16px,transparent 16px 17px);background-position:-11px 0;opacity:.45"></i><i style="left:25px;top:47px;width:11px;height:1px;background:repeating-linear-gradient(90deg,#888 0px 4px,transparent 4px 5px,#888 5px 11px,transparent 11px 13px,#888 13px 16px,transparent 16px 17px);background-position:-3px 0;opacity:.45"></i><i style="left:25px;top:50px;width:24px;height:1px;background:repeating-linear-gradient(90deg,#888 0px 4px,transparent 4px 5px,#888 5px 11px,transparent 11px 13px,#888 13px 16px,transparent 16px 17px);background-position:-14px 0;opacity:.45"></i><i style="left:25px;top:53px;width:13px;height:1px;background:repeating-linear-gradient(90deg,#888 0px 3px,transparent 3px 4px,#888 4px 9px,transparent 9px 11px,#888 11px 18px,transparent 18px 19px);background-position:-12px 0;opacity:.45"></i><i style="left:25px;top:56px;width:19px;height:1px;background:repeating-linear-gradient(90deg,#888 0px 6px,transparent 6px 8px,#888 8px 10px,transparent 10px 11px,#888 11px 15px,transparent 15px 16px);background-position:-1px 0;opacity:.45"></i><i style="left:23px;top:25px;width:26px;height:4px;box-sizing:border-box;border:1px solid #e02828;"></i><i style="left:0;top:55px;width:70px;height:35px;background:linear-gradient(rgba(255,255,255,0),rgba(200,200,200,0.95))"></i></div></div>
<div class="lab" style="left:1039px;top:369px"><span style="letter-spacing:-0.1px">mediaimg</span><span style="letter-spacing:-0.7px">8</span></div>
<div class="th" style="left:1164px;top:274px;width:65px;height:90px"><div class="tf"><i style="left:0px;top:0px;width:65px;height:90px;background:#ffffff;"></i><i style="left:3px;top:1px;width:12px;height:1px;background:repeating-linear-gradient(90deg,#aaa 0px 5px,transparent 5px 7px,#aaa 7px 12px,transparent 12px 14px);background-position:-4px 0;opacity:.45"></i><i style="left:22px;top:0px;width:11px;height:4px;background:#c8ecb8;"></i><i style="left:0px;top:4px;width:7px;height:4px;background:#1a6ac8;"></i><i style="left:10px;top:5px;width:18px;height:1px;background:repeating-linear-gradient(90deg,#aaa 0px 5px,transparent 5px 7px,#aaa 7px 12px,transparent 12px 14px);background-position:-5px 0;opacity:.45"></i><i style="left:0px;top:9px;width:65px;height:1px;background:#e8e8e8;"></i><i style="left:3px;top:11px;width:32px;height:1px;background:repeating-linear-gradient(90deg,#999 0px 4px,transparent 4px 5px,#999 5px 11px,transparent 11px 13px,#999 13px 16px,transparent 16px 17px);background-position:-16px 0;opacity:.45"></i><i style="left:4px;top:18px;width:13px;height:1px;background:repeating-linear-gradient(90deg,#8aa0c0 0px 6px,transparent 6px 8px,#8aa0c0 8px 10px,transparent 10px 11px,#8aa0c0 11px 15px,transparent 15px 16px);background-position:-8px 0;opacity:.45"></i><i style="left:4px;top:22px;width:11px;height:1px;background:repeating-linear-gradient(90deg,#8aa0c0 0px 4px,transparent 4px 5px,#8aa0c0 5px 11px,transparent 11px 13px,#8aa0c0 13px 16px,transparent 16px 17px);background-position:-10px 0;opacity:.45"></i><i style="left:4px;top:26px;width:10px;height:1px;background:repeating-linear-gradient(90deg,#8aa0c0 0px 6px,transparent 6px 8px,#8aa0c0 8px 10px,transparent 10px 11px,#8aa0c0 11px 15px,transparent 15px 16px);background-position:-0px 0;opacity:.45"></i><i style="left:4px;top:30px;width:9px;height:1px;background:repeating-linear-gradient(90deg,#8aa0c0 0px 4px,transparent 4px 5px,#8aa0c0 5px 11px,transparent 11px 13px,#8aa0c0 13px 16px,transparent 16px 17px);background-position:-3px 0;opacity:.45"></i><i style="left:4px;top:34px;width:6px;height:1px;background:repeating-linear-gradient(90deg,#8aa0c0 0px 5px,transparent 5px 7px,#8aa0c0 7px 12px,transparent 12px 14px);background-position:-9px 0;opacity:.45"></i><i style="left:4px;top:38px;width:9px;height:1px;background:repeating-linear-gradient(90deg,#8aa0c0 0px 6px,transparent 6px 8px,#8aa0c0 8px 10px,transparent 10px 11px,#8aa0c0 11px 15px,transparent 15px 16px);background-position:-6px 0;opacity:.45"></i><i style="left:4px;top:42px;width:8px;height:1px;background:repeating-linear-gradient(90deg,#8aa0c0 0px 3px,transparent 3px 4px,#8aa0c0 4px 9px,transparent 9px 11px,#8aa0c0 11px 18px,transparent 18px 19px);background-position:-10px 0;opacity:.45"></i><i style="left:4px;top:46px;width:9px;height:1px;background:repeating-linear-gradient(90deg,#8aa0c0 0px 5px,transparent 5px 7px,#8aa0c0 7px 12px,transparent 12px 14px);background-position:-6px 0;opacity:.45"></i><i style="left:4px;top:50px;width:6px;height:1px;background:repeating-linear-gradient(90deg,#8aa0c0 0px 6px,transparent 6px 8px,#8aa0c0 8px 10px,transparent 10px 11px,#8aa0c0 11px 15px,transparent 15px 16px);background-position:-1px 0;opacity:.45"></i><i style="left:4px;top:54px;width:7px;height:1px;background:repeating-linear-gradient(90deg,#8aa0c0 0px 4px,transparent 4px 5px,#8aa0c0 5px 11px,transparent 11px 13px,#8aa0c0 13px 16px,transparent 16px 17px);background-position:-6px 0;opacity:.45"></i><i style="left:0px;top:49px;width:20px;height:4px;background:#d8d8d8;"></i><i style="left:23px;top:17px;width:12px;height:1px;background:repeating-linear-gradient(90deg,#888 0px 5px,transparent 5px 7px,#888 7px 12px,transparent 12px 14px);background-position:-10px 0;opacity:.45"></i><i style="left:23px;top:20px;width:14px;height:1px;background:repeating-linear-gradient(90deg,#888 0px 6px,transparent 6px 8px,#888 8px 10px,transparent 10px 11px,#888 11px 15px,transparent 15px 16px);background-position:-15px 0;opacity:.45"></i><i style="left:23px;top:23px;width:23px;height:1px;background:repeating-linear-gradient(90deg,#888 0px 6px,transparent 6px 8px,#888 8px 10px,transparent 10px 11px,#888 11px 15px,transparent 15px 16px);background-position:-7px 0;opacity:.45"></i><i style="left:23px;top:26px;width:22px;height:1px;background:repeating-linear-gradient(90deg,#888 0px 4px,transparent 4px 5px,#888 5px 11px,transparent 11px 13px,#888 13px 16px,transparent 16px 17px);background-position:-11px 0;opacity:.45"></i><i style="left:23px;top:29px;width:24px;height:1px;background:repeating-linear-gradient(90deg,#888 0px 5px,transparent 5px 7px,#888 7px 12px,transparent 12px 14px);background-position:-1px 0;opacity:.45"></i><i style="left:23px;top:32px;width:12px;height:1px;background:repeating-linear-gradient(90deg,#888 0px 6px,transparent 6px 8px,#888 8px 10px,transparent 10px 11px,#888 11px 15px,transparent 15px 16px);background-position:-7px 0;opacity:.45"></i><i style="left:23px;top:35px;width:21px;height:1px;background:repeating-linear-gradient(90deg,#888 0px 5px,transparent 5px 7px,#888 7px 12px,transparent 12px 14px);background-position:-11px 0;opacity:.45"></i><i style="left:23px;top:38px;width:22px;height:1px;background:repeating-linear-gradient(90deg,#888 0px 5px,transparent 5px 7px,#888 7px 12px,transparent 12px 14px);background-position:-9px 0;opacity:.45"></i><i style="left:23px;top:41px;width:17px;height:1px;background:repeating-linear-gradient(90deg,#888 0px 3px,transparent 3px 4px,#888 4px 9px,transparent 9px 11px,#888 11px 18px,transparent 18px 19px);background-position:-17px 0;opacity:.45"></i><i style="left:23px;top:44px;width:18px;height:1px;background:repeating-linear-gradient(90deg,#888 0px 4px,transparent 4px 5px,#888 5px 11px,transparent 11px 13px,#888 13px 16px,transparent 16px 17px);background-position:-11px 0;opacity:.45"></i><i style="left:23px;top:47px;width:10px;height:1px;background:repeating-linear-gradient(90deg,#888 0px 4px,transparent 4px 5px,#888 5px 11px,transparent 11px 13px,#888 13px 16px,transparent 16px 17px);background-position:-3px 0;opacity:.45"></i><i style="left:23px;top:50px;width:23px;height:1px;background:repeating-linear-gradient(90deg,#888 0px 4px,transparent 4px 5px,#888 5px 11px,transparent 11px 13px,#888 13px 16px,transparent 16px 17px);background-position:-14px 0;opacity:.45"></i><i style="left:23px;top:53px;width:12px;height:1px;background:repeating-linear-gradient(90deg,#888 0px 3px,transparent 3px 4px,#888 4px 9px,transparent 9px 11px,#888 11px 18px,transparent 18px 19px);background-position:-12px 0;opacity:.45"></i><i style="left:23px;top:56px;width:17px;height:1px;background:repeating-linear-gradient(90deg,#888 0px 6px,transparent 6px 8px,#888 8px 10px,transparent 10px 11px,#888 11px 15px,transparent 15px 16px);background-position:-1px 0;opacity:.45"></i><i style="left:21px;top:18px;width:24px;height:4px;box-sizing:border-box;border:1px solid #e02828;"></i><i style="left:0;top:55px;width:65px;height:35px;background:linear-gradient(rgba(255,255,255,0),rgba(200,200,200,0.95))"></i></div></div>
<div class="lab" style="left:1147px;top:369px"><span style="letter-spacing:-0.1px">mediaimg</span><span style="letter-spacing:-0.7px">9</span></div>
<div class="th" style="left:1260px;top:317px;width:90px;height:47px"><div class="tf"><i style="left:0px;top:0px;width:90px;height:47px;background:#0c0c0c;"></i><i style="left:0px;top:0px;width:90px;height:2px;background:#f0f0f0;"></i><i style="left:88px;top:0px;width:2px;height:47px;background:#d8d8d8;"></i><i style="left:1px;top:4px;width:28px;height:1px;background:repeating-linear-gradient(90deg,#777 0px 4px,transparent 4px 5px,#777 5px 11px,transparent 11px 13px,#777 13px 16px,transparent 16px 17px);background-position:-12px 0;opacity:.45"></i><i style="left:1px;top:7px;width:39px;height:1px;background:repeating-linear-gradient(90deg,#777 0px 4px,transparent 4px 5px,#777 5px 11px,transparent 11px 13px,#777 13px 16px,transparent 16px 17px);background-position:-2px 0;opacity:.45"></i><i style="left:1px;top:10px;width:19px;height:1px;background:repeating-linear-gradient(90deg,#777 0px 3px,transparent 3px 4px,#777 4px 9px,transparent 9px 11px,#777 11px 18px,transparent 18px 19px);background-position:-1px 0;opacity:.45"></i><i style="left:1px;top:13px;width:28px;height:1px;background:repeating-linear-gradient(90deg,#777 0px 3px,transparent 3px 4px,#777 4px 9px,transparent 9px 11px,#777 11px 18px,transparent 18px 19px);background-position:-8px 0;opacity:.45"></i><i style="left:1px;top:16px;width:52px;height:1px;background:repeating-linear-gradient(90deg,#777 0px 4px,transparent 4px 5px,#777 5px 11px,transparent 11px 13px,#777 13px 16px,transparent 16px 17px);background-position:-8px 0;opacity:.45"></i><i style="left:1px;top:19px;width:27px;height:1px;background:repeating-linear-gradient(90deg,#777 0px 4px,transparent 4px 5px,#777 5px 11px,transparent 11px 13px,#777 13px 16px,transparent 16px 17px);background-position:-8px 0;opacity:.45"></i><i style="left:1px;top:22px;width:53px;height:1px;background:repeating-linear-gradient(90deg,#777 0px 6px,transparent 6px 8px,#777 8px 10px,transparent 10px 11px,#777 11px 15px,transparent 15px 16px);background-position:-5px 0;opacity:.45"></i><i style="left:1px;top:25px;width:32px;height:1px;background:repeating-linear-gradient(90deg,#777 0px 3px,transparent 3px 4px,#777 4px 9px,transparent 9px 11px,#777 11px 18px,transparent 18px 19px);background-position:-2px 0;opacity:.45"></i><i style="left:1px;top:28px;width:55px;height:1px;background:repeating-linear-gradient(90deg,#777 0px 3px,transparent 3px 4px,#777 4px 9px,transparent 9px 11px,#777 11px 18px,transparent 18px 19px);background-position:-12px 0;opacity:.45"></i><i style="left:1px;top:31px;width:40px;height:1px;background:repeating-linear-gradient(90deg,#777 0px 6px,transparent 6px 8px,#777 8px 10px,transparent 10px 11px,#777 11px 15px,transparent 15px 16px);background-position:-7px 0;opacity:.45"></i><i style="left:0px;top:25px;width:90px;height:5px;box-sizing:border-box;border:1px solid #c02020;"></i></div></div>
<div class="th" style="left:180px;top:419px;width:90px;height:62px"><div class="tf"><i style="left:0px;top:0px;width:90px;height:62px;background:#f3f3f6;"></i><i style="left:3px;top:2px;width:7px;height:1px;background:repeating-linear-gradient(90deg,#a8a8a8 0px 3px,transparent 3px 4px,#a8a8a8 4px 9px,transparent 9px 11px,#a8a8a8 11px 18px,transparent 18px 19px);background-position:-4px 0;opacity:.45"></i><i style="left:3px;top:6px;width:4px;height:4px;background:#c8ccd4;border-radius:2px;"></i><i style="left:9px;top:6px;width:10px;height:1px;background:repeating-linear-gradient(90deg,#888 0px 6px,transparent 6px 8px,#888 8px 10px,transparent 10px 11px,#888 11px 15px,transparent 15px 16px);background-position:-7px 0;opacity:.45"></i><i style="left:9px;top:8px;width:13px;height:1px;background:repeating-linear-gradient(90deg,#888 0px 6px,transparent 6px 8px,#888 8px 10px,transparent 10px 11px,#888 11px 15px,transparent 15px 16px);background-position:-5px 0;opacity:.45"></i><i style="left:3px;top:12px;width:21px;height:3px;background:#ffffff;box-sizing:border-box;border:1px solid #d8d8d8;"></i><i style="left:4px;top:18px;width:8px;height:1px;background:repeating-linear-gradient(90deg,#8aa0c0 0px 6px,transparent 6px 8px,#8aa0c0 8px 10px,transparent 10px 11px,#8aa0c0 11px 15px,transparent 15px 16px);background-position:-8px 0;opacity:.45"></i><i style="left:4px;top:23px;width:15px;height:1px;background:repeating-linear-gradient(90deg,#8aa0c0 0px 3px,transparent 3px 4px,#8aa0c0 4px 9px,transparent 9px 11px,#8aa0c0 11px 18px,transparent 18px 19px);background-position:-2px 0;opacity:.45"></i><i style="left:4px;top:28px;width:15px;height:1px;background:repeating-linear-gradient(90deg,#8aa0c0 0px 3px,transparent 3px 4px,#8aa0c0 4px 9px,transparent 9px 11px,#8aa0c0 11px 18px,transparent 18px 19px);background-position:-14px 0;opacity:.45"></i><i style="left:4px;top:33px;width:15px;height:1px;background:repeating-linear-gradient(90deg,#8aa0c0 0px 5px,transparent 5px 7px,#8aa0c0 7px 12px,transparent 12px 14px);background-position:-6px 0;opacity:.45"></i><i style="left:4px;top:38px;width:16px;height:1px;background:repeating-linear-gradient(90deg,#8aa0c0 0px 4px,transparent 4px 5px,#8aa0c0 5px 11px,transparent 11px 13px,#8aa0c0 13px 16px,transparent 16px 17px);background-position:-8px 0;opacity:.45"></i><i style="left:4px;top:43px;width:10px;height:1px;background:repeating-linear-gradient(90deg,#8aa0c0 0px 3px,transparent 3px 4px,#8aa0c0 4px 9px,transparent 9px 11px,#8aa0c0 11px 18px,transparent 18px 19px);background-position:-11px 0;opacity:.45"></i><i style="left:4px;top:48px;width:16px;height:1px;background:repeating-linear-gradient(90deg,#8aa0c0 0px 3px,transparent 3px 4px,#8aa0c0 4px 9px,transparent 9px 11px,#8aa0c0 11px 18px,transparent 18px 19px);background-position:-16px 0;opacity:.45"></i><i style="left:4px;top:53px;width:9px;height:1px;background:repeating-linear-gradient(90deg,#8aa0c0 0px 3px,transparent 3px 4px,#8aa0c0 4px 9px,transparent 9px 11px,#8aa0c0 11px 18px,transparent 18px 19px);background-position:-5px 0;opacity:.45"></i><i style="left:4px;top:58px;width:7px;height:1px;background:repeating-linear-gradient(90deg,#8aa0c0 0px 4px,transparent 4px 5px,#8aa0c0 5px 11px,transparent 11px 13px,#8aa0c0 13px 16px,transparent 16px 17px);background-position:-3px 0;opacity:.45"></i><i style="left:4px;top:63px;width:14px;height:1px;background:repeating-linear-gradient(90deg,#8aa0c0 0px 4px,transparent 4px 5px,#8aa0c0 5px 11px,transparent 11px 13px,#8aa0c0 13px 16px,transparent 16px 17px);background-position:-2px 0;opacity:.45"></i><i style="left:30px;top:5px;width:14px;height:1px;background:repeating-linear-gradient(90deg,#444 0px 5px,transparent 5px 7px,#444 7px 12px,transparent 12px 14px);background-position:-8px 0;opacity:.45"></i><i style="left:29px;top:10px;width:58px;height:5px;background:#fcfcfe;"></i><i style="left:31px;top:12px;width:2px;height:2px;background:#8a8a8a;"></i><i style="left:35px;top:11px;width:30px;height:1px;background:repeating-linear-gradient(90deg,#9a9a9a 0px 6px,transparent 6px 8px,#9a9a9a 8px 10px,transparent 10px 11px,#9a9a9a 11px 15px,transparent 15px 16px);background-position:-7px 0;opacity:.45"></i><i style="left:35px;top:13px;width:15px;height:1px;background:repeating-linear-gradient(90deg,#9a9a9a 0px 5px,transparent 5px 7px,#9a9a9a 7px 12px,transparent 12px 14px);background-position:-2px 0;opacity:.45"></i><i style="left:29px;top:16px;width:58px;height:5px;background:#fcfcfe;"></i><i style="left:31px;top:18px;width:2px;height:2px;background:#8a8a8a;"></i><i style="left:35px;top:17px;width:29px;height:1px;background:repeating-linear-gradient(90deg,#9a9a9a 0px 3px,transparent 3px 4px,#9a9a9a 4px 9px,transparent 9px 11px,#9a9a9a 11px 18px,transparent 18px 19px);background-position:-2px 0;opacity:.45"></i><i style="left:35px;top:19px;width:15px;height:1px;background:repeating-linear-gradient(90deg,#9a9a9a 0px 3px,transparent 3px 4px,#9a9a9a 4px 9px,transparent 9px 11px,#9a9a9a 11px 18px,transparent 18px 19px);background-position:-13px 0;opacity:.45"></i><i style="left:29px;top:22px;width:58px;height:5px;background:#fcfcfe;"></i><i style="left:31px;top:24px;width:2px;height:2px;background:#8a8a8a;"></i><i style="left:35px;top:23px;width:26px;height:1px;background:repeating-linear-gradient(90deg,#9a9a9a 0px 6px,transparent 6px 8px,#9a9a9a 8px 10px,transparent 10px 11px,#9a9a9a 11px 15px,transparent 15px 16px);background-position:-6px 0;opacity:.45"></i><i style="left:35px;top:25px;width:30px;height:1px;background:repeating-linear-gradient(90deg,#9a9a9a 0px 6px,transparent 6px 8px,#9a9a9a 8px 10px,transparent 10px 11px,#9a9a9a 11px 15px,transparent 15px 16px);background-position:-5px 0;opacity:.45"></i><i style="left:29px;top:28px;width:58px;height:5px;background:#fcfcfe;"></i><i style="left:31px;top:30px;width:2px;height:2px;background:#8a8a8a;"></i><i style="left:35px;top:29px;width:21px;height:1px;background:repeating-linear-gradient(90deg,#9a9a9a 0px 4px,transparent 4px 5px,#9a9a9a 5px 11px,transparent 11px 13px,#9a9a9a 13px 16px,transparent 16px 17px);background-position:-6px 0;opacity:.45"></i><i style="left:35px;top:31px;width:29px;height:1px;background:repeating-linear-gradient(90deg,#9a9a9a 0px 3px,transparent 3px 4px,#9a9a9a 4px 9px,transparent 9px 11px,#9a9a9a 11px 18px,transparent 18px 19px);background-position:-15px 0;opacity:.45"></i><i style="left:29px;top:34px;width:58px;height:5px;background:#fcfcfe;"></i><i style="left:31px;top:36px;width:2px;height:2px;background:#8a8a8a;"></i><i style="left:35px;top:35px;width:27px;height:1px;background:repeating-linear-gradient(90deg,#9a9a9a 0px 6px,transparent 6px 8px,#9a9a9a 8px 10px,transparent 10px 11px,#9a9a9a 11px 15px,transparent 15px 16px);background-position:-6px 0;opacity:.45"></i><i style="left:35px;top:37px;width:22px;height:1px;background:repeating-linear-gradient(90deg,#9a9a9a 0px 4px,transparent 4px 5px,#9a9a9a 5px 11px,transparent 11px 13px,#9a9a9a 13px 16px,transparent 16px 17px);background-position:-4px 0;opacity:.45"></i><i style="left:29px;top:40px;width:58px;height:5px;background:#fcfcfe;"></i><i style="left:31px;top:42px;width:2px;height:2px;background:#8a8a8a;"></i><i style="left:35px;top:41px;width:25px;height:1px;background:repeating-linear-gradient(90deg,#9a9a9a 0px 3px,transparent 3px 4px,#9a9a9a 4px 9px,transparent 9px 11px,#9a9a9a 11px 18px,transparent 18px 19px);background-position:-9px 0;opacity:.45"></i><i style="left:35px;top:43px;width:18px;height:1px;background:repeating-linear-gradient(90deg,#9a9a9a 0px 4px,transparent 4px 5px,#9a9a9a 5px 11px,transparent 11px 13px,#9a9a9a 13px 16px,transparent 16px 17px);background-position:-8px 0;opacity:.45"></i><i style="left:29px;top:46px;width:58px;height:5px;background:#fcfcfe;"></i><i style="left:31px;top:48px;width:2px;height:2px;background:#8a8a8a;"></i><i style="left:35px;top:47px;width:17px;height:1px;background:repeating-linear-gradient(90deg,#9a9a9a 0px 6px,transparent 6px 8px,#9a9a9a 8px 10px,transparent 10px 11px,#9a9a9a 11px 15px,transparent 15px 16px);background-position:-5px 0;opacity:.45"></i><i style="left:35px;top:49px;width:19px;height:1px;background:repeating-linear-gradient(90deg,#9a9a9a 0px 5px,transparent 5px 7px,#9a9a9a 7px 12px,transparent 12px 14px);background-position:-12px 0;opacity:.45"></i><i style="left:0px;top:18px;width:27px;height:5px;box-sizing:border-box;border:1px solid #e05050;"></i><i style="left:28px;top:44px;width:40px;height:8px;box-sizing:border-box;border:1px solid #e05050;"></i></div></div>
<div class="lab" style="left:175px;top:486px"><span style="letter-spacing:-0.1px">reset</span><span style="letter-spacing:-0.7px">1</span></div>
<div class="th" style="left:288px;top:418px;width:90px;height:63px"><div class="tf"><i style="left:0px;top:0px;width:90px;height:63px;background:#f3f3f6;"></i><i style="left:3px;top:2px;width:7px;height:1px;background:repeating-linear-gradient(90deg,#a8a8a8 0px 3px,transparent 3px 4px,#a8a8a8 4px 9px,transparent 9px 11px,#a8a8a8 11px 18px,transparent 18px 19px);background-position:-4px 0;opacity:.45"></i><i style="left:3px;top:6px;width:4px;height:4px;background:#c8ccd4;border-radius:2px;"></i><i style="left:9px;top:6px;width:10px;height:1px;background:repeating-linear-gradient(90deg,#888 0px 6px,transparent 6px 8px,#888 8px 10px,transparent 10px 11px,#888 11px 15px,transparent 15px 16px);background-position:-7px 0;opacity:.45"></i><i style="left:9px;top:8px;width:13px;height:1px;background:repeating-linear-gradient(90deg,#888 0px 6px,transparent 6px 8px,#888 8px 10px,transparent 10px 11px,#888 11px 15px,transparent 15px 16px);background-position:-5px 0;opacity:.45"></i><i style="left:3px;top:12px;width:21px;height:3px;background:#ffffff;box-sizing:border-box;border:1px solid #d8d8d8;"></i><i style="left:4px;top:18px;width:8px;height:1px;background:repeating-linear-gradient(90deg,#8aa0c0 0px 6px,transparent 6px 8px,#8aa0c0 8px 10px,transparent 10px 11px,#8aa0c0 11px 15px,transparent 15px 16px);background-position:-8px 0;opacity:.45"></i><i style="left:4px;top:23px;width:15px;height:1px;background:repeating-linear-gradient(90deg,#8aa0c0 0px 3px,transparent 3px 4px,#8aa0c0 4px 9px,transparent 9px 11px,#8aa0c0 11px 18px,transparent 18px 19px);background-position:-2px 0;opacity:.45"></i><i style="left:4px;top:28px;width:15px;height:1px;background:repeating-linear-gradient(90deg,#8aa0c0 0px 3px,transparent 3px 4px,#8aa0c0 4px 9px,transparent 9px 11px,#8aa0c0 11px 18px,transparent 18px 19px);background-position:-14px 0;opacity:.45"></i><i style="left:4px;top:33px;width:15px;height:1px;background:repeating-linear-gradient(90deg,#8aa0c0 0px 5px,transparent 5px 7px,#8aa0c0 7px 12px,transparent 12px 14px);background-position:-6px 0;opacity:.45"></i><i style="left:4px;top:38px;width:16px;height:1px;background:repeating-linear-gradient(90deg,#8aa0c0 0px 4px,transparent 4px 5px,#8aa0c0 5px 11px,transparent 11px 13px,#8aa0c0 13px 16px,transparent 16px 17px);background-position:-8px 0;opacity:.45"></i><i style="left:4px;top:43px;width:10px;height:1px;background:repeating-linear-gradient(90deg,#8aa0c0 0px 3px,transparent 3px 4px,#8aa0c0 4px 9px,transparent 9px 11px,#8aa0c0 11px 18px,transparent 18px 19px);background-position:-11px 0;opacity:.45"></i><i style="left:4px;top:48px;width:16px;height:1px;background:repeating-linear-gradient(90deg,#8aa0c0 0px 3px,transparent 3px 4px,#8aa0c0 4px 9px,transparent 9px 11px,#8aa0c0 11px 18px,transparent 18px 19px);background-position:-16px 0;opacity:.45"></i><i style="left:4px;top:53px;width:9px;height:1px;background:repeating-linear-gradient(90deg,#8aa0c0 0px 3px,transparent 3px 4px,#8aa0c0 4px 9px,transparent 9px 11px,#8aa0c0 11px 18px,transparent 18px 19px);background-position:-5px 0;opacity:.45"></i><i style="left:4px;top:58px;width:7px;height:1px;background:repeating-linear-gradient(90deg,#8aa0c0 0px 4px,transparent 4px 5px,#8aa0c0 5px 11px,transparent 11px 13px,#8aa0c0 13px 16px,transparent 16px 17px);background-position:-3px 0;opacity:.45"></i><i style="left:4px;top:63px;width:14px;height:1px;background:repeating-linear-gradient(90deg,#8aa0c0 0px 4px,transparent 4px 5px,#8aa0c0 5px 11px,transparent 11px 13px,#8aa0c0 13px 16px,transparent 16px 17px);background-position:-2px 0;opacity:.45"></i><i style="left:30px;top:5px;width:24px;height:1px;background:repeating-linear-gradient(90deg,#444 0px 6px,transparent 6px 8px,#444 8px 10px,transparent 10px 11px,#444 11px 15px,transparent 15px 16px);background-position:-11px 0;opacity:.45"></i><i style="left:30px;top:10px;width:33px;height:1px;background:repeating-linear-gradient(90deg,#aaa 0px 5px,transparent 5px 7px,#aaa 7px 12px,transparent 12px 14px);background-position:-4px 0;opacity:.45"></i><i style="left:29px;top:10px;width:58px;height:5px;background:#fcfcfe;"></i><i style="left:31px;top:12px;width:2px;height:2px;background:#8a8a8a;"></i><i style="left:35px;top:11px;width:30px;height:1px;background:repeating-linear-gradient(90deg,#9a9a9a 0px 6px,transparent 6px 8px,#9a9a9a 8px 10px,transparent 10px 11px,#9a9a9a 11px 15px,transparent 15px 16px);background-position:-7px 0;opacity:.45"></i><i style="left:35px;top:13px;width:15px;height:1px;background:repeating-linear-gradient(90deg,#9a9a9a 0px 5px,transparent 5px 7px,#9a9a9a 7px 12px,transparent 12px 14px);background-position:-2px 0;opacity:.45"></i><i style="left:29px;top:16px;width:58px;height:5px;background:#fcfcfe;"></i><i style="left:31px;top:18px;width:2px;height:2px;background:#8a8a8a;"></i><i style="left:35px;top:17px;width:29px;height:1px;background:repeating-linear-gradient(90deg,#9a9a9a 0px 3px,transparent 3px 4px,#9a9a9a 4px 9px,transparent 9px 11px,#9a9a9a 11px 18px,transparent 18px 19px);background-position:-2px 0;opacity:.45"></i><i style="left:35px;top:19px;width:15px;height:1px;background:repeating-linear-gradient(90deg,#9a9a9a 0px 3px,transparent 3px 4px,#9a9a9a 4px 9px,transparent 9px 11px,#9a9a9a 11px 18px,transparent 18px 19px);background-position:-13px 0;opacity:.45"></i><i style="left:29px;top:22px;width:58px;height:5px;background:#fcfcfe;"></i><i style="left:31px;top:24px;width:2px;height:2px;background:#8a8a8a;"></i><i style="left:35px;top:23px;width:26px;height:1px;background:repeating-linear-gradient(90deg,#9a9a9a 0px 6px,transparent 6px 8px,#9a9a9a 8px 10px,transparent 10px 11px,#9a9a9a 11px 15px,transparent 15px 16px);background-position:-6px 0;opacity:.45"></i><i style="left:35px;top:25px;width:30px;height:1px;background:repeating-linear-gradient(90deg,#9a9a9a 0px 6px,transparent 6px 8px,#9a9a9a 8px 10px,transparent 10px 11px,#9a9a9a 11px 15px,transparent 15px 16px);background-position:-5px 0;opacity:.45"></i><i style="left:29px;top:28px;width:58px;height:5px;background:#fcfcfe;"></i><i style="left:31px;top:30px;width:2px;height:2px;background:#8a8a8a;"></i><i style="left:35px;top:29px;width:21px;height:1px;background:repeating-linear-gradient(90deg,#9a9a9a 0px 4px,transparent 4px 5px,#9a9a9a 5px 11px,transparent 11px 13px,#9a9a9a 13px 16px,transparent 16px 17px);background-position:-6px 0;opacity:.45"></i><i style="left:35px;top:31px;width:29px;height:1px;background:repeating-linear-gradient(90deg,#9a9a9a 0px 3px,transparent 3px 4px,#9a9a9a 4px 9px,transparent 9px 11px,#9a9a9a 11px 18px,transparent 18px 19px);background-position:-15px 0;opacity:.45"></i><i style="left:29px;top:34px;width:58px;height:5px;background:#fcfcfe;"></i><i style="left:31px;top:36px;width:2px;height:2px;background:#8a8a8a;"></i><i style="left:35px;top:35px;width:27px;height:1px;background:repeating-linear-gradient(90deg,#9a9a9a 0px 6px,transparent 6px 8px,#9a9a9a 8px 10px,transparent 10px 11px,#9a9a9a 11px 15px,transparent 15px 16px);background-position:-6px 0;opacity:.45"></i><i style="left:35px;top:37px;width:22px;height:1px;background:repeating-linear-gradient(90deg,#9a9a9a 0px 4px,transparent 4px 5px,#9a9a9a 5px 11px,transparent 11px 13px,#9a9a9a 13px 16px,transparent 16px 17px);background-position:-4px 0;opacity:.45"></i><i style="left:29px;top:40px;width:58px;height:5px;background:#fcfcfe;"></i><i style="left:31px;top:42px;width:2px;height:2px;background:#8a8a8a;"></i><i style="left:35px;top:41px;width:25px;height:1px;background:repeating-linear-gradient(90deg,#9a9a9a 0px 3px,transparent 3px 4px,#9a9a9a 4px 9px,transparent 9px 11px,#9a9a9a 11px 18px,transparent 18px 19px);background-position:-9px 0;opacity:.45"></i><i style="left:35px;top:43px;width:18px;height:1px;background:repeating-linear-gradient(90deg,#9a9a9a 0px 4px,transparent 4px 5px,#9a9a9a 5px 11px,transparent 11px 13px,#9a9a9a 13px 16px,transparent 16px 17px);background-position:-8px 0;opacity:.45"></i><i style="left:29px;top:46px;width:58px;height:5px;background:#fcfcfe;"></i><i style="left:31px;top:48px;width:2px;height:2px;background:#8a8a8a;"></i><i style="left:35px;top:47px;width:17px;height:1px;background:repeating-linear-gradient(90deg,#9a9a9a 0px 6px,transparent 6px 8px,#9a9a9a 8px 10px,transparent 10px 11px,#9a9a9a 11px 15px,transparent 15px 16px);background-position:-5px 0;opacity:.45"></i><i style="left:35px;top:49px;width:19px;height:1px;background:repeating-linear-gradient(90deg,#9a9a9a 0px 5px,transparent 5px 7px,#9a9a9a 7px 12px,transparent 12px 14px);background-position:-12px 0;opacity:.45"></i></div></div>
<div class="lab" style="left:283px;top:486px"><span style="letter-spacing:-0.1px">reset</span><span style="letter-spacing:-0.7px">2</span></div>
<div class="th" style="left:396px;top:418px;width:90px;height:63px"><div class="tf"><i style="left:0px;top:0px;width:90px;height:63px;background:#f3f3f6;"></i><i style="left:3px;top:2px;width:7px;height:1px;background:repeating-linear-gradient(90deg,#a8a8a8 0px 3px,transparent 3px 4px,#a8a8a8 4px 9px,transparent 9px 11px,#a8a8a8 11px 18px,transparent 18px 19px);background-position:-4px 0;opacity:.45"></i><i style="left:3px;top:6px;width:4px;height:4px;background:#c8ccd4;border-radius:2px;"></i><i style="left:9px;top:6px;width:10px;height:1px;background:repeating-linear-gradient(90deg,#888 0px 6px,transparent 6px 8px,#888 8px 10px,transparent 10px 11px,#888 11px 15px,transparent 15px 16px);background-position:-7px 0;opacity:.45"></i><i style="left:9px;top:8px;width:13px;height:1px;background:repeating-linear-gradient(90deg,#888 0px 6px,transparent 6px 8px,#888 8px 10px,transparent 10px 11px,#888 11px 15px,transparent 15px 16px);background-position:-5px 0;opacity:.45"></i><i style="left:3px;top:12px;width:21px;height:3px;background:#ffffff;box-sizing:border-box;border:1px solid #d8d8d8;"></i><i style="left:4px;top:18px;width:8px;height:1px;background:repeating-linear-gradient(90deg,#8aa0c0 0px 6px,transparent 6px 8px,#8aa0c0 8px 10px,transparent 10px 11px,#8aa0c0 11px 15px,transparent 15px 16px);background-position:-8px 0;opacity:.45"></i><i style="left:4px;top:23px;width:15px;height:1px;background:repeating-linear-gradient(90deg,#8aa0c0 0px 3px,transparent 3px 4px,#8aa0c0 4px 9px,transparent 9px 11px,#8aa0c0 11px 18px,transparent 18px 19px);background-position:-2px 0;opacity:.45"></i><i style="left:4px;top:28px;width:15px;height:1px;background:repeating-linear-gradient(90deg,#8aa0c0 0px 3px,transparent 3px 4px,#8aa0c0 4px 9px,transparent 9px 11px,#8aa0c0 11px 18px,transparent 18px 19px);background-position:-14px 0;opacity:.45"></i><i style="left:4px;top:33px;width:15px;height:1px;background:repeating-linear-gradient(90deg,#8aa0c0 0px 5px,transparent 5px 7px,#8aa0c0 7px 12px,transparent 12px 14px);background-position:-6px 0;opacity:.45"></i><i style="left:4px;top:38px;width:16px;height:1px;background:repeating-linear-gradient(90deg,#8aa0c0 0px 4px,transparent 4px 5px,#8aa0c0 5px 11px,transparent 11px 13px,#8aa0c0 13px 16px,transparent 16px 17px);background-position:-8px 0;opacity:.45"></i><i style="left:4px;top:43px;width:10px;height:1px;background:repeating-linear-gradient(90deg,#8aa0c0 0px 3px,transparent 3px 4px,#8aa0c0 4px 9px,transparent 9px 11px,#8aa0c0 11px 18px,transparent 18px 19px);background-position:-11px 0;opacity:.45"></i><i style="left:4px;top:48px;width:16px;height:1px;background:repeating-linear-gradient(90deg,#8aa0c0 0px 3px,transparent 3px 4px,#8aa0c0 4px 9px,transparent 9px 11px,#8aa0c0 11px 18px,transparent 18px 19px);background-position:-16px 0;opacity:.45"></i><i style="left:4px;top:53px;width:9px;height:1px;background:repeating-linear-gradient(90deg,#8aa0c0 0px 3px,transparent 3px 4px,#8aa0c0 4px 9px,transparent 9px 11px,#8aa0c0 11px 18px,transparent 18px 19px);background-position:-5px 0;opacity:.45"></i><i style="left:4px;top:58px;width:7px;height:1px;background:repeating-linear-gradient(90deg,#8aa0c0 0px 4px,transparent 4px 5px,#8aa0c0 5px 11px,transparent 11px 13px,#8aa0c0 13px 16px,transparent 16px 17px);background-position:-3px 0;opacity:.45"></i><i style="left:4px;top:63px;width:14px;height:1px;background:repeating-linear-gradient(90deg,#8aa0c0 0px 4px,transparent 4px 5px,#8aa0c0 5px 11px,transparent 11px 13px,#8aa0c0 13px 16px,transparent 16px 17px);background-position:-2px 0;opacity:.45"></i><i style="left:30px;top:5px;width:24px;height:1px;background:repeating-linear-gradient(90deg,#444 0px 6px,transparent 6px 8px,#444 8px 10px,transparent 10px 11px,#444 11px 15px,transparent 15px 16px);background-position:-11px 0;opacity:.45"></i><i style="left:30px;top:10px;width:33px;height:1px;background:repeating-linear-gradient(90deg,#aaa 0px 5px,transparent 5px 7px,#aaa 7px 12px,transparent 12px 14px);background-position:-4px 0;opacity:.45"></i><i style="left:29px;top:10px;width:58px;height:5px;background:#fcfcfe;"></i><i style="left:31px;top:12px;width:2px;height:2px;background:#8a8a8a;"></i><i style="left:35px;top:11px;width:30px;height:1px;background:repeating-linear-gradient(90deg,#9a9a9a 0px 6px,transparent 6px 8px,#9a9a9a 8px 10px,transparent 10px 11px,#9a9a9a 11px 15px,transparent 15px 16px);background-position:-7px 0;opacity:.45"></i><i style="left:35px;top:13px;width:15px;height:1px;background:repeating-linear-gradient(90deg,#9a9a9a 0px 5px,transparent 5px 7px,#9a9a9a 7px 12px,transparent 12px 14px);background-position:-2px 0;opacity:.45"></i><i style="left:29px;top:16px;width:58px;height:5px;background:#fcfcfe;"></i><i style="left:31px;top:18px;width:2px;height:2px;background:#8a8a8a;"></i><i style="left:35px;top:17px;width:29px;height:1px;background:repeating-linear-gradient(90deg,#9a9a9a 0px 3px,transparent 3px 4px,#9a9a9a 4px 9px,transparent 9px 11px,#9a9a9a 11px 18px,transparent 18px 19px);background-position:-2px 0;opacity:.45"></i><i style="left:35px;top:19px;width:15px;height:1px;background:repeating-linear-gradient(90deg,#9a9a9a 0px 3px,transparent 3px 4px,#9a9a9a 4px 9px,transparent 9px 11px,#9a9a9a 11px 18px,transparent 18px 19px);background-position:-13px 0;opacity:.45"></i><i style="left:29px;top:22px;width:58px;height:5px;background:#fcfcfe;"></i><i style="left:31px;top:24px;width:2px;height:2px;background:#8a8a8a;"></i><i style="left:35px;top:23px;width:26px;height:1px;background:repeating-linear-gradient(90deg,#9a9a9a 0px 6px,transparent 6px 8px,#9a9a9a 8px 10px,transparent 10px 11px,#9a9a9a 11px 15px,transparent 15px 16px);background-position:-6px 0;opacity:.45"></i><i style="left:35px;top:25px;width:30px;height:1px;background:repeating-linear-gradient(90deg,#9a9a9a 0px 6px,transparent 6px 8px,#9a9a9a 8px 10px,transparent 10px 11px,#9a9a9a 11px 15px,transparent 15px 16px);background-position:-5px 0;opacity:.45"></i><i style="left:29px;top:28px;width:58px;height:5px;background:#fcfcfe;"></i><i style="left:31px;top:30px;width:2px;height:2px;background:#8a8a8a;"></i><i style="left:35px;top:29px;width:21px;height:1px;background:repeating-linear-gradient(90deg,#9a9a9a 0px 4px,transparent 4px 5px,#9a9a9a 5px 11px,transparent 11px 13px,#9a9a9a 13px 16px,transparent 16px 17px);background-position:-6px 0;opacity:.45"></i><i style="left:35px;top:31px;width:29px;height:1px;background:repeating-linear-gradient(90deg,#9a9a9a 0px 3px,transparent 3px 4px,#9a9a9a 4px 9px,transparent 9px 11px,#9a9a9a 11px 18px,transparent 18px 19px);background-position:-15px 0;opacity:.45"></i><i style="left:29px;top:34px;width:58px;height:5px;background:#fcfcfe;"></i><i style="left:31px;top:36px;width:2px;height:2px;background:#8a8a8a;"></i><i style="left:35px;top:35px;width:27px;height:1px;background:repeating-linear-gradient(90deg,#9a9a9a 0px 6px,transparent 6px 8px,#9a9a9a 8px 10px,transparent 10px 11px,#9a9a9a 11px 15px,transparent 15px 16px);background-position:-6px 0;opacity:.45"></i><i style="left:35px;top:37px;width:22px;height:1px;background:repeating-linear-gradient(90deg,#9a9a9a 0px 4px,transparent 4px 5px,#9a9a9a 5px 11px,transparent 11px 13px,#9a9a9a 13px 16px,transparent 16px 17px);background-position:-4px 0;opacity:.45"></i><i style="left:29px;top:40px;width:58px;height:5px;background:#fcfcfe;"></i><i style="left:31px;top:42px;width:2px;height:2px;background:#8a8a8a;"></i><i style="left:35px;top:41px;width:25px;height:1px;background:repeating-linear-gradient(90deg,#9a9a9a 0px 3px,transparent 3px 4px,#9a9a9a 4px 9px,transparent 9px 11px,#9a9a9a 11px 18px,transparent 18px 19px);background-position:-9px 0;opacity:.45"></i><i style="left:35px;top:43px;width:18px;height:1px;background:repeating-linear-gradient(90deg,#9a9a9a 0px 4px,transparent 4px 5px,#9a9a9a 5px 11px,transparent 11px 13px,#9a9a9a 13px 16px,transparent 16px 17px);background-position:-8px 0;opacity:.45"></i><i style="left:29px;top:46px;width:58px;height:5px;background:#fcfcfe;"></i><i style="left:31px;top:48px;width:2px;height:2px;background:#8a8a8a;"></i><i style="left:35px;top:47px;width:17px;height:1px;background:repeating-linear-gradient(90deg,#9a9a9a 0px 6px,transparent 6px 8px,#9a9a9a 8px 10px,transparent 10px 11px,#9a9a9a 11px 15px,transparent 15px 16px);background-position:-5px 0;opacity:.45"></i><i style="left:35px;top:49px;width:19px;height:1px;background:repeating-linear-gradient(90deg,#9a9a9a 0px 5px,transparent 5px 7px,#9a9a9a 7px 12px,transparent 12px 14px);background-position:-12px 0;opacity:.45"></i><i style="left:28px;top:18px;width:54px;height:35px;background:#0f6fd6;box-shadow:0 1px 3px rgba(0,0,0,.35)"></i><i style="left:32px;top:23px;width:18px;height:1px;background:repeating-linear-gradient(90deg,#cfe4fc 0px 6px,transparent 6px 8px,#cfe4fc 8px 10px,transparent 10px 11px,#cfe4fc 11px 15px,transparent 15px 16px);background-position:-5px 0;opacity:.45"></i><i style="left:31px;top:28px;width:49px;height:6px;box-sizing:border-box;border:1px solid #cfe4fc;"></i><i style="left:31px;top:37px;width:49px;height:6px;box-sizing:border-box;border:1px solid #cfe4fc;"></i><i style="left:72px;top:50px;width:8px;height:3px;box-sizing:border-box;border:1px solid #cfe4fc;"></i></div></div>
<div class="lab" style="left:391px;top:486px"><span style="letter-spacing:-0.1px">reset</span><span style="letter-spacing:-0.7px">3</span></div>
<div class="th" style="left:504px;top:434px;width:90px;height:47px"><div class="tf"><i style="left:0px;top:0px;width:90px;height:47px;background:#ffffff;"></i><i style="left:2px;top:2px;width:3px;height:3px;background:#3a8ad8;"></i><i style="left:6px;top:2px;width:8px;height:1px;background:repeating-linear-gradient(90deg,#999 0px 6px,transparent 6px 8px,#999 8px 10px,transparent 10px 11px,#999 11px 15px,transparent 15px 16px);background-position:-4px 0;opacity:.45"></i><i style="left:5px;top:14px;width:8px;height:8px;background:#4aa0e0;"></i><i style="left:15px;top:13px;width:52px;height:1px;background:repeating-linear-gradient(90deg,#777 0px 6px,transparent 6px 8px,#777 8px 10px,transparent 10px 11px,#777 11px 15px,transparent 15px 16px);background-position:-7px 0;opacity:.45"></i><i style="left:15px;top:15px;width:61px;height:1px;background:repeating-linear-gradient(90deg,#777 0px 6px,transparent 6px 8px,#777 8px 10px,transparent 10px 11px,#777 11px 15px,transparent 15px 16px);background-position:-5px 0;opacity:.45"></i><i style="left:15px;top:17px;width:50px;height:1px;background:repeating-linear-gradient(90deg,#777 0px 6px,transparent 6px 8px,#777 8px 10px,transparent 10px 11px,#777 11px 15px,transparent 15px 16px);background-position:-9px 0;opacity:.45"></i><i style="left:4px;top:24px;width:6px;height:1px;background:repeating-linear-gradient(90deg,#888 0px 5px,transparent 5px 7px,#888 7px 12px,transparent 12px 14px);background-position:-7px 0;opacity:.45"></i><i style="left:14px;top:22px;width:72px;height:6px;background:#ffffff;box-sizing:border-box;border:1px solid #5a9ae0;"></i><i style="left:0px;top:32px;width:90px;height:15px;background:#f0f0f0;"></i><i style="left:24px;top:37px;width:19px;height:5px;background:#ffffff;box-sizing:border-box;border:1px solid #3a80d8;"></i><i style="left:47px;top:37px;width:19px;height:5px;background:#ffffff;box-sizing:border-box;border:1px solid #c0c0c0;"></i><i style="left:70px;top:37px;width:17px;height:5px;background:#ffffff;box-sizing:border-box;border:1px solid #c0c0c0;"></i></div></div>
<div class="lab" style="left:499px;top:486px"><span style="letter-spacing:-0.1px">restore</span><span style="letter-spacing:-0.7px">1</span></div>
<div class="th" style="left:612px;top:408px;width:90px;height:73px"><div class="tf"><i style="left:0px;top:0px;width:90px;height:73px;background:#ffffff;"></i><i style="left:0px;top:0px;width:90px;height:3px;background:#ffffff;"></i><i style="left:3px;top:1px;width:16px;height:1px;background:repeating-linear-gradient(90deg,#999 0px 6px,transparent 6px 8px,#999 8px 10px,transparent 10px 11px,#999 11px 15px,transparent 15px 16px);background-position:-10px 0;opacity:.45"></i><i style="left:0px;top:4px;width:25px;height:62px;background:linear-gradient(#f4f7fc,#d8e2f0);"></i><i style="left:6px;top:13px;width:12px;height:10px;background:#3060b0;border-radius:1px;"></i><i style="left:11px;top:10px;width:7px;height:7px;background:#40b040;border-radius:4px;"></i><i style="left:7px;top:24px;width:10px;height:3px;background:#9a9aa8;"></i><i style="left:29px;top:8px;width:22px;height:1px;background:repeating-linear-gradient(90deg,#4a7ac8 0px 6px,transparent 6px 8px,#4a7ac8 8px 10px,transparent 10px 11px,#4a7ac8 11px 15px,transparent 15px 16px);background-position:-8px 0;opacity:.45"></i><i style="left:29px;top:14px;width:53px;height:1px;background:repeating-linear-gradient(90deg,#888 0px 4px,transparent 4px 5px,#888 5px 11px,transparent 11px 13px,#888 13px 16px,transparent 16px 17px);background-position:-16px 0;opacity:.45"></i><i style="left:29px;top:16px;width:48px;height:1px;background:repeating-linear-gradient(90deg,#888 0px 6px,transparent 6px 8px,#888 8px 10px,transparent 10px 11px,#888 11px 15px,transparent 15px 16px);background-position:-7px 0;opacity:.45"></i><i style="left:29px;top:18px;width:32px;height:1px;background:repeating-linear-gradient(90deg,#888 0px 6px,transparent 6px 8px,#888 8px 10px,transparent 10px 11px,#888 11px 15px,transparent 15px 16px);background-position:-11px 0;opacity:.45"></i><i style="left:29px;top:26px;width:40px;height:1px;background:repeating-linear-gradient(90deg,#888 0px 5px,transparent 5px 7px,#888 7px 12px,transparent 12px 14px);background-position:-4px 0;opacity:.45"></i><i style="left:29px;top:28px;width:41px;height:1px;background:repeating-linear-gradient(90deg,#888 0px 5px,transparent 5px 7px,#888 7px 12px,transparent 12px 14px);background-position:-0px 0;opacity:.45"></i><i style="left:29px;top:30px;width:41px;height:1px;background:repeating-linear-gradient(90deg,#888 0px 3px,transparent 3px 4px,#888 4px 9px,transparent 9px 11px,#888 11px 18px,transparent 18px 19px);background-position:-7px 0;opacity:.45"></i><i style="left:0px;top:66px;width:90px;height:7px;background:#f0f0f0;"></i><i style="left:50px;top:68px;width:10px;height:4px;background:#fff;box-sizing:border-box;border:1px solid #c0c0c0;"></i><i style="left:63px;top:68px;width:10px;height:4px;background:#fff;box-sizing:border-box;border:1px solid #4a8ad8;"></i><i style="left:76px;top:68px;width:10px;height:4px;background:#fff;box-sizing:border-box;border:1px solid #c0c0c0;"></i></div></div>
<div class="lab" style="left:607px;top:486px"><span style="letter-spacing:-0.1px">restore</span><span style="letter-spacing:-0.7px">2</span></div>
<div class="th" style="left:720px;top:408px;width:90px;height:73px"><div class="tf"><i style="left:0px;top:0px;width:90px;height:73px;background:#f0f0f0;"></i><i style="left:0px;top:0px;width:90px;height:12px;background:#ffffff;"></i><i style="left:3px;top:1px;width:16px;height:1px;background:repeating-linear-gradient(90deg,#999 0px 6px,transparent 6px 8px,#999 8px 10px,transparent 10px 11px,#999 11px 15px,transparent 15px 16px);background-position:-10px 0;opacity:.45"></i><i style="left:4px;top:5px;width:60px;height:1px;background:repeating-linear-gradient(90deg,#333 0px 4px,transparent 4px 5px,#333 5px 11px,transparent 11px 13px,#333 13px 16px,transparent 16px 17px);background-position:-16px 0;opacity:.45"></i><i style="left:78px;top:3px;width:8px;height:8px;background:#4a6ab8;border-radius:1px;"></i><i style="left:4px;top:18px;width:20px;height:1px;background:repeating-linear-gradient(90deg,#9a9a9a 0px 5px,transparent 5px 7px,#9a9a9a 7px 12px,transparent 12px 14px);background-position:-4px 0;opacity:.45"></i><i style="left:4px;top:22px;width:82px;height:32px;background:#ffffff;box-sizing:border-box;border:1px solid #c8c8c8;"></i><i style="left:5px;top:25px;width:80px;height:1px;background:#e8e8e8;"></i><i style="left:5px;top:28px;width:80px;height:2px;background:#1a78d8;"></i><i style="left:27px;top:23px;width:1px;height:31px;background:#ececec;"></i><i style="left:72px;top:23px;width:1px;height:31px;background:#ececec;"></i><i style="left:50px;top:58px;width:35px;height:4px;background:#fff;box-sizing:border-box;border:1px solid #c0c0c0;"></i><i style="left:0px;top:66px;width:90px;height:7px;background:#f0f0f0;"></i><i style="left:46px;top:67px;width:10px;height:4px;background:#fff;box-sizing:border-box;border:1px solid #c0c0c0;"></i><i style="left:60px;top:67px;width:10px;height:4px;background:#fff;box-sizing:border-box;border:1px solid #4a8ad8;"></i><i style="left:74px;top:67px;width:10px;height:4px;background:#fff;box-sizing:border-box;border:1px solid #c0c0c0;"></i></div></div>
<div class="lab" style="left:715px;top:486px"><span style="letter-spacing:-0.1px">restore</span><span style="letter-spacing:-0.7px">3</span></div>
<div class="th" style="left:828px;top:408px;width:90px;height:73px"><div class="tf"><i style="left:0px;top:0px;width:90px;height:73px;background:#ffffff;"></i><i style="left:0px;top:0px;width:90px;height:3px;background:#ffffff;"></i><i style="left:3px;top:1px;width:16px;height:1px;background:repeating-linear-gradient(90deg,#999 0px 6px,transparent 6px 8px,#999 8px 10px,transparent 10px 11px,#999 11px 15px,transparent 15px 16px);background-position:-10px 0;opacity:.45"></i><i style="left:0px;top:4px;width:25px;height:62px;background:linear-gradient(#f4f7fc,#d8e2f0);"></i><i style="left:6px;top:13px;width:12px;height:10px;background:#3060b0;border-radius:1px;"></i><i style="left:11px;top:10px;width:7px;height:7px;background:#40b040;border-radius:4px;"></i><i style="left:7px;top:24px;width:10px;height:3px;background:#9a9aa8;"></i><i style="left:29px;top:8px;width:22px;height:1px;background:repeating-linear-gradient(90deg,#4a7ac8 0px 6px,transparent 6px 8px,#4a7ac8 8px 10px,transparent 10px 11px,#4a7ac8 11px 15px,transparent 15px 16px);background-position:-8px 0;opacity:.45"></i><i style="left:29px;top:14px;width:53px;height:1px;background:repeating-linear-gradient(90deg,#888 0px 4px,transparent 4px 5px,#888 5px 11px,transparent 11px 13px,#888 13px 16px,transparent 16px 17px);background-position:-16px 0;opacity:.45"></i><i style="left:29px;top:16px;width:48px;height:1px;background:repeating-linear-gradient(90deg,#888 0px 6px,transparent 6px 8px,#888 8px 10px,transparent 10px 11px,#888 11px 15px,transparent 15px 16px);background-position:-7px 0;opacity:.45"></i><i style="left:29px;top:18px;width:32px;height:1px;background:repeating-linear-gradient(90deg,#888 0px 6px,transparent 6px 8px,#888 8px 10px,transparent 10px 11px,#888 11px 15px,transparent 15px 16px);background-position:-11px 0;opacity:.45"></i><i style="left:29px;top:27px;width:18px;height:1px;background:repeating-linear-gradient(90deg,#999 0px 5px,transparent 5px 7px,#999 7px 12px,transparent 12px 14px);background-position:-4px 0;opacity:.45"></i><i style="left:29px;top:30px;width:19px;height:1px;background:repeating-linear-gradient(90deg,#999 0px 5px,transparent 5px 7px,#999 7px 12px,transparent 12px 14px);background-position:-0px 0;opacity:.45"></i><i style="left:41px;top:36px;width:40px;height:11px;background:#ffffff;box-sizing:border-box;border:1px solid #b8b8b8;"></i><i style="left:43px;top:37px;width:16px;height:1px;background:repeating-linear-gradient(90deg,#666 0px 3px,transparent 3px 4px,#666 4px 9px,transparent 9px 11px,#666 11px 18px,transparent 18px 19px);background-position:-2px 0;opacity:.45"></i><i style="left:29px;top:54px;width:49px;height:1px;background:repeating-linear-gradient(90deg,#888 0px 3px,transparent 3px 4px,#888 4px 9px,transparent 9px 11px,#888 11px 18px,transparent 18px 19px);background-position:-11px 0;opacity:.45"></i><i style="left:29px;top:56px;width:45px;height:1px;background:repeating-linear-gradient(90deg,#888 0px 3px,transparent 3px 4px,#888 4px 9px,transparent 9px 11px,#888 11px 18px,transparent 18px 19px);background-position:-3px 0;opacity:.45"></i><i style="left:29px;top:58px;width:56px;height:1px;background:repeating-linear-gradient(90deg,#888 0px 6px,transparent 6px 8px,#888 8px 10px,transparent 10px 11px,#888 11px 15px,transparent 15px 16px);background-position:-12px 0;opacity:.45"></i><i style="left:29px;top:60px;width:54px;height:1px;background:repeating-linear-gradient(90deg,#888 0px 5px,transparent 5px 7px,#888 7px 12px,transparent 12px 14px);background-position:-4px 0;opacity:.45"></i><i style="left:0px;top:66px;width:90px;height:7px;background:#f0f0f0;"></i><i style="left:50px;top:68px;width:10px;height:4px;background:#fff;box-sizing:border-box;border:1px solid #c0c0c0;"></i><i style="left:63px;top:68px;width:10px;height:4px;background:#fff;box-sizing:border-box;border:1px solid #4a8ad8;"></i><i style="left:76px;top:68px;width:10px;height:4px;background:#fff;box-sizing:border-box;border:1px solid #c0c0c0;"></i></div></div>
<div class="lab" style="left:823px;top:486px"><span style="letter-spacing:-0.1px">restore</span><span style="letter-spacing:-0.7px">4</span></div>
<div class="th" style="left:936px;top:397px;width:90px;height:84px"><div class="tf"><i style="left:0px;top:0px;width:90px;height:84px;background:#fbfbfb;"></i><i style="left:3px;top:4px;width:84px;height:4px;background:#ffffff;"></i><i style="left:6px;top:5px;width:10px;height:1px;background:repeating-linear-gradient(90deg,#9ab8d8 0px 3px,transparent 3px 4px,#9ab8d8 4px 9px,transparent 9px 11px,#9ab8d8 11px 18px,transparent 18px 19px);background-position:-5px 0;opacity:.45"></i><i style="left:8px;top:11px;width:6px;height:5px;background:#1a6fd0;border-radius:3px;"></i><i style="left:17px;top:13px;width:34px;height:1px;background:repeating-linear-gradient(90deg,#a8a8a8 0px 4px,transparent 4px 5px,#a8a8a8 5px 11px,transparent 11px 13px,#a8a8a8 13px 16px,transparent 16px 17px);background-position:-8px 0;opacity:.45"></i><i style="left:82px;top:11px;width:5px;height:5px;background:#e04a8a;border-radius:3px;"></i><i style="left:0px;top:18px;width:40px;height:66px;background:#f3f3f3;"></i><i style="left:3px;top:24px;width:34px;height:8px;background:#fafafa;"></i><i style="left:5px;top:21px;width:27px;height:1px;background:repeating-linear-gradient(90deg,#888 0px 4px,transparent 4px 5px,#888 5px 11px,transparent 11px 13px,#888 13px 16px,transparent 16px 17px);background-position:-2px 0;opacity:.45"></i><i style="left:7px;top:26px;width:12px;height:1px;background:repeating-linear-gradient(90deg,#aaa 0px 6px,transparent 6px 8px,#aaa 8px 10px,transparent 10px 11px,#aaa 11px 15px,transparent 15px 16px);background-position:-11px 0;opacity:.45"></i><i style="left:7px;top:36px;width:14px;height:1px;background:repeating-linear-gradient(90deg,#b0b0b0 0px 4px,transparent 4px 5px,#b0b0b0 5px 11px,transparent 11px 13px,#b0b0b0 13px 16px,transparent 16px 17px);background-position:-12px 0;opacity:.45"></i><i style="left:7px;top:41px;width:17px;height:1px;background:repeating-linear-gradient(90deg,#b0b0b0 0px 4px,transparent 4px 5px,#b0b0b0 5px 11px,transparent 11px 13px,#b0b0b0 13px 16px,transparent 16px 17px);background-position:-2px 0;opacity:.45"></i><i style="left:7px;top:46px;width:10px;height:1px;background:repeating-linear-gradient(90deg,#b0b0b0 0px 3px,transparent 3px 4px,#b0b0b0 4px 9px,transparent 9px 11px,#b0b0b0 11px 18px,transparent 18px 19px);background-position:-1px 0;opacity:.45"></i><i style="left:7px;top:51px;width:13px;height:1px;background:repeating-linear-gradient(90deg,#b0b0b0 0px 3px,transparent 3px 4px,#b0b0b0 4px 9px,transparent 9px 11px,#b0b0b0 11px 18px,transparent 18px 19px);background-position:-8px 0;opacity:.45"></i><i style="left:7px;top:56px;width:22px;height:1px;background:repeating-linear-gradient(90deg,#b0b0b0 0px 4px,transparent 4px 5px,#b0b0b0 5px 11px,transparent 11px 13px,#b0b0b0 13px 16px,transparent 16px 17px);background-position:-8px 0;opacity:.45"></i><i style="left:7px;top:61px;width:13px;height:1px;background:repeating-linear-gradient(90deg,#b0b0b0 0px 4px,transparent 4px 5px,#b0b0b0 5px 11px,transparent 11px 13px,#b0b0b0 13px 16px,transparent 16px 17px);background-position:-8px 0;opacity:.45"></i><i style="left:7px;top:66px;width:22px;height:1px;background:repeating-linear-gradient(90deg,#b0b0b0 0px 6px,transparent 6px 8px,#b0b0b0 8px 10px,transparent 10px 11px,#b0b0b0 11px 15px,transparent 15px 16px);background-position:-5px 0;opacity:.45"></i><i style="left:7px;top:71px;width:15px;height:1px;background:repeating-linear-gradient(90deg,#b0b0b0 0px 3px,transparent 3px 4px,#b0b0b0 4px 9px,transparent 9px 11px,#b0b0b0 11px 18px,transparent 18px 19px);background-position:-2px 0;opacity:.45"></i><i style="left:7px;top:76px;width:23px;height:1px;background:repeating-linear-gradient(90deg,#b0b0b0 0px 3px,transparent 3px 4px,#b0b0b0 4px 9px,transparent 9px 11px,#b0b0b0 11px 18px,transparent 18px 19px);background-position:-12px 0;opacity:.45"></i><i style="left:7px;top:63px;width:4px;height:4px;background:#d83030;border-radius:2px;"></i><i style="left:59px;top:23px;width:8px;height:6px;background:#666a80;border-radius:1px;"></i><i style="left:62px;top:25px;width:3px;height:3px;background:#5a8ae0;border-radius:2px;"></i><i style="left:54px;top:33px;width:11px;height:1px;background:repeating-linear-gradient(90deg,#999 0px 3px,transparent 3px 4px,#999 4px 9px,transparent 9px 11px,#999 11px 18px,transparent 18px 19px);background-position:-16px 0;opacity:.45"></i><i style="left:54px;top:36px;width:7px;height:1px;background:repeating-linear-gradient(90deg,#999 0px 5px,transparent 5px 7px,#999 7px 12px,transparent 12px 14px);background-position:-12px 0;opacity:.45"></i><i style="left:42px;top:40px;width:44px;height:1px;background:#eeeeee;"></i><i style="left:48px;top:44px;width:23px;height:1px;background:repeating-linear-gradient(90deg,#888 0px 4px,transparent 4px 5px,#888 5px 11px,transparent 11px 13px,#888 13px 16px,transparent 16px 17px);background-position:-15px 0;opacity:.45"></i><i style="left:48px;top:48px;width:22px;height:1px;background:repeating-linear-gradient(90deg,#888 0px 4px,transparent 4px 5px,#888 5px 11px,transparent 11px 13px,#888 13px 16px,transparent 16px 17px);background-position:-0px 0;opacity:.45"></i><i style="left:48px;top:52px;width:10px;height:1px;background:repeating-linear-gradient(90deg,#888 0px 5px,transparent 5px 7px,#888 7px 12px,transparent 12px 14px);background-position:-12px 0;opacity:.45"></i><i style="left:48px;top:56px;width:21px;height:1px;background:repeating-linear-gradient(90deg,#888 0px 3px,transparent 3px 4px,#888 4px 9px,transparent 9px 11px,#888 11px 18px,transparent 18px 19px);background-position:-0px 0;opacity:.45"></i><i style="left:48px;top:60px;width:13px;height:1px;background:repeating-linear-gradient(90deg,#888 0px 6px,transparent 6px 8px,#888 8px 10px,transparent 10px 11px,#888 11px 15px,transparent 15px 16px);background-position:-13px 0;opacity:.45"></i><i style="left:48px;top:64px;width:25px;height:1px;background:repeating-linear-gradient(90deg,#888 0px 4px,transparent 4px 5px,#888 5px 11px,transparent 11px 13px,#888 13px 16px,transparent 16px 17px);background-position:-6px 0;opacity:.45"></i><i style="left:3px;top:22px;width:34px;height:10px;box-sizing:border-box;border:1px solid #e05050;"></i><i style="left:43px;top:48px;width:25px;height:5px;box-sizing:border-box;border:1px solid #e05050;"></i></div></div>
<div class="lab" style="left:931px;top:486px"><span style="letter-spacing:-0.1px">scfimg</span><span style="letter-spacing:-0.7px">1</span></div>
<div class="th" style="left:1044px;top:433px;width:90px;height:48px"><div class="tf"><i style="left:0px;top:0px;width:90px;height:48px;background:#0c0c0c;"></i><i style="left:0px;top:0px;width:90px;height:2px;background:#f0f0f0;"></i><i style="left:88px;top:0px;width:2px;height:48px;background:#d8d8d8;"></i><i style="left:1px;top:4px;width:28px;height:1px;background:repeating-linear-gradient(90deg,#777 0px 4px,transparent 4px 5px,#777 5px 11px,transparent 11px 13px,#777 13px 16px,transparent 16px 17px);background-position:-12px 0;opacity:.45"></i><i style="left:1px;top:7px;width:39px;height:1px;background:repeating-linear-gradient(90deg,#777 0px 4px,transparent 4px 5px,#777 5px 11px,transparent 11px 13px,#777 13px 16px,transparent 16px 17px);background-position:-2px 0;opacity:.45"></i></div></div>
<div class="lab" style="left:1039px;top:486px"><span style="letter-spacing:-0.1px">scfimg</span><span style="letter-spacing:-0.7px">2</span></div>
<div class="th" style="left:1152px;top:434px;width:90px;height:47px"><div class="tf"><i style="left:0px;top:0px;width:90px;height:47px;background:#0c0c0c;"></i><i style="left:0px;top:0px;width:90px;height:2px;background:#f0f0f0;"></i><i style="left:88px;top:0px;width:2px;height:47px;background:#d8d8d8;"></i><i style="left:1px;top:4px;width:28px;height:1px;background:repeating-linear-gradient(90deg,#777 0px 4px,transparent 4px 5px,#777 5px 11px,transparent 11px 13px,#777 13px 16px,transparent 16px 17px);background-position:-12px 0;opacity:.45"></i><i style="left:1px;top:7px;width:39px;height:1px;background:repeating-linear-gradient(90deg,#777 0px 4px,transparent 4px 5px,#777 5px 11px,transparent 11px 13px,#777 13px 16px,transparent 16px 17px);background-position:-2px 0;opacity:.45"></i><i style="left:1px;top:10px;width:19px;height:1px;background:repeating-linear-gradient(90deg,#777 0px 3px,transparent 3px 4px,#777 4px 9px,transparent 9px 11px,#777 11px 18px,transparent 18px 19px);background-position:-1px 0;opacity:.45"></i></div></div>
<div class="lab" style="left:1147px;top:486px"><span style="letter-spacing:-0.1px">Screenshot</span><br><span style="letter-spacing:-0.7px">2025</span><span style="letter-spacing:0.6px">-</span><span style="letter-spacing:-0.7px">05</span><span style="letter-spacing:0.6px">-</span><span style="letter-spacing:-0.7px">20</span><br><span style="letter-spacing:-0.7px">210807</span></div>
<div class="th" style="left:1260px;top:441px;width:90px;height:40px"><div class="tf"><i style="left:0px;top:0px;width:90px;height:40px;background:#ffffff;"></i><i style="left:0px;top:0px;width:90px;height:5px;background:#f4f4f4;"></i><i style="left:3px;top:1px;width:62px;height:1px;background:repeating-linear-gradient(90deg,#c0c0c0 0px 3px,transparent 3px 4px,#c0c0c0 4px 9px,transparent 9px 11px,#c0c0c0 11px 18px,transparent 18px 19px);background-position:-11px 0;opacity:.45"></i><i style="left:0px;top:5px;width:19px;height:35px;background:#fafafa;"></i><i style="left:1px;top:10px;width:17px;height:3px;background:#cfe0f6;"></i><i style="left:2px;top:8px;width:7px;height:1px;background:repeating-linear-gradient(90deg,#8aa8d0 0px 5px,transparent 5px 7px,#8aa8d0 7px 12px,transparent 12px 14px);background-position:-5px 0;opacity:.45"></i><i style="left:2px;top:11px;width:8px;height:1px;background:repeating-linear-gradient(90deg,#8aa8d0 0px 5px,transparent 5px 7px,#8aa8d0 7px 12px,transparent 12px 14px);background-position:-10px 0;opacity:.45"></i><i style="left:2px;top:14px;width:10px;height:1px;background:repeating-linear-gradient(90deg,#8aa8d0 0px 5px,transparent 5px 7px,#8aa8d0 7px 12px,transparent 12px 14px);background-position:-4px 0;opacity:.45"></i><i style="left:2px;top:17px;width:10px;height:1px;background:repeating-linear-gradient(90deg,#8aa8d0 0px 3px,transparent 3px 4px,#8aa8d0 4px 9px,transparent 9px 11px,#8aa8d0 11px 18px,transparent 18px 19px);background-position:-6px 0;opacity:.45"></i><i style="left:2px;top:20px;width:8px;height:1px;background:repeating-linear-gradient(90deg,#8aa8d0 0px 4px,transparent 4px 5px,#8aa8d0 5px 11px,transparent 11px 13px,#8aa8d0 13px 16px,transparent 16px 17px);background-position:-10px 0;opacity:.45"></i><i style="left:2px;top:23px;width:10px;height:1px;background:repeating-linear-gradient(90deg,#8aa8d0 0px 6px,transparent 6px 8px,#8aa8d0 8px 10px,transparent 10px 11px,#8aa8d0 11px 15px,transparent 15px 16px);background-position:-7px 0;opacity:.45"></i><i style="left:2px;top:26px;width:7px;height:1px;background:repeating-linear-gradient(90deg,#8aa8d0 0px 6px,transparent 6px 8px,#8aa8d0 8px 10px,transparent 10px 11px,#8aa8d0 11px 15px,transparent 15px 16px);background-position:-11px 0;opacity:.45"></i><i style="left:2px;top:29px;width:11px;height:1px;background:repeating-linear-gradient(90deg,#8aa8d0 0px 6px,transparent 6px 8px,#8aa8d0 8px 10px,transparent 10px 11px,#8aa8d0 11px 15px,transparent 15px 16px);background-position:-15px 0;opacity:.45"></i><i style="left:2px;top:32px;width:7px;height:1px;background:repeating-linear-gradient(90deg,#8aa8d0 0px 3px,transparent 3px 4px,#8aa8d0 4px 9px,transparent 9px 11px,#8aa8d0 11px 18px,transparent 18px 19px);background-position:-8px 0;opacity:.45"></i><i style="left:2px;top:35px;width:6px;height:1px;background:repeating-linear-gradient(90deg,#8aa8d0 0px 5px,transparent 5px 7px,#8aa8d0 7px 12px,transparent 12px 14px);background-position:-3px 0;opacity:.45"></i><i style="left:25px;top:8px;width:22px;height:1px;background:repeating-linear-gradient(90deg,#999 0px 3px,transparent 3px 4px,#999 4px 9px,transparent 9px 11px,#999 11px 18px,transparent 18px 19px);background-position:-6px 0;opacity:.45"></i><i style="left:50px;top:8px;width:18px;height:1px;background:repeating-linear-gradient(90deg,#bbb 0px 6px,transparent 6px 8px,#bbb 8px 10px,transparent 10px 11px,#bbb 11px 15px,transparent 15px 16px);background-position:-9px 0;opacity:.45"></i><i style="left:74px;top:8px;width:9px;height:1px;background:repeating-linear-gradient(90deg,#bbb 0px 6px,transparent 6px 8px,#bbb 8px 10px,transparent 10px 11px,#bbb 11px 15px,transparent 15px 16px);background-position:-1px 0;opacity:.45"></i><i style="left:25px;top:11px;width:22px;height:1px;background:repeating-linear-gradient(90deg,#999 0px 5px,transparent 5px 7px,#999 7px 12px,transparent 12px 14px);background-position:-12px 0;opacity:.45"></i><i style="left:50px;top:11px;width:18px;height:1px;background:repeating-linear-gradient(90deg,#bbb 0px 4px,transparent 4px 5px,#bbb 5px 11px,transparent 11px 13px,#bbb 13px 16px,transparent 16px 17px);background-position:-13px 0;opacity:.45"></i><i style="left:74px;top:11px;width:9px;height:1px;background:repeating-linear-gradient(90deg,#bbb 0px 5px,transparent 5px 7px,#bbb 7px 12px,transparent 12px 14px);background-position:-12px 0;opacity:.45"></i><i style="left:25px;top:14px;width:22px;height:1px;background:repeating-linear-gradient(90deg,#999 0px 4px,transparent 4px 5px,#999 5px 11px,transparent 11px 13px,#999 13px 16px,transparent 16px 17px);background-position:-15px 0;opacity:.45"></i><i style="left:50px;top:14px;width:18px;height:1px;background:repeating-linear-gradient(90deg,#bbb 0px 5px,transparent 5px 7px,#bbb 7px 12px,transparent 12px 14px);background-position:-4px 0;opacity:.45"></i><i style="left:74px;top:14px;width:9px;height:1px;background:repeating-linear-gradient(90deg,#bbb 0px 4px,transparent 4px 5px,#bbb 5px 11px,transparent 11px 13px,#bbb 13px 16px,transparent 16px 17px);background-position:-7px 0;opacity:.45"></i><i style="left:25px;top:17px;width:22px;height:1px;background:repeating-linear-gradient(90deg,#999 0px 5px,transparent 5px 7px,#999 7px 12px,transparent 12px 14px);background-position:-11px 0;opacity:.45"></i><i style="left:50px;top:17px;width:18px;height:1px;background:repeating-linear-gradient(90deg,#bbb 0px 4px,transparent 4px 5px,#bbb 5px 11px,transparent 11px 13px,#bbb 13px 16px,transparent 16px 17px);background-position:-9px 0;opacity:.45"></i><i style="left:74px;top:17px;width:9px;height:1px;background:repeating-linear-gradient(90deg,#bbb 0px 5px,transparent 5px 7px,#bbb 7px 12px,transparent 12px 14px);background-position:-3px 0;opacity:.45"></i><i style="left:25px;top:20px;width:22px;height:1px;background:repeating-linear-gradient(90deg,#999 0px 4px,transparent 4px 5px,#999 5px 11px,transparent 11px 13px,#999 13px 16px,transparent 16px 17px);background-position:-7px 0;opacity:.45"></i><i style="left:50px;top:20px;width:18px;height:1px;background:repeating-linear-gradient(90deg,#bbb 0px 5px,transparent 5px 7px,#bbb 7px 12px,transparent 12px 14px);background-position:-4px 0;opacity:.45"></i><i style="left:74px;top:20px;width:9px;height:1px;background:repeating-linear-gradient(90deg,#bbb 0px 4px,transparent 4px 5px,#bbb 5px 11px,transparent 11px 13px,#bbb 13px 16px,transparent 16px 17px);background-position:-10px 0;opacity:.45"></i><i style="left:25px;top:23px;width:22px;height:1px;background:repeating-linear-gradient(90deg,#999 0px 4px,transparent 4px 5px,#999 5px 11px,transparent 11px 13px,#999 13px 16px,transparent 16px 17px);background-position:-8px 0;opacity:.45"></i><i style="left:50px;top:23px;width:18px;height:1px;background:repeating-linear-gradient(90deg,#bbb 0px 4px,transparent 4px 5px,#bbb 5px 11px,transparent 11px 13px,#bbb 13px 16px,transparent 16px 17px);background-position:-16px 0;opacity:.45"></i><i style="left:74px;top:23px;width:9px;height:1px;background:repeating-linear-gradient(90deg,#bbb 0px 3px,transparent 3px 4px,#bbb 4px 9px,transparent 9px 11px,#bbb 11px 18px,transparent 18px 19px);background-position:-8px 0;opacity:.45"></i><i style="left:25px;top:26px;width:22px;height:1px;background:repeating-linear-gradient(90deg,#999 0px 6px,transparent 6px 8px,#999 8px 10px,transparent 10px 11px,#999 11px 15px,transparent 15px 16px);background-position:-3px 0;opacity:.45"></i><i style="left:50px;top:26px;width:18px;height:1px;background:repeating-linear-gradient(90deg,#bbb 0px 4px,transparent 4px 5px,#bbb 5px 11px,transparent 11px 13px,#bbb 13px 16px,transparent 16px 17px);background-position:-10px 0;opacity:.45"></i><i style="left:74px;top:26px;width:9px;height:1px;background:repeating-linear-gradient(90deg,#bbb 0px 3px,transparent 3px 4px,#bbb 4px 9px,transparent 9px 11px,#bbb 11px 18px,transparent 18px 19px);background-position:-8px 0;opacity:.45"></i><i style="left:25px;top:29px;width:22px;height:1px;background:repeating-linear-gradient(90deg,#999 0px 4px,transparent 4px 5px,#999 5px 11px,transparent 11px 13px,#999 13px 16px,transparent 16px 17px);background-position:-13px 0;opacity:.45"></i><i style="left:50px;top:29px;width:18px;height:1px;background:repeating-linear-gradient(90deg,#bbb 0px 3px,transparent 3px 4px,#bbb 4px 9px,transparent 9px 11px,#bbb 11px 18px,transparent 18px 19px);background-position:-0px 0;opacity:.45"></i><i style="left:74px;top:29px;width:9px;height:1px;background:repeating-linear-gradient(90deg,#bbb 0px 5px,transparent 5px 7px,#bbb 7px 12px,transparent 12px 14px);background-position:-11px 0;opacity:.45"></i><i style="left:25px;top:32px;width:22px;height:1px;background:repeating-linear-gradient(90deg,#999 0px 4px,transparent 4px 5px,#999 5px 11px,transparent 11px 13px,#999 13px 16px,transparent 16px 17px);background-position:-16px 0;opacity:.45"></i><i style="left:50px;top:32px;width:18px;height:1px;background:repeating-linear-gradient(90deg,#bbb 0px 5px,transparent 5px 7px,#bbb 7px 12px,transparent 12px 14px);background-position:-8px 0;opacity:.45"></i><i style="left:74px;top:32px;width:9px;height:1px;background:repeating-linear-gradient(90deg,#bbb 0px 4px,transparent 4px 5px,#bbb 5px 11px,transparent 11px 13px,#bbb 13px 16px,transparent 16px 17px);background-position:-2px 0;opacity:.45"></i><i style="left:25px;top:35px;width:22px;height:1px;background:repeating-linear-gradient(90deg,#999 0px 6px,transparent 6px 8px,#999 8px 10px,transparent 10px 11px,#999 11px 15px,transparent 15px 16px);background-position:-7px 0;opacity:.45"></i><i style="left:50px;top:35px;width:18px;height:1px;background:repeating-linear-gradient(90deg,#bbb 0px 6px,transparent 6px 8px,#bbb 8px 10px,transparent 10px 11px,#bbb 11px 15px,transparent 15px 16px);background-position:-14px 0;opacity:.45"></i><i style="left:74px;top:35px;width:9px;height:1px;background:repeating-linear-gradient(90deg,#bbb 0px 4px,transparent 4px 5px,#bbb 5px 11px,transparent 11px 13px,#bbb 13px 16px,transparent 16px 17px);background-position:-16px 0;opacity:.45"></i><i style="left:25px;top:38px;width:22px;height:1px;background:repeating-linear-gradient(90deg,#999 0px 6px,transparent 6px 8px,#999 8px 10px,transparent 10px 11px,#999 11px 15px,transparent 15px 16px);background-position:-0px 0;opacity:.45"></i><i style="left:50px;top:38px;width:18px;height:1px;background:repeating-linear-gradient(90deg,#bbb 0px 3px,transparent 3px 4px,#bbb 4px 9px,transparent 9px 11px,#bbb 11px 18px,transparent 18px 19px);background-position:-10px 0;opacity:.45"></i><i style="left:74px;top:38px;width:9px;height:1px;background:repeating-linear-gradient(90deg,#bbb 0px 4px,transparent 4px 5px,#bbb 5px 11px,transparent 11px 13px,#bbb 13px 16px,transparent 16px 17px);background-position:-15px 0;opacity:.45"></i><i style="left:23px;top:11px;width:22px;height:2px;background:#cde0f8;"></i><i style="left:0;top:24px;width:90px;height:16px;background:linear-gradient(rgba(255,255,255,0),rgba(210,210,210,0.9))"></i></div></div>
<div class="th" style="left:180px;top:576px;width:90px;height:52px"><div class="tf"><i style="left:0px;top:0px;width:90px;height:52px;background:#ffffff;"></i><i style="left:0px;top:0px;width:90px;height:5px;background:#f4f4f4;"></i><i style="left:3px;top:1px;width:62px;height:1px;background:repeating-linear-gradient(90deg,#c0c0c0 0px 3px,transparent 3px 4px,#c0c0c0 4px 9px,transparent 9px 11px,#c0c0c0 11px 18px,transparent 18px 19px);background-position:-11px 0;opacity:.45"></i><i style="left:0px;top:5px;width:19px;height:47px;background:#fafafa;"></i><i style="left:1px;top:10px;width:17px;height:3px;background:#cfe0f6;"></i><i style="left:2px;top:8px;width:7px;height:1px;background:repeating-linear-gradient(90deg,#8aa8d0 0px 5px,transparent 5px 7px,#8aa8d0 7px 12px,transparent 12px 14px);background-position:-5px 0;opacity:.45"></i><i style="left:2px;top:11px;width:8px;height:1px;background:repeating-linear-gradient(90deg,#8aa8d0 0px 5px,transparent 5px 7px,#8aa8d0 7px 12px,transparent 12px 14px);background-position:-10px 0;opacity:.45"></i><i style="left:2px;top:14px;width:10px;height:1px;background:repeating-linear-gradient(90deg,#8aa8d0 0px 5px,transparent 5px 7px,#8aa8d0 7px 12px,transparent 12px 14px);background-position:-4px 0;opacity:.45"></i><i style="left:2px;top:17px;width:10px;height:1px;background:repeating-linear-gradient(90deg,#8aa8d0 0px 3px,transparent 3px 4px,#8aa8d0 4px 9px,transparent 9px 11px,#8aa8d0 11px 18px,transparent 18px 19px);background-position:-6px 0;opacity:.45"></i><i style="left:2px;top:20px;width:8px;height:1px;background:repeating-linear-gradient(90deg,#8aa8d0 0px 4px,transparent 4px 5px,#8aa8d0 5px 11px,transparent 11px 13px,#8aa8d0 13px 16px,transparent 16px 17px);background-position:-10px 0;opacity:.45"></i><i style="left:2px;top:23px;width:10px;height:1px;background:repeating-linear-gradient(90deg,#8aa8d0 0px 6px,transparent 6px 8px,#8aa8d0 8px 10px,transparent 10px 11px,#8aa8d0 11px 15px,transparent 15px 16px);background-position:-7px 0;opacity:.45"></i><i style="left:2px;top:26px;width:7px;height:1px;background:repeating-linear-gradient(90deg,#8aa8d0 0px 6px,transparent 6px 8px,#8aa8d0 8px 10px,transparent 10px 11px,#8aa8d0 11px 15px,transparent 15px 16px);background-position:-11px 0;opacity:.45"></i><i style="left:2px;top:29px;width:11px;height:1px;background:repeating-linear-gradient(90deg,#8aa8d0 0px 6px,transparent 6px 8px,#8aa8d0 8px 10px,transparent 10px 11px,#8aa8d0 11px 15px,transparent 15px 16px);background-position:-15px 0;opacity:.45"></i><i style="left:2px;top:32px;width:7px;height:1px;background:repeating-linear-gradient(90deg,#8aa8d0 0px 3px,transparent 3px 4px,#8aa8d0 4px 9px,transparent 9px 11px,#8aa8d0 11px 18px,transparent 18px 19px);background-position:-8px 0;opacity:.45"></i><i style="left:2px;top:35px;width:6px;height:1px;background:repeating-linear-gradient(90deg,#8aa8d0 0px 5px,transparent 5px 7px,#8aa8d0 7px 12px,transparent 12px 14px);background-position:-3px 0;opacity:.45"></i><i style="left:25px;top:8px;width:22px;height:1px;background:repeating-linear-gradient(90deg,#999 0px 3px,transparent 3px 4px,#999 4px 9px,transparent 9px 11px,#999 11px 18px,transparent 18px 19px);background-position:-6px 0;opacity:.45"></i><i style="left:50px;top:8px;width:18px;height:1px;background:repeating-linear-gradient(90deg,#bbb 0px 6px,transparent 6px 8px,#bbb 8px 10px,transparent 10px 11px,#bbb 11px 15px,transparent 15px 16px);background-position:-9px 0;opacity:.45"></i><i style="left:74px;top:8px;width:9px;height:1px;background:repeating-linear-gradient(90deg,#bbb 0px 6px,transparent 6px 8px,#bbb 8px 10px,transparent 10px 11px,#bbb 11px 15px,transparent 15px 16px);background-position:-1px 0;opacity:.45"></i><i style="left:25px;top:11px;width:22px;height:1px;background:repeating-linear-gradient(90deg,#999 0px 5px,transparent 5px 7px,#999 7px 12px,transparent 12px 14px);background-position:-12px 0;opacity:.45"></i><i style="left:50px;top:11px;width:18px;height:1px;background:repeating-linear-gradient(90deg,#bbb 0px 4px,transparent 4px 5px,#bbb 5px 11px,transparent 11px 13px,#bbb 13px 16px,transparent 16px 17px);background-position:-13px 0;opacity:.45"></i><i style="left:74px;top:11px;width:9px;height:1px;background:repeating-linear-gradient(90deg,#bbb 0px 5px,transparent 5px 7px,#bbb 7px 12px,transparent 12px 14px);background-position:-12px 0;opacity:.45"></i><i style="left:25px;top:14px;width:22px;height:1px;background:repeating-linear-gradient(90deg,#999 0px 4px,transparent 4px 5px,#999 5px 11px,transparent 11px 13px,#999 13px 16px,transparent 16px 17px);background-position:-15px 0;opacity:.45"></i><i style="left:50px;top:14px;width:18px;height:1px;background:repeating-linear-gradient(90deg,#bbb 0px 5px,transparent 5px 7px,#bbb 7px 12px,transparent 12px 14px);background-position:-4px 0;opacity:.45"></i><i style="left:74px;top:14px;width:9px;height:1px;background:repeating-linear-gradient(90deg,#bbb 0px 4px,transparent 4px 5px,#bbb 5px 11px,transparent 11px 13px,#bbb 13px 16px,transparent 16px 17px);background-position:-7px 0;opacity:.45"></i><i style="left:25px;top:17px;width:22px;height:1px;background:repeating-linear-gradient(90deg,#999 0px 5px,transparent 5px 7px,#999 7px 12px,transparent 12px 14px);background-position:-11px 0;opacity:.45"></i><i style="left:50px;top:17px;width:18px;height:1px;background:repeating-linear-gradient(90deg,#bbb 0px 4px,transparent 4px 5px,#bbb 5px 11px,transparent 11px 13px,#bbb 13px 16px,transparent 16px 17px);background-position:-9px 0;opacity:.45"></i><i style="left:74px;top:17px;width:9px;height:1px;background:repeating-linear-gradient(90deg,#bbb 0px 5px,transparent 5px 7px,#bbb 7px 12px,transparent 12px 14px);background-position:-3px 0;opacity:.45"></i><i style="left:25px;top:20px;width:22px;height:1px;background:repeating-linear-gradient(90deg,#999 0px 4px,transparent 4px 5px,#999 5px 11px,transparent 11px 13px,#999 13px 16px,transparent 16px 17px);background-position:-7px 0;opacity:.45"></i><i style="left:50px;top:20px;width:18px;height:1px;background:repeating-linear-gradient(90deg,#bbb 0px 5px,transparent 5px 7px,#bbb 7px 12px,transparent 12px 14px);background-position:-4px 0;opacity:.45"></i><i style="left:74px;top:20px;width:9px;height:1px;background:repeating-linear-gradient(90deg,#bbb 0px 4px,transparent 4px 5px,#bbb 5px 11px,transparent 11px 13px,#bbb 13px 16px,transparent 16px 17px);background-position:-10px 0;opacity:.45"></i><i style="left:25px;top:23px;width:22px;height:1px;background:repeating-linear-gradient(90deg,#999 0px 4px,transparent 4px 5px,#999 5px 11px,transparent 11px 13px,#999 13px 16px,transparent 16px 17px);background-position:-8px 0;opacity:.45"></i><i style="left:50px;top:23px;width:18px;height:1px;background:repeating-linear-gradient(90deg,#bbb 0px 4px,transparent 4px 5px,#bbb 5px 11px,transparent 11px 13px,#bbb 13px 16px,transparent 16px 17px);background-position:-16px 0;opacity:.45"></i><i style="left:74px;top:23px;width:9px;height:1px;background:repeating-linear-gradient(90deg,#bbb 0px 3px,transparent 3px 4px,#bbb 4px 9px,transparent 9px 11px,#bbb 11px 18px,transparent 18px 19px);background-position:-8px 0;opacity:.45"></i><i style="left:25px;top:26px;width:22px;height:1px;background:repeating-linear-gradient(90deg,#999 0px 6px,transparent 6px 8px,#999 8px 10px,transparent 10px 11px,#999 11px 15px,transparent 15px 16px);background-position:-3px 0;opacity:.45"></i><i style="left:50px;top:26px;width:18px;height:1px;background:repeating-linear-gradient(90deg,#bbb 0px 4px,transparent 4px 5px,#bbb 5px 11px,transparent 11px 13px,#bbb 13px 16px,transparent 16px 17px);background-position:-10px 0;opacity:.45"></i><i style="left:74px;top:26px;width:9px;height:1px;background:repeating-linear-gradient(90deg,#bbb 0px 3px,transparent 3px 4px,#bbb 4px 9px,transparent 9px 11px,#bbb 11px 18px,transparent 18px 19px);background-position:-8px 0;opacity:.45"></i><i style="left:25px;top:29px;width:22px;height:1px;background:repeating-linear-gradient(90deg,#999 0px 4px,transparent 4px 5px,#999 5px 11px,transparent 11px 13px,#999 13px 16px,transparent 16px 17px);background-position:-13px 0;opacity:.45"></i><i style="left:50px;top:29px;width:18px;height:1px;background:repeating-linear-gradient(90deg,#bbb 0px 3px,transparent 3px 4px,#bbb 4px 9px,transparent 9px 11px,#bbb 11px 18px,transparent 18px 19px);background-position:-0px 0;opacity:.45"></i><i style="left:74px;top:29px;width:9px;height:1px;background:repeating-linear-gradient(90deg,#bbb 0px 5px,transparent 5px 7px,#bbb 7px 12px,transparent 12px 14px);background-position:-11px 0;opacity:.45"></i><i style="left:25px;top:32px;width:22px;height:1px;background:repeating-linear-gradient(90deg,#999 0px 4px,transparent 4px 5px,#999 5px 11px,transparent 11px 13px,#999 13px 16px,transparent 16px 17px);background-position:-16px 0;opacity:.45"></i><i style="left:50px;top:32px;width:18px;height:1px;background:repeating-linear-gradient(90deg,#bbb 0px 5px,transparent 5px 7px,#bbb 7px 12px,transparent 12px 14px);background-position:-8px 0;opacity:.45"></i><i style="left:74px;top:32px;width:9px;height:1px;background:repeating-linear-gradient(90deg,#bbb 0px 4px,transparent 4px 5px,#bbb 5px 11px,transparent 11px 13px,#bbb 13px 16px,transparent 16px 17px);background-position:-2px 0;opacity:.45"></i><i style="left:25px;top:35px;width:22px;height:1px;background:repeating-linear-gradient(90deg,#999 0px 6px,transparent 6px 8px,#999 8px 10px,transparent 10px 11px,#999 11px 15px,transparent 15px 16px);background-position:-7px 0;opacity:.45"></i><i style="left:50px;top:35px;width:18px;height:1px;background:repeating-linear-gradient(90deg,#bbb 0px 6px,transparent 6px 8px,#bbb 8px 10px,transparent 10px 11px,#bbb 11px 15px,transparent 15px 16px);background-position:-14px 0;opacity:.45"></i><i style="left:74px;top:35px;width:9px;height:1px;background:repeating-linear-gradient(90deg,#bbb 0px 4px,transparent 4px 5px,#bbb 5px 11px,transparent 11px 13px,#bbb 13px 16px,transparent 16px 17px);background-position:-16px 0;opacity:.45"></i><i style="left:25px;top:38px;width:22px;height:1px;background:repeating-linear-gradient(90deg,#999 0px 6px,transparent 6px 8px,#999 8px 10px,transparent 10px 11px,#999 11px 15px,transparent 15px 16px);background-position:-0px 0;opacity:.45"></i><i style="left:50px;top:38px;width:18px;height:1px;background:repeating-linear-gradient(90deg,#bbb 0px 3px,transparent 3px 4px,#bbb 4px 9px,transparent 9px 11px,#bbb 11px 18px,transparent 18px 19px);background-position:-10px 0;opacity:.45"></i><i style="left:74px;top:38px;width:9px;height:1px;background:repeating-linear-gradient(90deg,#bbb 0px 4px,transparent 4px 5px,#bbb 5px 11px,transparent 11px 13px,#bbb 13px 16px,transparent 16px 17px);background-position:-15px 0;opacity:.45"></i><i style="left:25px;top:41px;width:22px;height:1px;background:repeating-linear-gradient(90deg,#999 0px 3px,transparent 3px 4px,#999 4px 9px,transparent 9px 11px,#999 11px 18px,transparent 18px 19px);background-position:-4px 0;opacity:.45"></i><i style="left:50px;top:41px;width:18px;height:1px;background:repeating-linear-gradient(90deg,#bbb 0px 6px,transparent 6px 8px,#bbb 8px 10px,transparent 10px 11px,#bbb 11px 15px,transparent 15px 16px);background-position:-13px 0;opacity:.45"></i><i style="left:74px;top:41px;width:9px;height:1px;background:repeating-linear-gradient(90deg,#bbb 0px 4px,transparent 4px 5px,#bbb 5px 11px,transparent 11px 13px,#bbb 13px 16px,transparent 16px 17px);background-position:-14px 0;opacity:.45"></i><i style="left:23px;top:11px;width:22px;height:2px;background:#cde0f8;"></i><i style="left:0;top:31px;width:90px;height:21px;background:linear-gradient(rgba(255,255,255,0),rgba(210,210,210,0.9))"></i></div></div>
<div class="lab" style="left:175px;top:633px"><span style="letter-spacing:-0.1px">Screenshot</span><br><span style="letter-spacing:-0.7px">2025</span><span style="letter-spacing:0.6px">-</span><span style="letter-spacing:-0.7px">05</span><span style="letter-spacing:0.6px">-</span><span style="letter-spacing:-0.7px">20</span><br><span style="letter-spacing:-0.7px">215033</span></div>
<div class="th" style="left:288px;top:581px;width:90px;height:47px"><div class="tf"><i style="left:0px;top:0px;width:90px;height:47px;background:#0c0c0c;"></i><i style="left:0px;top:0px;width:90px;height:2px;background:#f0f0f0;"></i><i style="left:88px;top:0px;width:2px;height:47px;background:#d8d8d8;"></i><i style="left:1px;top:4px;width:28px;height:1px;background:repeating-linear-gradient(90deg,#777 0px 4px,transparent 4px 5px,#777 5px 11px,transparent 11px 13px,#777 13px 16px,transparent 16px 17px);background-position:-12px 0;opacity:.45"></i><i style="left:1px;top:7px;width:39px;height:1px;background:repeating-linear-gradient(90deg,#777 0px 4px,transparent 4px 5px,#777 5px 11px,transparent 11px 13px,#777 13px 16px,transparent 16px 17px);background-position:-2px 0;opacity:.45"></i><i style="left:1px;top:10px;width:19px;height:1px;background:repeating-linear-gradient(90deg,#777 0px 3px,transparent 3px 4px,#777 4px 9px,transparent 9px 11px,#777 11px 18px,transparent 18px 19px);background-position:-1px 0;opacity:.45"></i><i style="left:1px;top:13px;width:28px;height:1px;background:repeating-linear-gradient(90deg,#777 0px 3px,transparent 3px 4px,#777 4px 9px,transparent 9px 11px,#777 11px 18px,transparent 18px 19px);background-position:-8px 0;opacity:.45"></i><i style="left:1px;top:16px;width:52px;height:1px;background:repeating-linear-gradient(90deg,#777 0px 4px,transparent 4px 5px,#777 5px 11px,transparent 11px 13px,#777 13px 16px,transparent 16px 17px);background-position:-8px 0;opacity:.45"></i><i style="left:1px;top:19px;width:27px;height:1px;background:repeating-linear-gradient(90deg,#777 0px 4px,transparent 4px 5px,#777 5px 11px,transparent 11px 13px,#777 13px 16px,transparent 16px 17px);background-position:-8px 0;opacity:.45"></i><i style="left:1px;top:22px;width:53px;height:1px;background:repeating-linear-gradient(90deg,#777 0px 6px,transparent 6px 8px,#777 8px 10px,transparent 10px 11px,#777 11px 15px,transparent 15px 16px);background-position:-5px 0;opacity:.45"></i><i style="left:1px;top:25px;width:32px;height:1px;background:repeating-linear-gradient(90deg,#777 0px 3px,transparent 3px 4px,#777 4px 9px,transparent 9px 11px,#777 11px 18px,transparent 18px 19px);background-position:-2px 0;opacity:.45"></i><i style="left:1px;top:28px;width:55px;height:1px;background:repeating-linear-gradient(90deg,#777 0px 3px,transparent 3px 4px,#777 4px 9px,transparent 9px 11px,#777 11px 18px,transparent 18px 19px);background-position:-12px 0;opacity:.45"></i><i style="left:1px;top:31px;width:40px;height:1px;background:repeating-linear-gradient(90deg,#777 0px 6px,transparent 6px 8px,#777 8px 10px,transparent 10px 11px,#777 11px 15px,transparent 15px 16px);background-position:-7px 0;opacity:.45"></i><i style="left:1px;top:34px;width:39px;height:1px;background:repeating-linear-gradient(90deg,#777 0px 4px,transparent 4px 5px,#777 5px 11px,transparent 11px 13px,#777 13px 16px,transparent 16px 17px);background-position:-9px 0;opacity:.45"></i><i style="left:1px;top:37px;width:18px;height:1px;background:repeating-linear-gradient(90deg,#777 0px 3px,transparent 3px 4px,#777 4px 9px,transparent 9px 11px,#777 11px 18px,transparent 18px 19px);background-position:-18px 0;opacity:.45"></i></div></div>
<div class="lab" style="left:283px;top:633px"><span style="letter-spacing:-0.1px">Screenshot</span><br><span style="letter-spacing:-0.7px">2025</span><span style="letter-spacing:0.6px">-</span><span style="letter-spacing:-0.7px">05</span><span style="letter-spacing:0.6px">-</span><span style="letter-spacing:-0.7px">20</span><br><span style="letter-spacing:-0.7px">215208</span></div>
<div class="th" style="left:396px;top:563px;width:90px;height:65px"><div class="tf"><i style="left:0px;top:0px;width:90px;height:65px;background:#ffffff;"></i><i style="left:0px;top:0px;width:25px;height:65px;background:#f7f9fc;"></i><i style="left:2px;top:6px;width:18px;height:1px;background:repeating-linear-gradient(90deg,#a0b0c8 0px 4px,transparent 4px 5px,#a0b0c8 5px 11px,transparent 11px 13px,#a0b0c8 13px 16px,transparent 16px 17px);background-position:-2px 0;opacity:.45"></i><i style="left:2px;top:13px;width:8px;height:1px;background:repeating-linear-gradient(90deg,#a0b0c8 0px 6px,transparent 6px 8px,#a0b0c8 8px 10px,transparent 10px 11px,#a0b0c8 11px 15px,transparent 15px 16px);background-position:-9px 0;opacity:.45"></i><i style="left:2px;top:20px;width:10px;height:1px;background:repeating-linear-gradient(90deg,#a0b0c8 0px 6px,transparent 6px 8px,#a0b0c8 8px 10px,transparent 10px 11px,#a0b0c8 11px 15px,transparent 15px 16px);background-position:-1px 0;opacity:.45"></i><i style="left:2px;top:27px;width:14px;height:1px;background:repeating-linear-gradient(90deg,#a0b0c8 0px 6px,transparent 6px 8px,#a0b0c8 8px 10px,transparent 10px 11px,#a0b0c8 11px 15px,transparent 15px 16px);background-position:-13px 0;opacity:.45"></i><i style="left:2px;top:34px;width:14px;height:1px;background:repeating-linear-gradient(90deg,#a0b0c8 0px 3px,transparent 3px 4px,#a0b0c8 4px 9px,transparent 9px 11px,#a0b0c8 11px 18px,transparent 18px 19px);background-position:-17px 0;opacity:.45"></i><i style="left:2px;top:41px;width:18px;height:1px;background:repeating-linear-gradient(90deg,#a0b0c8 0px 3px,transparent 3px 4px,#a0b0c8 4px 9px,transparent 9px 11px,#a0b0c8 11px 18px,transparent 18px 19px);background-position:-1px 0;opacity:.45"></i><i style="left:2px;top:48px;width:17px;height:1px;background:repeating-linear-gradient(90deg,#a0b0c8 0px 3px,transparent 3px 4px,#a0b0c8 4px 9px,transparent 9px 11px,#a0b0c8 11px 18px,transparent 18px 19px);background-position:-14px 0;opacity:.45"></i><i style="left:2px;top:55px;width:18px;height:1px;background:repeating-linear-gradient(90deg,#a0b0c8 0px 5px,transparent 5px 7px,#a0b0c8 7px 12px,transparent 12px 14px);background-position:-6px 0;opacity:.45"></i><i style="left:25px;top:0px;width:1px;height:65px;background:#eeeeee;"></i><i style="left:37px;top:4px;width:13px;height:1px;background:repeating-linear-gradient(90deg,#999 0px 6px,transparent 6px 8px,#999 8px 10px,transparent 10px 11px,#999 11px 15px,transparent 15px 16px);background-position:-11px 0;opacity:.45"></i><i style="left:31px;top:10px;width:3px;height:3px;background:#6aa8e0;"></i><i style="left:37px;top:11px;width:22px;height:1px;background:repeating-linear-gradient(90deg,#999 0px 4px,transparent 4px 5px,#999 5px 11px,transparent 11px 13px,#999 13px 16px,transparent 16px 17px);background-position:-12px 0;opacity:.45"></i><i style="left:31px;top:17px;width:3px;height:3px;background:#6aa8e0;"></i><i style="left:37px;top:18px;width:29px;height:1px;background:repeating-linear-gradient(90deg,#999 0px 3px,transparent 3px 4px,#999 4px 9px,transparent 9px 11px,#999 11px 18px,transparent 18px 19px);background-position:-16px 0;opacity:.45"></i><i style="left:31px;top:24px;width:3px;height:3px;background:#6aa8e0;"></i><i style="left:37px;top:25px;width:32px;height:1px;background:repeating-linear-gradient(90deg,#999 0px 4px,transparent 4px 5px,#999 5px 11px,transparent 11px 13px,#999 13px 16px,transparent 16px 17px);background-position:-15px 0;opacity:.45"></i><i style="left:31px;top:31px;width:3px;height:3px;background:#6aa8e0;"></i><i style="left:37px;top:32px;width:23px;height:1px;background:repeating-linear-gradient(90deg,#999 0px 6px,transparent 6px 8px,#999 8px 10px,transparent 10px 11px,#999 11px 15px,transparent 15px 16px);background-position:-12px 0;opacity:.45"></i><i style="left:31px;top:38px;width:3px;height:3px;background:#6aa8e0;"></i><i style="left:37px;top:39px;width:22px;height:1px;background:repeating-linear-gradient(90deg,#999 0px 5px,transparent 5px 7px,#999 7px 12px,transparent 12px 14px);background-position:-2px 0;opacity:.45"></i><i style="left:31px;top:45px;width:3px;height:3px;background:#6aa8e0;"></i><i style="left:37px;top:46px;width:26px;height:1px;background:repeating-linear-gradient(90deg,#999 0px 3px,transparent 3px 4px,#999 4px 9px,transparent 9px 11px,#999 11px 18px,transparent 18px 19px);background-position:-8px 0;opacity:.45"></i><i style="left:31px;top:52px;width:3px;height:3px;background:#6aa8e0;"></i><i style="left:37px;top:53px;width:28px;height:1px;background:repeating-linear-gradient(90deg,#999 0px 5px,transparent 5px 7px,#999 7px 12px,transparent 12px 14px);background-position:-7px 0;opacity:.45"></i></div></div>
<div class="lab" style="left:391px;top:633px"><span style="letter-spacing:-0.1px">Screenshot</span><br><span style="letter-spacing:-0.7px">2025</span><span style="letter-spacing:0.6px">-</span><span style="letter-spacing:-0.7px">05</span><span style="letter-spacing:0.6px">-</span><span style="letter-spacing:-0.7px">20</span><br><span style="letter-spacing:-0.7px">222957</span></div>
<div class="th" style="left:516px;top:538px;width:66px;height:90px"><div class="tf"><i style="left:0px;top:0px;width:66px;height:90px;background:#f3f3f3;"></i><i style="left:2px;top:1px;width:30px;height:1px;background:repeating-linear-gradient(90deg,#999 0px 4px,transparent 4px 5px,#999 5px 11px,transparent 11px 13px,#999 13px 16px,transparent 16px 17px);background-position:-9px 0;opacity:.45"></i><i style="left:3px;top:5px;width:40px;height:1px;background:repeating-linear-gradient(90deg,#888 0px 5px,transparent 5px 7px,#888 7px 12px,transparent 12px 14px);background-position:-4px 0;opacity:.45"></i><i style="left:3px;top:8px;width:42px;height:1px;background:repeating-linear-gradient(90deg,#888 0px 5px,transparent 5px 7px,#888 7px 12px,transparent 12px 14px);background-position:-0px 0;opacity:.45"></i><i style="left:2px;top:11px;width:62px;height:70px;background:#ffffff;box-sizing:border-box;border:1px solid #dcdcdc;"></i><i style="left:5px;top:14px;width:15px;height:1px;background:repeating-linear-gradient(90deg,#888 0px 3px,transparent 3px 4px,#888 4px 9px,transparent 9px 11px,#888 11px 18px,transparent 18px 19px);background-position:-11px 0;opacity:.45"></i><i style="left:5px;top:19px;width:6px;height:3px;background:#333;"></i><i style="left:13px;top:18px;width:21px;height:1px;background:repeating-linear-gradient(90deg,#999 0px 5px,transparent 5px 7px,#999 7px 12px,transparent 12px 14px);background-position:-5px 0;opacity:.45"></i><i style="left:13px;top:20px;width:22px;height:1px;background:repeating-linear-gradient(90deg,#999 0px 5px,transparent 5px 7px,#999 7px 12px,transparent 12px 14px);background-position:-10px 0;opacity:.45"></i><i style="left:40px;top:24px;width:20px;height:5px;background:#e6eef8;box-sizing:border-box;border:1px solid #7aa0d0;"></i><i style="left:5px;top:33px;width:41px;height:1px;background:repeating-linear-gradient(90deg,#999 0px 4px,transparent 4px 5px,#999 5px 11px,transparent 11px 13px,#999 13px 16px,transparent 16px 17px);background-position:-16px 0;opacity:.45"></i><i style="left:5px;top:38px;width:8px;height:8px;background:#d0602a;"></i><i style="left:15px;top:38px;width:40px;height:1px;background:repeating-linear-gradient(90deg,#999 0px 6px,transparent 6px 8px,#999 8px 10px,transparent 10px 11px,#999 11px 15px,transparent 15px 16px);background-position:-8px 0;opacity:.45"></i><i style="left:15px;top:41px;width:35px;height:1px;background:repeating-linear-gradient(90deg,#999 0px 4px,transparent 4px 5px,#999 5px 11px,transparent 11px 13px,#999 13px 16px,transparent 16px 17px);background-position:-10px 0;opacity:.45"></i><i style="left:38px;top:46px;width:22px;height:4px;background:#fff;box-sizing:border-box;border:1px solid #c8c8c8;"></i><i style="left:22px;top:83px;width:10px;height:4px;background:#fff;box-sizing:border-box;border:1px solid #c0c0c0;"></i><i style="left:36px;top:83px;width:10px;height:4px;background:#fff;box-sizing:border-box;border:1px solid #c0c0c0;"></i><i style="left:50px;top:83px;width:10px;height:4px;background:#fff;box-sizing:border-box;border:1px solid #c0c0c0;"></i></div></div>
<div class="lab" style="left:499px;top:633px"><span style="letter-spacing:-0.1px">Screenshot</span><br><span style="letter-spacing:-0.7px">2025</span><span style="letter-spacing:0.6px">-</span><span style="letter-spacing:-0.7px">05</span><span style="letter-spacing:0.6px">-</span><span style="letter-spacing:-0.7px">20</span><br><span style="letter-spacing:-0.7px">223054</span></div>
<div class="th" style="left:612px;top:576px;width:90px;height:52px"><div class="tf"><i style="left:0px;top:0px;width:90px;height:52px;background:#ffffff;"></i><i style="left:0px;top:0px;width:49px;height:52px;background:#f7f7f7;"></i><i style="left:3px;top:2px;width:24px;height:1px;background:repeating-linear-gradient(90deg,#b8a060 0px 6px,transparent 6px 8px,#b8a060 8px 10px,transparent 10px 11px,#b8a060 11px 15px,transparent 15px 16px);background-position:-11px 0;opacity:.45"></i><i style="left:3px;top:6px;width:42px;height:1px;background:repeating-linear-gradient(90deg,#b8a060 0px 5px,transparent 5px 7px,#b8a060 7px 12px,transparent 12px 14px);background-position:-10px 0;opacity:.45"></i><i style="left:3px;top:10px;width:33px;height:1px;background:repeating-linear-gradient(90deg,#b8a060 0px 4px,transparent 4px 5px,#b8a060 5px 11px,transparent 11px 13px,#b8a060 13px 16px,transparent 16px 17px);background-position:-15px 0;opacity:.45"></i><i style="left:3px;top:14px;width:25px;height:1px;background:repeating-linear-gradient(90deg,#b8a060 0px 6px,transparent 6px 8px,#b8a060 8px 10px,transparent 10px 11px,#b8a060 11px 15px,transparent 15px 16px);background-position:-6px 0;opacity:.45"></i><i style="left:3px;top:18px;width:44px;height:1px;background:repeating-linear-gradient(90deg,#b8a060 0px 5px,transparent 5px 7px,#b8a060 7px 12px,transparent 12px 14px);background-position:-8px 0;opacity:.45"></i><i style="left:13px;top:13px;width:13px;height:3px;box-sizing:border-box;border:1px solid #e04040;"></i><i style="left:36px;top:27px;width:16px;height:3px;box-sizing:border-box;border:1px solid #e04040;"></i><i style="left:5px;top:28px;width:5px;height:4px;background:#e07030;"></i><i style="left:42px;top:3px;width:40px;height:23px;background:#ffffff;box-shadow:0 1px 3px rgba(0,0,0,0.3)"></i><i style="left:45px;top:8px;width:16px;height:1px;background:repeating-linear-gradient(90deg,#5a8ad8 0px 4px,transparent 4px 5px,#5a8ad8 5px 11px,transparent 11px 13px,#5a8ad8 13px 16px,transparent 16px 17px);background-position:-12px 0;opacity:.45"></i><i style="left:45px;top:12px;width:27px;height:1px;background:repeating-linear-gradient(90deg,#999 0px 3px,transparent 3px 4px,#999 4px 9px,transparent 9px 11px,#999 11px 18px,transparent 18px 19px);background-position:-16px 0;opacity:.45"></i><i style="left:45px;top:17px;width:30px;height:1px;background:repeating-linear-gradient(90deg,#7aa0e0 0px 4px,transparent 4px 5px,#7aa0e0 5px 11px,transparent 11px 13px,#7aa0e0 13px 16px,transparent 16px 17px);background-position:-15px 0;opacity:.45"></i><i style="left:45px;top:20px;width:29px;height:1px;background:repeating-linear-gradient(90deg,#7aa0e0 0px 4px,transparent 4px 5px,#7aa0e0 5px 11px,transparent 11px 13px,#7aa0e0 13px 16px,transparent 16px 17px);background-position:-0px 0;opacity:.45"></i></div></div>
<div class="lab" style="left:607px;top:633px"><span style="letter-spacing:-0.1px">Screenshot</span><br><span style="letter-spacing:-0.7px">2025</span><span style="letter-spacing:0.6px">-</span><span style="letter-spacing:-0.7px">05</span><span style="letter-spacing:0.6px">-</span><span style="letter-spacing:-0.7px">20</span><br><span style="letter-spacing:-0.7px">223125</span></div>
<div class="th" style="left:720px;top:593px;width:90px;height:35px"><div class="tf"><i style="left:0px;top:0px;width:90px;height:35px;background:#ffffff;"></i><i style="left:7px;top:6px;width:3px;height:2px;background:#4285f4;"></i><i style="left:10px;top:6px;width:2px;height:2px;background:#ea4335;"></i><i style="left:12px;top:6px;width:2px;height:2px;background:#fbbc04;"></i><i style="left:14px;top:6px;width:2px;height:2px;background:#34a853;"></i><i style="left:22px;top:4px;width:54px;height:5px;box-sizing:border-box;border:1px solid #e0e0e0;border-radius:2px;"></i><i style="left:22px;top:11px;width:28px;height:1px;background:repeating-linear-gradient(90deg,#b0b0b0 0px 5px,transparent 5px 7px,#b0b0b0 7px 12px,transparent 12px 14px);background-position:-7px 0;opacity:.45"></i><i style="left:0px;top:13px;width:90px;height:1px;background:#ececec;"></i><i style="left:20px;top:16px;width:3px;height:3px;background:#f0c040;border-radius:2px;"></i><i style="left:25px;top:16px;width:14px;height:1px;background:repeating-linear-gradient(90deg,#888 0px 5px,transparent 5px 7px,#888 7px 12px,transparent 12px 14px);background-position:-7px 0;opacity:.45"></i><i style="left:20px;top:19px;width:39px;height:1px;background:repeating-linear-gradient(90deg,#7a4ad0 0px 6px,transparent 6px 8px,#7a4ad0 8px 10px,transparent 10px 11px,#7a4ad0 11px 15px,transparent 15px 16px);background-position:-8px 0;opacity:.45"></i><i style="left:20px;top:21px;width:52px;height:1px;background:repeating-linear-gradient(90deg,#9a9a9a 0px 3px,transparent 3px 4px,#9a9a9a 4px 9px,transparent 9px 11px,#9a9a9a 11px 18px,transparent 18px 19px);background-position:-0px 0;opacity:.45"></i><i style="left:20px;top:23px;width:53px;height:1px;background:repeating-linear-gradient(90deg,#9a9a9a 0px 6px,transparent 6px 8px,#9a9a9a 8px 10px,transparent 10px 11px,#9a9a9a 11px 15px,transparent 15px 16px);background-position:-8px 0;opacity:.45"></i><i style="left:20px;top:27px;width:3px;height:3px;background:#f0c040;border-radius:2px;"></i><i style="left:25px;top:27px;width:13px;height:1px;background:repeating-linear-gradient(90deg,#888 0px 5px,transparent 5px 7px,#888 7px 12px,transparent 12px 14px);background-position:-7px 0;opacity:.45"></i><i style="left:20px;top:30px;width:33px;height:1px;background:repeating-linear-gradient(90deg,#7a4ad0 0px 5px,transparent 5px 7px,#7a4ad0 7px 12px,transparent 12px 14px);background-position:-10px 0;opacity:.45"></i><i style="left:20px;top:32px;width:46px;height:1px;background:repeating-linear-gradient(90deg,#9a9a9a 0px 4px,transparent 4px 5px,#9a9a9a 5px 11px,transparent 11px 13px,#9a9a9a 13px 16px,transparent 16px 17px);background-position:-12px 0;opacity:.45"></i><i style="left:20px;top:34px;width:48px;height:1px;background:repeating-linear-gradient(90deg,#9a9a9a 0px 4px,transparent 4px 5px,#9a9a9a 5px 11px,transparent 11px 13px,#9a9a9a 13px 16px,transparent 16px 17px);background-position:-4px 0;opacity:.45"></i></div></div>
<div class="lab" style="left:715px;top:633px"><span style="letter-spacing:-0.1px">Screenshot</span><br><span style="letter-spacing:-0.7px">2025</span><span style="letter-spacing:0.6px">-</span><span style="letter-spacing:-0.7px">05</span><span style="letter-spacing:0.6px">-</span><span style="letter-spacing:-0.7px">20</span><br><span style="letter-spacing:-0.7px">223615</span></div>
<div class="th" style="left:828px;top:591px;width:90px;height:37px"><div class="tf"><i style="left:0px;top:0px;width:90px;height:37px;background:#ffffff;"></i><i style="left:7px;top:6px;width:3px;height:2px;background:#4285f4;"></i><i style="left:10px;top:6px;width:2px;height:2px;background:#ea4335;"></i><i style="left:12px;top:6px;width:2px;height:2px;background:#fbbc04;"></i><i style="left:14px;top:6px;width:2px;height:2px;background:#34a853;"></i><i style="left:22px;top:4px;width:54px;height:5px;box-sizing:border-box;border:1px solid #e0e0e0;border-radius:2px;"></i><i style="left:22px;top:11px;width:28px;height:1px;background:repeating-linear-gradient(90deg,#b0b0b0 0px 5px,transparent 5px 7px,#b0b0b0 7px 12px,transparent 12px 14px);background-position:-7px 0;opacity:.45"></i><i style="left:0px;top:13px;width:90px;height:1px;background:#ececec;"></i><i style="left:20px;top:16px;width:3px;height:3px;background:#f0c040;border-radius:2px;"></i><i style="left:25px;top:16px;width:14px;height:1px;background:repeating-linear-gradient(90deg,#888 0px 5px,transparent 5px 7px,#888 7px 12px,transparent 12px 14px);background-position:-7px 0;opacity:.45"></i><i style="left:20px;top:19px;width:39px;height:1px;background:repeating-linear-gradient(90deg,#7a4ad0 0px 6px,transparent 6px 8px,#7a4ad0 8px 10px,transparent 10px 11px,#7a4ad0 11px 15px,transparent 15px 16px);background-position:-8px 0;opacity:.45"></i><i style="left:20px;top:21px;width:52px;height:1px;background:repeating-linear-gradient(90deg,#9a9a9a 0px 3px,transparent 3px 4px,#9a9a9a 4px 9px,transparent 9px 11px,#9a9a9a 11px 18px,transparent 18px 19px);background-position:-0px 0;opacity:.45"></i><i style="left:20px;top:23px;width:53px;height:1px;background:repeating-linear-gradient(90deg,#9a9a9a 0px 6px,transparent 6px 8px,#9a9a9a 8px 10px,transparent 10px 11px,#9a9a9a 11px 15px,transparent 15px 16px);background-position:-8px 0;opacity:.45"></i><i style="left:20px;top:27px;width:3px;height:3px;background:#f0c040;border-radius:2px;"></i><i style="left:25px;top:27px;width:13px;height:1px;background:repeating-linear-gradient(90deg,#888 0px 5px,transparent 5px 7px,#888 7px 12px,transparent 12px 14px);background-position:-7px 0;opacity:.45"></i><i style="left:20px;top:30px;width:33px;height:1px;background:repeating-linear-gradient(90deg,#7a4ad0 0px 5px,transparent 5px 7px,#7a4ad0 7px 12px,transparent 12px 14px);background-position:-10px 0;opacity:.45"></i><i style="left:20px;top:32px;width:46px;height:1px;background:repeating-linear-gradient(90deg,#9a9a9a 0px 4px,transparent 4px 5px,#9a9a9a 5px 11px,transparent 11px 13px,#9a9a9a 13px 16px,transparent 16px 17px);background-position:-12px 0;opacity:.45"></i><i style="left:20px;top:34px;width:48px;height:1px;background:repeating-linear-gradient(90deg,#9a9a9a 0px 4px,transparent 4px 5px,#9a9a9a 5px 11px,transparent 11px 13px,#9a9a9a 13px 16px,transparent 16px 17px);background-position:-4px 0;opacity:.45"></i></div></div>
<div class="lab" style="left:823px;top:633px"><span style="letter-spacing:-0.1px">Screenshot</span><br><span style="letter-spacing:-0.7px">2025</span><span style="letter-spacing:0.6px">-</span><span style="letter-spacing:-0.7px">05</span><span style="letter-spacing:0.6px">-</span><span style="letter-spacing:-0.7px">20</span><br><span style="letter-spacing:-0.7px">225632</span></div>
<div class="th" style="left:936px;top:594px;width:90px;height:34px"><div class="tf"><i style="left:0px;top:0px;width:90px;height:34px;background:#ffffff;"></i><i style="left:6px;top:6px;width:33px;height:1px;background:repeating-linear-gradient(90deg,#333 0px 5px,transparent 5px 7px,#333 7px 12px,transparent 12px 14px);background-position:-7px 0;opacity:.45"></i><i style="left:6px;top:10px;width:34px;height:1px;background:repeating-linear-gradient(90deg,#333 0px 6px,transparent 6px 8px,#333 8px 10px,transparent 10px 11px,#333 11px 15px,transparent 15px 16px);background-position:-5px 0;opacity:.45"></i><i style="left:6px;top:15px;width:68px;height:1px;background:repeating-linear-gradient(90deg,#888 0px 3px,transparent 3px 4px,#888 4px 9px,transparent 9px 11px,#888 11px 18px,transparent 18px 19px);background-position:-4px 0;opacity:.45"></i><i style="left:6px;top:17px;width:66px;height:1px;background:repeating-linear-gradient(90deg,#888 0px 3px,transparent 3px 4px,#888 4px 9px,transparent 9px 11px,#888 11px 18px,transparent 18px 19px);background-position:-15px 0;opacity:.45"></i><i style="left:6px;top:20px;width:64px;height:1px;background:repeating-linear-gradient(90deg,#888 0px 6px,transparent 6px 8px,#888 8px 10px,transparent 10px 11px,#888 11px 15px,transparent 15px 16px);background-position:-7px 0;opacity:.45"></i><i style="left:6px;top:22px;width:70px;height:1px;background:repeating-linear-gradient(90deg,#888 0px 6px,transparent 6px 8px,#888 8px 10px,transparent 10px 11px,#888 11px 15px,transparent 15px 16px);background-position:-5px 0;opacity:.45"></i><i style="left:6px;top:25px;width:78px;height:1px;background:#e8e8e8;"></i><i style="left:10px;top:26px;width:19px;height:1px;background:repeating-linear-gradient(90deg,#999 0px 6px,transparent 6px 8px,#999 8px 10px,transparent 10px 11px,#999 11px 15px,transparent 15px 16px);background-position:-8px 0;opacity:.45"></i><i style="left:6px;top:27px;width:11px;height:5px;background:#2a7ad8;box-sizing:border-box;border:1px solid #f0a0a0;"></i></div></div>
<div class="lab" style="left:931px;top:633px"><span style="letter-spacing:-0.1px">Screenshot</span><br><span style="letter-spacing:-0.7px">2025</span><span style="letter-spacing:0.6px">-</span><span style="letter-spacing:-0.7px">05</span><span style="letter-spacing:0.6px">-</span><span style="letter-spacing:-0.7px">20</span><br><span style="letter-spacing:-0.7px">225841</span></div>
<div class="th" style="left:1044px;top:566px;width:90px;height:62px"><div class="tf"><i style="left:0px;top:0px;width:90px;height:62px;background:#f3f3f6;"></i><i style="left:3px;top:2px;width:7px;height:1px;background:repeating-linear-gradient(90deg,#a8a8a8 0px 3px,transparent 3px 4px,#a8a8a8 4px 9px,transparent 9px 11px,#a8a8a8 11px 18px,transparent 18px 19px);background-position:-4px 0;opacity:.45"></i><i style="left:3px;top:6px;width:4px;height:4px;background:#c8ccd4;border-radius:2px;"></i><i style="left:9px;top:6px;width:10px;height:1px;background:repeating-linear-gradient(90deg,#888 0px 6px,transparent 6px 8px,#888 8px 10px,transparent 10px 11px,#888 11px 15px,transparent 15px 16px);background-position:-7px 0;opacity:.45"></i><i style="left:9px;top:8px;width:13px;height:1px;background:repeating-linear-gradient(90deg,#888 0px 6px,transparent 6px 8px,#888 8px 10px,transparent 10px 11px,#888 11px 15px,transparent 15px 16px);background-position:-5px 0;opacity:.45"></i><i style="left:3px;top:12px;width:21px;height:3px;background:#ffffff;box-sizing:border-box;border:1px solid #d8d8d8;"></i><i style="left:4px;top:18px;width:8px;height:1px;background:repeating-linear-gradient(90deg,#8aa0c0 0px 6px,transparent 6px 8px,#8aa0c0 8px 10px,transparent 10px 11px,#8aa0c0 11px 15px,transparent 15px 16px);background-position:-8px 0;opacity:.45"></i><i style="left:4px;top:23px;width:15px;height:1px;background:repeating-linear-gradient(90deg,#8aa0c0 0px 3px,transparent 3px 4px,#8aa0c0 4px 9px,transparent 9px 11px,#8aa0c0 11px 18px,transparent 18px 19px);background-position:-2px 0;opacity:.45"></i><i style="left:4px;top:28px;width:15px;height:1px;background:repeating-linear-gradient(90deg,#8aa0c0 0px 3px,transparent 3px 4px,#8aa0c0 4px 9px,transparent 9px 11px,#8aa0c0 11px 18px,transparent 18px 19px);background-position:-14px 0;opacity:.45"></i><i style="left:4px;top:33px;width:15px;height:1px;background:repeating-linear-gradient(90deg,#8aa0c0 0px 5px,transparent 5px 7px,#8aa0c0 7px 12px,transparent 12px 14px);background-position:-6px 0;opacity:.45"></i><i style="left:4px;top:38px;width:16px;height:1px;background:repeating-linear-gradient(90deg,#8aa0c0 0px 4px,transparent 4px 5px,#8aa0c0 5px 11px,transparent 11px 13px,#8aa0c0 13px 16px,transparent 16px 17px);background-position:-8px 0;opacity:.45"></i><i style="left:4px;top:43px;width:10px;height:1px;background:repeating-linear-gradient(90deg,#8aa0c0 0px 3px,transparent 3px 4px,#8aa0c0 4px 9px,transparent 9px 11px,#8aa0c0 11px 18px,transparent 18px 19px);background-position:-11px 0;opacity:.45"></i><i style="left:4px;top:48px;width:16px;height:1px;background:repeating-linear-gradient(90deg,#8aa0c0 0px 3px,transparent 3px 4px,#8aa0c0 4px 9px,transparent 9px 11px,#8aa0c0 11px 18px,transparent 18px 19px);background-position:-16px 0;opacity:.45"></i><i style="left:4px;top:53px;width:9px;height:1px;background:repeating-linear-gradient(90deg,#8aa0c0 0px 3px,transparent 3px 4px,#8aa0c0 4px 9px,transparent 9px 11px,#8aa0c0 11px 18px,transparent 18px 19px);background-position:-5px 0;opacity:.45"></i><i style="left:4px;top:58px;width:7px;height:1px;background:repeating-linear-gradient(90deg,#8aa0c0 0px 4px,transparent 4px 5px,#8aa0c0 5px 11px,transparent 11px 13px,#8aa0c0 13px 16px,transparent 16px 17px);background-position:-3px 0;opacity:.45"></i><i style="left:4px;top:63px;width:14px;height:1px;background:repeating-linear-gradient(90deg,#8aa0c0 0px 4px,transparent 4px 5px,#8aa0c0 5px 11px,transparent 11px 13px,#8aa0c0 13px 16px,transparent 16px 17px);background-position:-2px 0;opacity:.45"></i><i style="left:30px;top:5px;width:14px;height:1px;background:repeating-linear-gradient(90deg,#444 0px 5px,transparent 5px 7px,#444 7px 12px,transparent 12px 14px);background-position:-8px 0;opacity:.45"></i><i style="left:29px;top:10px;width:58px;height:5px;background:#fcfcfe;"></i><i style="left:31px;top:12px;width:2px;height:2px;background:#8a8a8a;"></i><i style="left:35px;top:11px;width:30px;height:1px;background:repeating-linear-gradient(90deg,#9a9a9a 0px 6px,transparent 6px 8px,#9a9a9a 8px 10px,transparent 10px 11px,#9a9a9a 11px 15px,transparent 15px 16px);background-position:-7px 0;opacity:.45"></i><i style="left:35px;top:13px;width:15px;height:1px;background:repeating-linear-gradient(90deg,#9a9a9a 0px 5px,transparent 5px 7px,#9a9a9a 7px 12px,transparent 12px 14px);background-position:-2px 0;opacity:.45"></i><i style="left:29px;top:16px;width:58px;height:5px;background:#fcfcfe;"></i><i style="left:31px;top:18px;width:2px;height:2px;background:#8a8a8a;"></i><i style="left:35px;top:17px;width:29px;height:1px;background:repeating-linear-gradient(90deg,#9a9a9a 0px 3px,transparent 3px 4px,#9a9a9a 4px 9px,transparent 9px 11px,#9a9a9a 11px 18px,transparent 18px 19px);background-position:-2px 0;opacity:.45"></i><i style="left:35px;top:19px;width:15px;height:1px;background:repeating-linear-gradient(90deg,#9a9a9a 0px 3px,transparent 3px 4px,#9a9a9a 4px 9px,transparent 9px 11px,#9a9a9a 11px 18px,transparent 18px 19px);background-position:-13px 0;opacity:.45"></i><i style="left:29px;top:22px;width:58px;height:5px;background:#fcfcfe;"></i><i style="left:31px;top:24px;width:2px;height:2px;background:#8a8a8a;"></i><i style="left:35px;top:23px;width:26px;height:1px;background:repeating-linear-gradient(90deg,#9a9a9a 0px 6px,transparent 6px 8px,#9a9a9a 8px 10px,transparent 10px 11px,#9a9a9a 11px 15px,transparent 15px 16px);background-position:-6px 0;opacity:.45"></i><i style="left:35px;top:25px;width:30px;height:1px;background:repeating-linear-gradient(90deg,#9a9a9a 0px 6px,transparent 6px 8px,#9a9a9a 8px 10px,transparent 10px 11px,#9a9a9a 11px 15px,transparent 15px 16px);background-position:-5px 0;opacity:.45"></i><i style="left:29px;top:28px;width:58px;height:5px;background:#fcfcfe;"></i><i style="left:31px;top:30px;width:2px;height:2px;background:#8a8a8a;"></i><i style="left:35px;top:29px;width:21px;height:1px;background:repeating-linear-gradient(90deg,#9a9a9a 0px 4px,transparent 4px 5px,#9a9a9a 5px 11px,transparent 11px 13px,#9a9a9a 13px 16px,transparent 16px 17px);background-position:-6px 0;opacity:.45"></i><i style="left:35px;top:31px;width:29px;height:1px;background:repeating-linear-gradient(90deg,#9a9a9a 0px 3px,transparent 3px 4px,#9a9a9a 4px 9px,transparent 9px 11px,#9a9a9a 11px 18px,transparent 18px 19px);background-position:-15px 0;opacity:.45"></i><i style="left:29px;top:34px;width:58px;height:5px;background:#fcfcfe;"></i><i style="left:31px;top:36px;width:2px;height:2px;background:#8a8a8a;"></i><i style="left:35px;top:35px;width:27px;height:1px;background:repeating-linear-gradient(90deg,#9a9a9a 0px 6px,transparent 6px 8px,#9a9a9a 8px 10px,transparent 10px 11px,#9a9a9a 11px 15px,transparent 15px 16px);background-position:-6px 0;opacity:.45"></i><i style="left:35px;top:37px;width:22px;height:1px;background:repeating-linear-gradient(90deg,#9a9a9a 0px 4px,transparent 4px 5px,#9a9a9a 5px 11px,transparent 11px 13px,#9a9a9a 13px 16px,transparent 16px 17px);background-position:-4px 0;opacity:.45"></i><i style="left:29px;top:40px;width:58px;height:5px;background:#fcfcfe;"></i><i style="left:31px;top:42px;width:2px;height:2px;background:#8a8a8a;"></i><i style="left:35px;top:41px;width:25px;height:1px;background:repeating-linear-gradient(90deg,#9a9a9a 0px 3px,transparent 3px 4px,#9a9a9a 4px 9px,transparent 9px 11px,#9a9a9a 11px 18px,transparent 18px 19px);background-position:-9px 0;opacity:.45"></i><i style="left:35px;top:43px;width:18px;height:1px;background:repeating-linear-gradient(90deg,#9a9a9a 0px 4px,transparent 4px 5px,#9a9a9a 5px 11px,transparent 11px 13px,#9a9a9a 13px 16px,transparent 16px 17px);background-position:-8px 0;opacity:.45"></i><i style="left:29px;top:46px;width:58px;height:5px;background:#fcfcfe;"></i><i style="left:31px;top:48px;width:2px;height:2px;background:#8a8a8a;"></i><i style="left:35px;top:47px;width:17px;height:1px;background:repeating-linear-gradient(90deg,#9a9a9a 0px 6px,transparent 6px 8px,#9a9a9a 8px 10px,transparent 10px 11px,#9a9a9a 11px 15px,transparent 15px 16px);background-position:-5px 0;opacity:.45"></i><i style="left:35px;top:49px;width:19px;height:1px;background:repeating-linear-gradient(90deg,#9a9a9a 0px 5px,transparent 5px 7px,#9a9a9a 7px 12px,transparent 12px 14px);background-position:-12px 0;opacity:.45"></i></div></div>
<div class="lab" style="left:1039px;top:633px"><span style="letter-spacing:-0.1px">Screenshot</span><br><span style="letter-spacing:-0.7px">2025</span><span style="letter-spacing:0.6px">-</span><span style="letter-spacing:-0.7px">05</span><span style="letter-spacing:0.6px">-</span><span style="letter-spacing:-0.7px">20</span><br><span style="letter-spacing:-0.7px">230903</span></div>
<div class="th" style="left:1152px;top:565px;width:90px;height:63px"><div class="tf"><i style="left:0px;top:0px;width:90px;height:63px;background:#f3f3f6;"></i><i style="left:3px;top:2px;width:7px;height:1px;background:repeating-linear-gradient(90deg,#a8a8a8 0px 3px,transparent 3px 4px,#a8a8a8 4px 9px,transparent 9px 11px,#a8a8a8 11px 18px,transparent 18px 19px);background-position:-4px 0;opacity:.45"></i><i style="left:3px;top:6px;width:4px;height:4px;background:#c8ccd4;border-radius:2px;"></i><i style="left:9px;top:6px;width:10px;height:1px;background:repeating-linear-gradient(90deg,#888 0px 6px,transparent 6px 8px,#888 8px 10px,transparent 10px 11px,#888 11px 15px,transparent 15px 16px);background-position:-7px 0;opacity:.45"></i><i style="left:9px;top:8px;width:13px;height:1px;background:repeating-linear-gradient(90deg,#888 0px 6px,transparent 6px 8px,#888 8px 10px,transparent 10px 11px,#888 11px 15px,transparent 15px 16px);background-position:-5px 0;opacity:.45"></i><i style="left:3px;top:12px;width:21px;height:3px;background:#ffffff;box-sizing:border-box;border:1px solid #d8d8d8;"></i><i style="left:4px;top:18px;width:8px;height:1px;background:repeating-linear-gradient(90deg,#8aa0c0 0px 6px,transparent 6px 8px,#8aa0c0 8px 10px,transparent 10px 11px,#8aa0c0 11px 15px,transparent 15px 16px);background-position:-8px 0;opacity:.45"></i><i style="left:4px;top:23px;width:15px;height:1px;background:repeating-linear-gradient(90deg,#8aa0c0 0px 3px,transparent 3px 4px,#8aa0c0 4px 9px,transparent 9px 11px,#8aa0c0 11px 18px,transparent 18px 19px);background-position:-2px 0;opacity:.45"></i><i style="left:4px;top:28px;width:15px;height:1px;background:repeating-linear-gradient(90deg,#8aa0c0 0px 3px,transparent 3px 4px,#8aa0c0 4px 9px,transparent 9px 11px,#8aa0c0 11px 18px,transparent 18px 19px);background-position:-14px 0;opacity:.45"></i><i style="left:4px;top:33px;width:15px;height:1px;background:repeating-linear-gradient(90deg,#8aa0c0 0px 5px,transparent 5px 7px,#8aa0c0 7px 12px,transparent 12px 14px);background-position:-6px 0;opacity:.45"></i><i style="left:4px;top:38px;width:16px;height:1px;background:repeating-linear-gradient(90deg,#8aa0c0 0px 4px,transparent 4px 5px,#8aa0c0 5px 11px,transparent 11px 13px,#8aa0c0 13px 16px,transparent 16px 17px);background-position:-8px 0;opacity:.45"></i><i style="left:4px;top:43px;width:10px;height:1px;background:repeating-linear-gradient(90deg,#8aa0c0 0px 3px,transparent 3px 4px,#8aa0c0 4px 9px,transparent 9px 11px,#8aa0c0 11px 18px,transparent 18px 19px);background-position:-11px 0;opacity:.45"></i><i style="left:4px;top:48px;width:16px;height:1px;background:repeating-linear-gradient(90deg,#8aa0c0 0px 3px,transparent 3px 4px,#8aa0c0 4px 9px,transparent 9px 11px,#8aa0c0 11px 18px,transparent 18px 19px);background-position:-16px 0;opacity:.45"></i><i style="left:4px;top:53px;width:9px;height:1px;background:repeating-linear-gradient(90deg,#8aa0c0 0px 3px,transparent 3px 4px,#8aa0c0 4px 9px,transparent 9px 11px,#8aa0c0 11px 18px,transparent 18px 19px);background-position:-5px 0;opacity:.45"></i><i style="left:4px;top:58px;width:7px;height:1px;background:repeating-linear-gradient(90deg,#8aa0c0 0px 4px,transparent 4px 5px,#8aa0c0 5px 11px,transparent 11px 13px,#8aa0c0 13px 16px,transparent 16px 17px);background-position:-3px 0;opacity:.45"></i><i style="left:4px;top:63px;width:14px;height:1px;background:repeating-linear-gradient(90deg,#8aa0c0 0px 4px,transparent 4px 5px,#8aa0c0 5px 11px,transparent 11px 13px,#8aa0c0 13px 16px,transparent 16px 17px);background-position:-2px 0;opacity:.45"></i><i style="left:30px;top:5px;width:24px;height:1px;background:repeating-linear-gradient(90deg,#444 0px 6px,transparent 6px 8px,#444 8px 10px,transparent 10px 11px,#444 11px 15px,transparent 15px 16px);background-position:-11px 0;opacity:.45"></i><i style="left:30px;top:10px;width:33px;height:1px;background:repeating-linear-gradient(90deg,#aaa 0px 5px,transparent 5px 7px,#aaa 7px 12px,transparent 12px 14px);background-position:-4px 0;opacity:.45"></i><i style="left:29px;top:10px;width:58px;height:5px;background:#fcfcfe;"></i><i style="left:31px;top:12px;width:2px;height:2px;background:#8a8a8a;"></i><i style="left:35px;top:11px;width:30px;height:1px;background:repeating-linear-gradient(90deg,#9a9a9a 0px 6px,transparent 6px 8px,#9a9a9a 8px 10px,transparent 10px 11px,#9a9a9a 11px 15px,transparent 15px 16px);background-position:-7px 0;opacity:.45"></i><i style="left:35px;top:13px;width:15px;height:1px;background:repeating-linear-gradient(90deg,#9a9a9a 0px 5px,transparent 5px 7px,#9a9a9a 7px 12px,transparent 12px 14px);background-position:-2px 0;opacity:.45"></i><i style="left:29px;top:16px;width:58px;height:5px;background:#fcfcfe;"></i><i style="left:31px;top:18px;width:2px;height:2px;background:#8a8a8a;"></i><i style="left:35px;top:17px;width:29px;height:1px;background:repeating-linear-gradient(90deg,#9a9a9a 0px 3px,transparent 3px 4px,#9a9a9a 4px 9px,transparent 9px 11px,#9a9a9a 11px 18px,transparent 18px 19px);background-position:-2px 0;opacity:.45"></i><i style="left:35px;top:19px;width:15px;height:1px;background:repeating-linear-gradient(90deg,#9a9a9a 0px 3px,transparent 3px 4px,#9a9a9a 4px 9px,transparent 9px 11px,#9a9a9a 11px 18px,transparent 18px 19px);background-position:-13px 0;opacity:.45"></i><i style="left:29px;top:22px;width:58px;height:5px;background:#fcfcfe;"></i><i style="left:31px;top:24px;width:2px;height:2px;background:#8a8a8a;"></i><i style="left:35px;top:23px;width:26px;height:1px;background:repeating-linear-gradient(90deg,#9a9a9a 0px 6px,transparent 6px 8px,#9a9a9a 8px 10px,transparent 10px 11px,#9a9a9a 11px 15px,transparent 15px 16px);background-position:-6px 0;opacity:.45"></i><i style="left:35px;top:25px;width:30px;height:1px;background:repeating-linear-gradient(90deg,#9a9a9a 0px 6px,transparent 6px 8px,#9a9a9a 8px 10px,transparent 10px 11px,#9a9a9a 11px 15px,transparent 15px 16px);background-position:-5px 0;opacity:.45"></i><i style="left:29px;top:28px;width:58px;height:5px;background:#fcfcfe;"></i><i style="left:31px;top:30px;width:2px;height:2px;background:#8a8a8a;"></i><i style="left:35px;top:29px;width:21px;height:1px;background:repeating-linear-gradient(90deg,#9a9a9a 0px 4px,transparent 4px 5px,#9a9a9a 5px 11px,transparent 11px 13px,#9a9a9a 13px 16px,transparent 16px 17px);background-position:-6px 0;opacity:.45"></i><i style="left:35px;top:31px;width:29px;height:1px;background:repeating-linear-gradient(90deg,#9a9a9a 0px 3px,transparent 3px 4px,#9a9a9a 4px 9px,transparent 9px 11px,#9a9a9a 11px 18px,transparent 18px 19px);background-position:-15px 0;opacity:.45"></i><i style="left:29px;top:34px;width:58px;height:5px;background:#fcfcfe;"></i><i style="left:31px;top:36px;width:2px;height:2px;background:#8a8a8a;"></i><i style="left:35px;top:35px;width:27px;height:1px;background:repeating-linear-gradient(90deg,#9a9a9a 0px 6px,transparent 6px 8px,#9a9a9a 8px 10px,transparent 10px 11px,#9a9a9a 11px 15px,transparent 15px 16px);background-position:-6px 0;opacity:.45"></i><i style="left:35px;top:37px;width:22px;height:1px;background:repeating-linear-gradient(90deg,#9a9a9a 0px 4px,transparent 4px 5px,#9a9a9a 5px 11px,transparent 11px 13px,#9a9a9a 13px 16px,transparent 16px 17px);background-position:-4px 0;opacity:.45"></i><i style="left:29px;top:40px;width:58px;height:5px;background:#fcfcfe;"></i><i style="left:31px;top:42px;width:2px;height:2px;background:#8a8a8a;"></i><i style="left:35px;top:41px;width:25px;height:1px;background:repeating-linear-gradient(90deg,#9a9a9a 0px 3px,transparent 3px 4px,#9a9a9a 4px 9px,transparent 9px 11px,#9a9a9a 11px 18px,transparent 18px 19px);background-position:-9px 0;opacity:.45"></i><i style="left:35px;top:43px;width:18px;height:1px;background:repeating-linear-gradient(90deg,#9a9a9a 0px 4px,transparent 4px 5px,#9a9a9a 5px 11px,transparent 11px 13px,#9a9a9a 13px 16px,transparent 16px 17px);background-position:-8px 0;opacity:.45"></i><i style="left:29px;top:46px;width:58px;height:5px;background:#fcfcfe;"></i><i style="left:31px;top:48px;width:2px;height:2px;background:#8a8a8a;"></i><i style="left:35px;top:47px;width:17px;height:1px;background:repeating-linear-gradient(90deg,#9a9a9a 0px 6px,transparent 6px 8px,#9a9a9a 8px 10px,transparent 10px 11px,#9a9a9a 11px 15px,transparent 15px 16px);background-position:-5px 0;opacity:.45"></i><i style="left:35px;top:49px;width:19px;height:1px;background:repeating-linear-gradient(90deg,#9a9a9a 0px 5px,transparent 5px 7px,#9a9a9a 7px 12px,transparent 12px 14px);background-position:-12px 0;opacity:.45"></i></div></div>
<div class="lab" style="left:1147px;top:633px"><span style="letter-spacing:-0.1px">Screenshot</span><br><span style="letter-spacing:-0.7px">2025</span><span style="letter-spacing:0.6px">-</span><span style="letter-spacing:-0.7px">05</span><span style="letter-spacing:0.6px">-</span><span style="letter-spacing:-0.7px">20</span><br><span style="letter-spacing:-0.7px">231126</span></div>
<div class="th" style="left:1260px;top:565px;width:90px;height:63px"><div class="tf"><i style="left:0px;top:0px;width:90px;height:63px;background:#f3f3f6;"></i><i style="left:3px;top:2px;width:7px;height:1px;background:repeating-linear-gradient(90deg,#a8a8a8 0px 3px,transparent 3px 4px,#a8a8a8 4px 9px,transparent 9px 11px,#a8a8a8 11px 18px,transparent 18px 19px);background-position:-4px 0;opacity:.45"></i><i style="left:3px;top:6px;width:4px;height:4px;background:#c8ccd4;border-radius:2px;"></i><i style="left:9px;top:6px;width:10px;height:1px;background:repeating-linear-gradient(90deg,#888 0px 6px,transparent 6px 8px,#888 8px 10px,transparent 10px 11px,#888 11px 15px,transparent 15px 16px);background-position:-7px 0;opacity:.45"></i><i style="left:9px;top:8px;width:13px;height:1px;background:repeating-linear-gradient(90deg,#888 0px 6px,transparent 6px 8px,#888 8px 10px,transparent 10px 11px,#888 11px 15px,transparent 15px 16px);background-position:-5px 0;opacity:.45"></i><i style="left:3px;top:12px;width:21px;height:3px;background:#ffffff;box-sizing:border-box;border:1px solid #d8d8d8;"></i><i style="left:4px;top:18px;width:8px;height:1px;background:repeating-linear-gradient(90deg,#8aa0c0 0px 6px,transparent 6px 8px,#8aa0c0 8px 10px,transparent 10px 11px,#8aa0c0 11px 15px,transparent 15px 16px);background-position:-8px 0;opacity:.45"></i><i style="left:4px;top:23px;width:15px;height:1px;background:repeating-linear-gradient(90deg,#8aa0c0 0px 3px,transparent 3px 4px,#8aa0c0 4px 9px,transparent 9px 11px,#8aa0c0 11px 18px,transparent 18px 19px);background-position:-2px 0;opacity:.45"></i><i style="left:4px;top:28px;width:15px;height:1px;background:repeating-linear-gradient(90deg,#8aa0c0 0px 3px,transparent 3px 4px,#8aa0c0 4px 9px,transparent 9px 11px,#8aa0c0 11px 18px,transparent 18px 19px);background-position:-14px 0;opacity:.45"></i><i style="left:4px;top:33px;width:15px;height:1px;background:repeating-linear-gradient(90deg,#8aa0c0 0px 5px,transparent 5px 7px,#8aa0c0 7px 12px,transparent 12px 14px);background-position:-6px 0;opacity:.45"></i><i style="left:4px;top:38px;width:16px;height:1px;background:repeating-linear-gradient(90deg,#8aa0c0 0px 4px,transparent 4px 5px,#8aa0c0 5px 11px,transparent 11px 13px,#8aa0c0 13px 16px,transparent 16px 17px);background-position:-8px 0;opacity:.45"></i><i style="left:4px;top:43px;width:10px;height:1px;background:repeating-linear-gradient(90deg,#8aa0c0 0px 3px,transparent 3px 4px,#8aa0c0 4px 9px,transparent 9px 11px,#8aa0c0 11px 18px,transparent 18px 19px);background-position:-11px 0;opacity:.45"></i><i style="left:4px;top:48px;width:16px;height:1px;background:repeating-linear-gradient(90deg,#8aa0c0 0px 3px,transparent 3px 4px,#8aa0c0 4px 9px,transparent 9px 11px,#8aa0c0 11px 18px,transparent 18px 19px);background-position:-16px 0;opacity:.45"></i><i style="left:4px;top:53px;width:9px;height:1px;background:repeating-linear-gradient(90deg,#8aa0c0 0px 3px,transparent 3px 4px,#8aa0c0 4px 9px,transparent 9px 11px,#8aa0c0 11px 18px,transparent 18px 19px);background-position:-5px 0;opacity:.45"></i><i style="left:4px;top:58px;width:7px;height:1px;background:repeating-linear-gradient(90deg,#8aa0c0 0px 4px,transparent 4px 5px,#8aa0c0 5px 11px,transparent 11px 13px,#8aa0c0 13px 16px,transparent 16px 17px);background-position:-3px 0;opacity:.45"></i><i style="left:4px;top:63px;width:14px;height:1px;background:repeating-linear-gradient(90deg,#8aa0c0 0px 4px,transparent 4px 5px,#8aa0c0 5px 11px,transparent 11px 13px,#8aa0c0 13px 16px,transparent 16px 17px);background-position:-2px 0;opacity:.45"></i><i style="left:30px;top:5px;width:24px;height:1px;background:repeating-linear-gradient(90deg,#444 0px 6px,transparent 6px 8px,#444 8px 10px,transparent 10px 11px,#444 11px 15px,transparent 15px 16px);background-position:-11px 0;opacity:.45"></i><i style="left:30px;top:10px;width:33px;height:1px;background:repeating-linear-gradient(90deg,#aaa 0px 5px,transparent 5px 7px,#aaa 7px 12px,transparent 12px 14px);background-position:-4px 0;opacity:.45"></i><i style="left:29px;top:10px;width:58px;height:5px;background:#fcfcfe;"></i><i style="left:31px;top:12px;width:2px;height:2px;background:#8a8a8a;"></i><i style="left:35px;top:11px;width:30px;height:1px;background:repeating-linear-gradient(90deg,#9a9a9a 0px 6px,transparent 6px 8px,#9a9a9a 8px 10px,transparent 10px 11px,#9a9a9a 11px 15px,transparent 15px 16px);background-position:-7px 0;opacity:.45"></i><i style="left:35px;top:13px;width:15px;height:1px;background:repeating-linear-gradient(90deg,#9a9a9a 0px 5px,transparent 5px 7px,#9a9a9a 7px 12px,transparent 12px 14px);background-position:-2px 0;opacity:.45"></i><i style="left:29px;top:16px;width:58px;height:5px;background:#fcfcfe;"></i><i style="left:31px;top:18px;width:2px;height:2px;background:#8a8a8a;"></i><i style="left:35px;top:17px;width:29px;height:1px;background:repeating-linear-gradient(90deg,#9a9a9a 0px 3px,transparent 3px 4px,#9a9a9a 4px 9px,transparent 9px 11px,#9a9a9a 11px 18px,transparent 18px 19px);background-position:-2px 0;opacity:.45"></i><i style="left:35px;top:19px;width:15px;height:1px;background:repeating-linear-gradient(90deg,#9a9a9a 0px 3px,transparent 3px 4px,#9a9a9a 4px 9px,transparent 9px 11px,#9a9a9a 11px 18px,transparent 18px 19px);background-position:-13px 0;opacity:.45"></i><i style="left:29px;top:22px;width:58px;height:5px;background:#fcfcfe;"></i><i style="left:31px;top:24px;width:2px;height:2px;background:#8a8a8a;"></i><i style="left:35px;top:23px;width:26px;height:1px;background:repeating-linear-gradient(90deg,#9a9a9a 0px 6px,transparent 6px 8px,#9a9a9a 8px 10px,transparent 10px 11px,#9a9a9a 11px 15px,transparent 15px 16px);background-position:-6px 0;opacity:.45"></i><i style="left:35px;top:25px;width:30px;height:1px;background:repeating-linear-gradient(90deg,#9a9a9a 0px 6px,transparent 6px 8px,#9a9a9a 8px 10px,transparent 10px 11px,#9a9a9a 11px 15px,transparent 15px 16px);background-position:-5px 0;opacity:.45"></i><i style="left:29px;top:28px;width:58px;height:5px;background:#fcfcfe;"></i><i style="left:31px;top:30px;width:2px;height:2px;background:#8a8a8a;"></i><i style="left:35px;top:29px;width:21px;height:1px;background:repeating-linear-gradient(90deg,#9a9a9a 0px 4px,transparent 4px 5px,#9a9a9a 5px 11px,transparent 11px 13px,#9a9a9a 13px 16px,transparent 16px 17px);background-position:-6px 0;opacity:.45"></i><i style="left:35px;top:31px;width:29px;height:1px;background:repeating-linear-gradient(90deg,#9a9a9a 0px 3px,transparent 3px 4px,#9a9a9a 4px 9px,transparent 9px 11px,#9a9a9a 11px 18px,transparent 18px 19px);background-position:-15px 0;opacity:.45"></i><i style="left:29px;top:34px;width:58px;height:5px;background:#fcfcfe;"></i><i style="left:31px;top:36px;width:2px;height:2px;background:#8a8a8a;"></i><i style="left:35px;top:35px;width:27px;height:1px;background:repeating-linear-gradient(90deg,#9a9a9a 0px 6px,transparent 6px 8px,#9a9a9a 8px 10px,transparent 10px 11px,#9a9a9a 11px 15px,transparent 15px 16px);background-position:-6px 0;opacity:.45"></i><i style="left:35px;top:37px;width:22px;height:1px;background:repeating-linear-gradient(90deg,#9a9a9a 0px 4px,transparent 4px 5px,#9a9a9a 5px 11px,transparent 11px 13px,#9a9a9a 13px 16px,transparent 16px 17px);background-position:-4px 0;opacity:.45"></i><i style="left:29px;top:40px;width:58px;height:5px;background:#fcfcfe;"></i><i style="left:31px;top:42px;width:2px;height:2px;background:#8a8a8a;"></i><i style="left:35px;top:41px;width:25px;height:1px;background:repeating-linear-gradient(90deg,#9a9a9a 0px 3px,transparent 3px 4px,#9a9a9a 4px 9px,transparent 9px 11px,#9a9a9a 11px 18px,transparent 18px 19px);background-position:-9px 0;opacity:.45"></i><i style="left:35px;top:43px;width:18px;height:1px;background:repeating-linear-gradient(90deg,#9a9a9a 0px 4px,transparent 4px 5px,#9a9a9a 5px 11px,transparent 11px 13px,#9a9a9a 13px 16px,transparent 16px 17px);background-position:-8px 0;opacity:.45"></i><i style="left:29px;top:46px;width:58px;height:5px;background:#fcfcfe;"></i><i style="left:31px;top:48px;width:2px;height:2px;background:#8a8a8a;"></i><i style="left:35px;top:47px;width:17px;height:1px;background:repeating-linear-gradient(90deg,#9a9a9a 0px 6px,transparent 6px 8px,#9a9a9a 8px 10px,transparent 10px 11px,#9a9a9a 11px 15px,transparent 15px 16px);background-position:-5px 0;opacity:.45"></i><i style="left:35px;top:49px;width:19px;height:1px;background:repeating-linear-gradient(90deg,#9a9a9a 0px 5px,transparent 5px 7px,#9a9a9a 7px 12px,transparent 12px 14px);background-position:-12px 0;opacity:.45"></i></div></div>
<div class="th" style="left:180px;top:702px;width:90px;height:73px"><div class="tf"><i style="left:0px;top:0px;width:90px;height:73px;background:#f0f0f0;"></i><i style="left:0px;top:0px;width:90px;height:12px;background:#ffffff;"></i><i style="left:3px;top:1px;width:16px;height:1px;background:repeating-linear-gradient(90deg,#999 0px 6px,transparent 6px 8px,#999 8px 10px,transparent 10px 11px,#999 11px 15px,transparent 15px 16px);background-position:-10px 0;opacity:.45"></i><i style="left:4px;top:5px;width:60px;height:1px;background:repeating-linear-gradient(90deg,#333 0px 4px,transparent 4px 5px,#333 5px 11px,transparent 11px 13px,#333 13px 16px,transparent 16px 17px);background-position:-16px 0;opacity:.45"></i><i style="left:78px;top:3px;width:8px;height:8px;background:#4a6ab8;border-radius:1px;"></i><i style="left:4px;top:18px;width:20px;height:1px;background:repeating-linear-gradient(90deg,#9a9a9a 0px 5px,transparent 5px 7px,#9a9a9a 7px 12px,transparent 12px 14px);background-position:-4px 0;opacity:.45"></i><i style="left:4px;top:22px;width:82px;height:32px;background:#ffffff;box-sizing:border-box;border:1px solid #c8c8c8;"></i><i style="left:5px;top:25px;width:80px;height:1px;background:#e8e8e8;"></i><i style="left:5px;top:28px;width:80px;height:2px;background:#1a78d8;"></i><i style="left:27px;top:23px;width:1px;height:31px;background:#ececec;"></i><i style="left:72px;top:23px;width:1px;height:31px;background:#ececec;"></i><i style="left:50px;top:58px;width:35px;height:4px;background:#fff;box-sizing:border-box;border:1px solid #c0c0c0;"></i><i style="left:0px;top:66px;width:90px;height:7px;background:#f0f0f0;"></i><i style="left:46px;top:67px;width:10px;height:4px;background:#fff;box-sizing:border-box;border:1px solid #c0c0c0;"></i><i style="left:60px;top:67px;width:10px;height:4px;background:#fff;box-sizing:border-box;border:1px solid #4a8ad8;"></i><i style="left:74px;top:67px;width:10px;height:4px;background:#fff;box-sizing:border-box;border:1px solid #c0c0c0;"></i></div></div>
<div class="lab" style="left:175px;top:780px"><span style="letter-spacing:-0.1px">Screenshot</span><br><span style="letter-spacing:-0.7px">2025</span><span style="letter-spacing:0.6px">-</span><span style="letter-spacing:-0.7px">05</span><span style="letter-spacing:0.6px">-</span><span style="letter-spacing:-0.7px">20</span><br><span style="letter-spacing:-0.7px">232721</span></div>
<div class="th" style="left:288px;top:702px;width:90px;height:73px"><div class="tf"><i style="left:0px;top:0px;width:90px;height:73px;background:#ffffff;"></i><i style="left:0px;top:0px;width:90px;height:3px;background:#ffffff;"></i><i style="left:3px;top:1px;width:16px;height:1px;background:repeating-linear-gradient(90deg,#999 0px 6px,transparent 6px 8px,#999 8px 10px,transparent 10px 11px,#999 11px 15px,transparent 15px 16px);background-position:-10px 0;opacity:.45"></i><i style="left:0px;top:4px;width:25px;height:62px;background:linear-gradient(#f4f7fc,#d8e2f0);"></i><i style="left:6px;top:13px;width:12px;height:10px;background:#3060b0;border-radius:1px;"></i><i style="left:11px;top:10px;width:7px;height:7px;background:#40b040;border-radius:4px;"></i><i style="left:7px;top:24px;width:10px;height:3px;background:#9a9aa8;"></i><i style="left:29px;top:8px;width:22px;height:1px;background:repeating-linear-gradient(90deg,#4a7ac8 0px 6px,transparent 6px 8px,#4a7ac8 8px 10px,transparent 10px 11px,#4a7ac8 11px 15px,transparent 15px 16px);background-position:-8px 0;opacity:.45"></i><i style="left:29px;top:14px;width:53px;height:1px;background:repeating-linear-gradient(90deg,#888 0px 4px,transparent 4px 5px,#888 5px 11px,transparent 11px 13px,#888 13px 16px,transparent 16px 17px);background-position:-16px 0;opacity:.45"></i><i style="left:29px;top:16px;width:48px;height:1px;background:repeating-linear-gradient(90deg,#888 0px 6px,transparent 6px 8px,#888 8px 10px,transparent 10px 11px,#888 11px 15px,transparent 15px 16px);background-position:-7px 0;opacity:.45"></i><i style="left:29px;top:18px;width:32px;height:1px;background:repeating-linear-gradient(90deg,#888 0px 6px,transparent 6px 8px,#888 8px 10px,transparent 10px 11px,#888 11px 15px,transparent 15px 16px);background-position:-11px 0;opacity:.45"></i><i style="left:29px;top:27px;width:18px;height:1px;background:repeating-linear-gradient(90deg,#999 0px 5px,transparent 5px 7px,#999 7px 12px,transparent 12px 14px);background-position:-4px 0;opacity:.45"></i><i style="left:29px;top:30px;width:19px;height:1px;background:repeating-linear-gradient(90deg,#999 0px 5px,transparent 5px 7px,#999 7px 12px,transparent 12px 14px);background-position:-0px 0;opacity:.45"></i><i style="left:41px;top:36px;width:40px;height:11px;background:#ffffff;box-sizing:border-box;border:1px solid #b8b8b8;"></i><i style="left:43px;top:37px;width:16px;height:1px;background:repeating-linear-gradient(90deg,#666 0px 3px,transparent 3px 4px,#666 4px 9px,transparent 9px 11px,#666 11px 18px,transparent 18px 19px);background-position:-2px 0;opacity:.45"></i><i style="left:29px;top:54px;width:49px;height:1px;background:repeating-linear-gradient(90deg,#888 0px 3px,transparent 3px 4px,#888 4px 9px,transparent 9px 11px,#888 11px 18px,transparent 18px 19px);background-position:-11px 0;opacity:.45"></i><i style="left:29px;top:56px;width:45px;height:1px;background:repeating-linear-gradient(90deg,#888 0px 3px,transparent 3px 4px,#888 4px 9px,transparent 9px 11px,#888 11px 18px,transparent 18px 19px);background-position:-3px 0;opacity:.45"></i><i style="left:29px;top:58px;width:56px;height:1px;background:repeating-linear-gradient(90deg,#888 0px 6px,transparent 6px 8px,#888 8px 10px,transparent 10px 11px,#888 11px 15px,transparent 15px 16px);background-position:-12px 0;opacity:.45"></i><i style="left:29px;top:60px;width:54px;height:1px;background:repeating-linear-gradient(90deg,#888 0px 5px,transparent 5px 7px,#888 7px 12px,transparent 12px 14px);background-position:-4px 0;opacity:.45"></i><i style="left:0px;top:66px;width:90px;height:7px;background:#f0f0f0;"></i><i style="left:50px;top:68px;width:10px;height:4px;background:#fff;box-sizing:border-box;border:1px solid #c0c0c0;"></i><i style="left:63px;top:68px;width:10px;height:4px;background:#fff;box-sizing:border-box;border:1px solid #4a8ad8;"></i><i style="left:76px;top:68px;width:10px;height:4px;background:#fff;box-sizing:border-box;border:1px solid #c0c0c0;"></i></div></div>
<div class="lab" style="left:283px;top:780px"><span style="letter-spacing:-0.1px">Screenshot</span><br><span style="letter-spacing:-0.7px">2025</span><span style="letter-spacing:0.6px">-</span><span style="letter-spacing:-0.7px">05</span><span style="letter-spacing:0.6px">-</span><span style="letter-spacing:-0.7px">20</span><br><span style="letter-spacing:-0.7px">232808</span></div>
<div class="th" style="left:396px;top:714px;width:90px;height:61px"><div class="tf"><i style="left:0px;top:0px;width:90px;height:61px;background:#1c0a5a;"></i><i style="left:18px;top:8px;width:55px;height:40px;background:#24107a;box-sizing:border-box;border:1px solid #a8a8d8;"></i><i style="left:18px;top:8px;width:55px;height:2px;background:#d8d8e8;"></i><i style="left:69px;top:8px;width:3px;height:2px;background:#e04040;"></i><i style="left:41px;top:16px;width:4px;height:4px;background:#f0f0f8;"></i><i style="left:45px;top:17px;width:10px;height:1px;background:repeating-linear-gradient(90deg,#c8c8e8 0px 3px,transparent 3px 4px,#c8c8e8 4px 9px,transparent 9px 11px,#c8c8e8 11px 18px,transparent 18px 19px);background-position:-8px 0;opacity:.45"></i><i style="left:45px;top:26px;width:24px;height:2px;background:#3a78d8;"></i><i style="left:45px;top:29px;width:24px;height:2px;background:#e0e0f0;"></i><i style="left:45px;top:32px;width:24px;height:2px;background:#e0e0f0;"></i><i style="left:24px;top:26px;width:13px;height:1px;background:repeating-linear-gradient(90deg,#8888c0 0px 3px,transparent 3px 4px,#8888c0 4px 9px,transparent 9px 11px,#8888c0 11px 18px,transparent 18px 19px);background-position:-8px 0;opacity:.45"></i><i style="left:24px;top:29px;width:10px;height:1px;background:repeating-linear-gradient(90deg,#8888c0 0px 4px,transparent 4px 5px,#8888c0 5px 11px,transparent 11px 13px,#8888c0 13px 16px,transparent 16px 17px);background-position:-10px 0;opacity:.45"></i><i style="left:24px;top:32px;width:14px;height:1px;background:repeating-linear-gradient(90deg,#8888c0 0px 4px,transparent 4px 5px,#8888c0 5px 11px,transparent 11px 13px,#8888c0 13px 16px,transparent 16px 17px);background-position:-10px 0;opacity:.45"></i><i style="left:22px;top:42px;width:15px;height:1px;background:repeating-linear-gradient(90deg,#8a8ac0 0px 5px,transparent 5px 7px,#8a8ac0 7px 12px,transparent 12px 14px);background-position:-7px 0;opacity:.45"></i><i style="left:22px;top:44px;width:15px;height:1px;background:repeating-linear-gradient(90deg,#8a8ac0 0px 6px,transparent 6px 8px,#8a8ac0 8px 10px,transparent 10px 11px,#8a8ac0 11px 15px,transparent 15px 16px);background-position:-14px 0;opacity:.45"></i><i style="left:0px;top:60px;width:90px;height:1px;background:#d0d0e0;"></i></div></div>
<div class="lab" style="left:391px;top:780px"><span style="letter-spacing:-0.1px">Screenshot</span><br><span style="letter-spacing:-0.7px">2025</span><span style="letter-spacing:0.6px">-</span><span style="letter-spacing:-0.7px">05</span><span style="letter-spacing:0.6px">-</span><span style="letter-spacing:-0.7px">21</span><br><span style="letter-spacing:-0.7px">073232</span></div>
<div class="th" style="left:504px;top:708px;width:90px;height:67px"><div class="tf"><i style="left:0px;top:0px;width:90px;height:67px;background:#1c0a5a;"></i><i style="left:18px;top:9px;width:55px;height:44px;background:#24107a;box-sizing:border-box;border:1px solid #a8a8d8;"></i><i style="left:18px;top:9px;width:55px;height:2px;background:#d8d8e8;"></i><i style="left:69px;top:9px;width:3px;height:2px;background:#e04040;"></i><i style="left:41px;top:18px;width:4px;height:4px;background:#f0f0f8;"></i><i style="left:45px;top:19px;width:10px;height:1px;background:repeating-linear-gradient(90deg,#c8c8e8 0px 6px,transparent 6px 8px,#c8c8e8 8px 10px,transparent 10px 11px,#c8c8e8 11px 15px,transparent 15px 16px);background-position:-2px 0;opacity:.45"></i><i style="left:42px;top:33px;width:8px;height:2px;background:#8888c0;"></i><i style="left:22px;top:47px;width:15px;height:1px;background:repeating-linear-gradient(90deg,#8a8ac0 0px 5px,transparent 5px 7px,#8a8ac0 7px 12px,transparent 12px 14px);background-position:-7px 0;opacity:.45"></i><i style="left:22px;top:49px;width:15px;height:1px;background:repeating-linear-gradient(90deg,#8a8ac0 0px 6px,transparent 6px 8px,#8a8ac0 8px 10px,transparent 10px 11px,#8a8ac0 11px 15px,transparent 15px 16px);background-position:-14px 0;opacity:.45"></i><i style="left:0px;top:66px;width:90px;height:1px;background:#d0d0e0;"></i></div></div>
<div class="lab" style="left:499px;top:780px"><span style="letter-spacing:-0.1px">Screenshot</span><br><span style="letter-spacing:-0.7px">2025</span><span style="letter-spacing:0.6px">-</span><span style="letter-spacing:-0.7px">05</span><span style="letter-spacing:0.6px">-</span><span style="letter-spacing:-0.7px">21</span><br><span style="letter-spacing:-0.7px">073259</span></div>
<div class="th" style="left:612px;top:708px;width:90px;height:67px"><div class="tf"><i style="left:0px;top:0px;width:90px;height:67px;background:#1e64b4;"></i><i style="left:12px;top:5px;width:30px;height:1px;background:repeating-linear-gradient(90deg,#c8dcf4 0px 5px,transparent 5px 7px,#c8dcf4 7px 12px,transparent 12px 14px);background-position:-1px 0;opacity:.45"></i><i style="left:11px;top:10px;width:26px;height:8px;box-sizing:border-box;border:1px solid #9ac0f0;"></i><i style="left:12px;top:11px;width:7px;height:7px;background:#6aa4e4;"></i><i style="left:21px;top:12px;width:8px;height:1px;background:repeating-linear-gradient(90deg,#b8d4f0 0px 5px,transparent 5px 7px,#b8d4f0 7px 12px,transparent 12px 14px);background-position:-2px 0;opacity:.45"></i><i style="left:21px;top:14px;width:8px;height:1px;background:repeating-linear-gradient(90deg,#b8d4f0 0px 4px,transparent 4px 5px,#b8d4f0 5px 11px,transparent 11px 13px,#b8d4f0 13px 16px,transparent 16px 17px);background-position:-2px 0;opacity:.45"></i><i style="left:12px;top:20px;width:7px;height:7px;background:#6aa4e4;"></i><i style="left:21px;top:21px;width:10px;height:1px;background:repeating-linear-gradient(90deg,#b8d4f0 0px 3px,transparent 3px 4px,#b8d4f0 4px 9px,transparent 9px 11px,#b8d4f0 11px 18px,transparent 18px 19px);background-position:-8px 0;opacity:.45"></i><i style="left:21px;top:23px;width:7px;height:1px;background:repeating-linear-gradient(90deg,#b8d4f0 0px 4px,transparent 4px 5px,#b8d4f0 5px 11px,transparent 11px 13px,#b8d4f0 13px 16px,transparent 16px 17px);background-position:-10px 0;opacity:.45"></i><i style="left:12px;top:29px;width:7px;height:7px;background:#6aa4e4;"></i><i style="left:21px;top:30px;width:10px;height:1px;background:repeating-linear-gradient(90deg,#b8d4f0 0px 5px,transparent 5px 7px,#b8d4f0 7px 12px,transparent 12px 14px);background-position:-7px 0;opacity:.45"></i><i style="left:21px;top:32px;width:11px;height:1px;background:repeating-linear-gradient(90deg,#b8d4f0 0px 6px,transparent 6px 8px,#b8d4f0 8px 10px,transparent 10px 11px,#b8d4f0 11px 15px,transparent 15px 16px);background-position:-14px 0;opacity:.45"></i><i style="left:43px;top:12px;width:7px;height:7px;background:#6aa4e4;"></i><i style="left:51px;top:12px;width:6px;height:1px;background:repeating-linear-gradient(90deg,#b8d4f0 0px 6px,transparent 6px 8px,#b8d4f0 8px 10px,transparent 10px 11px,#b8d4f0 11px 15px,transparent 15px 16px);background-position:-7px 0;opacity:.45"></i><i style="left:40px;top:52px;width:3px;height:1px;background:#9ac0f0;"></i></div></div>
<div class="lab" style="left:607px;top:780px"><span style="letter-spacing:-0.1px">Screenshot</span><br><span style="letter-spacing:-0.7px">2025</span><span style="letter-spacing:0.6px">-</span><span style="letter-spacing:-0.7px">05</span><span style="letter-spacing:0.6px">-</span><span style="letter-spacing:-0.7px">21</span><br><span style="letter-spacing:-0.7px">073356</span></div>
<div class="th" style="left:720px;top:710px;width:90px;height:65px"><div class="tf"><i style="left:0px;top:0px;width:90px;height:65px;background:#1e64b4;"></i><i style="left:12px;top:3px;width:30px;height:1px;background:repeating-linear-gradient(90deg,#c8dcf4 0px 4px,transparent 4px 5px,#c8dcf4 5px 11px,transparent 11px 13px,#c8dcf4 13px 16px,transparent 16px 17px);background-position:-1px 0;opacity:.45"></i><i style="left:14px;top:10px;width:7px;height:7px;background:#6aa4e4;"></i><i style="left:23px;top:11px;width:11px;height:1px;background:repeating-linear-gradient(90deg,#b8d4f0 0px 5px,transparent 5px 7px,#b8d4f0 7px 12px,transparent 12px 14px);background-position:-2px 0;opacity:.45"></i><i style="left:23px;top:13px;width:10px;height:1px;background:repeating-linear-gradient(90deg,#b8d4f0 0px 4px,transparent 4px 5px,#b8d4f0 5px 11px,transparent 11px 13px,#b8d4f0 13px 16px,transparent 16px 17px);background-position:-2px 0;opacity:.45"></i><i style="left:14px;top:20px;width:7px;height:7px;background:#6aa4e4;"></i><i style="left:23px;top:21px;width:13px;height:1px;background:repeating-linear-gradient(90deg,#b8d4f0 0px 5px,transparent 5px 7px,#b8d4f0 7px 12px,transparent 12px 14px);background-position:-7px 0;opacity:.45"></i><i style="left:23px;top:23px;width:13px;height:1px;background:repeating-linear-gradient(90deg,#b8d4f0 0px 6px,transparent 6px 8px,#b8d4f0 8px 10px,transparent 10px 11px,#b8d4f0 11px 15px,transparent 15px 16px);background-position:-5px 0;opacity:.45"></i><i style="left:14px;top:30px;width:7px;height:7px;background:#6aa4e4;"></i><i style="left:23px;top:31px;width:9px;height:1px;background:repeating-linear-gradient(90deg,#b8d4f0 0px 6px,transparent 6px 8px,#b8d4f0 8px 10px,transparent 10px 11px,#b8d4f0 11px 15px,transparent 15px 16px);background-position:-8px 0;opacity:.45"></i><i style="left:23px;top:33px;width:15px;height:1px;background:repeating-linear-gradient(90deg,#b8d4f0 0px 3px,transparent 3px 4px,#b8d4f0 4px 9px,transparent 9px 11px,#b8d4f0 11px 18px,transparent 18px 19px);background-position:-2px 0;opacity:.45"></i><i style="left:47px;top:10px;width:7px;height:7px;background:#6aa4e4;"></i><i style="left:56px;top:11px;width:13px;height:1px;background:repeating-linear-gradient(90deg,#b8d4f0 0px 3px,transparent 3px 4px,#b8d4f0 4px 9px,transparent 9px 11px,#b8d4f0 11px 18px,transparent 18px 19px);background-position:-8px 0;opacity:.45"></i><i style="left:56px;top:13px;width:10px;height:1px;background:repeating-linear-gradient(90deg,#b8d4f0 0px 4px,transparent 4px 5px,#b8d4f0 5px 11px,transparent 11px 13px,#b8d4f0 13px 16px,transparent 16px 17px);background-position:-10px 0;opacity:.45"></i><i style="left:47px;top:20px;width:7px;height:7px;background:#6aa4e4;"></i><i style="left:56px;top:21px;width:13px;height:1px;background:repeating-linear-gradient(90deg,#b8d4f0 0px 3px,transparent 3px 4px,#b8d4f0 4px 9px,transparent 9px 11px,#b8d4f0 11px 18px,transparent 18px 19px);background-position:-4px 0;opacity:.45"></i><i style="left:56px;top:23px;width:12px;height:1px;background:repeating-linear-gradient(90deg,#b8d4f0 0px 3px,transparent 3px 4px,#b8d4f0 4px 9px,transparent 9px 11px,#b8d4f0 11px 18px,transparent 18px 19px);background-position:-15px 0;opacity:.45"></i><i style="left:47px;top:30px;width:7px;height:7px;background:#6aa4e4;"></i><i style="left:56px;top:31px;width:17px;height:1px;background:repeating-linear-gradient(90deg,#b8d4f0 0px 4px,transparent 4px 5px,#b8d4f0 5px 11px,transparent 11px 13px,#b8d4f0 13px 16px,transparent 16px 17px);background-position:-16px 0;opacity:.45"></i><i style="left:56px;top:33px;width:15px;height:1px;background:repeating-linear-gradient(90deg,#b8d4f0 0px 6px,transparent 6px 8px,#b8d4f0 8px 10px,transparent 10px 11px,#b8d4f0 11px 15px,transparent 15px 16px);background-position:-7px 0;opacity:.45"></i><i style="left:13px;top:9px;width:30px;height:9px;box-sizing:border-box;border:1px solid #9ac0f0;"></i><i style="left:40px;top:55px;width:2px;height:1px;background:#9ac0f0;"></i></div></div>
<div class="lab" style="left:715px;top:780px"><span style="letter-spacing:-0.1px">Screenshot</span><br><span style="letter-spacing:-0.7px">2025</span><span style="letter-spacing:0.6px">-</span><span style="letter-spacing:-0.7px">05</span><span style="letter-spacing:0.6px">-</span><span style="letter-spacing:-0.7px">21</span><br><span style="letter-spacing:-0.7px">073551</span></div>
<div class="th" style="left:828px;top:708px;width:90px;height:67px"><div class="tf"><i style="left:0px;top:0px;width:90px;height:67px;background:#1e64b4;"></i><i style="left:10px;top:5px;width:22px;height:1px;background:repeating-linear-gradient(90deg,#c8dcf4 0px 3px,transparent 3px 4px,#c8dcf4 4px 9px,transparent 9px 11px,#c8dcf4 11px 18px,transparent 18px 19px);background-position:-2px 0;opacity:.45"></i><i style="left:12px;top:10px;width:9px;height:1px;background:repeating-linear-gradient(90deg,#a8c8ec 0px 5px,transparent 5px 7px,#a8c8ec 7px 12px,transparent 12px 14px);background-position:-2px 0;opacity:.45"></i><i style="left:12px;top:13px;width:28px;height:9px;box-sizing:border-box;border:1px solid #9ac0f0;"></i><i style="left:13px;top:14px;width:7px;height:7px;background:#6aa4e4;"></i><i style="left:22px;top:15px;width:9px;height:1px;background:repeating-linear-gradient(90deg,#b8d4f0 0px 5px,transparent 5px 7px,#b8d4f0 7px 12px,transparent 12px 14px);background-position:-7px 0;opacity:.45"></i></div></div>
<div class="lab" style="left:823px;top:780px"><span style="letter-spacing:-0.1px">Screenshot</span><br><span style="letter-spacing:-0.7px">2025</span><span style="letter-spacing:0.6px">-</span><span style="letter-spacing:-0.7px">05</span><span style="letter-spacing:0.6px">-</span><span style="letter-spacing:-0.7px">21</span><br><span style="letter-spacing:-0.7px">073608</span></div>
<div class="th" style="left:936px;top:708px;width:90px;height:67px"><div class="tf"><i style="left:0px;top:0px;width:90px;height:67px;background:#1e64b4;"></i><i style="left:12px;top:3px;width:30px;height:1px;background:repeating-linear-gradient(90deg,#c8dcf4 0px 4px,transparent 4px 5px,#c8dcf4 5px 11px,transparent 11px 13px,#c8dcf4 13px 16px,transparent 16px 17px);background-position:-1px 0;opacity:.45"></i><i style="left:14px;top:10px;width:7px;height:7px;background:#6aa4e4;"></i><i style="left:23px;top:11px;width:11px;height:1px;background:repeating-linear-gradient(90deg,#b8d4f0 0px 5px,transparent 5px 7px,#b8d4f0 7px 12px,transparent 12px 14px);background-position:-2px 0;opacity:.45"></i><i style="left:23px;top:13px;width:10px;height:1px;background:repeating-linear-gradient(90deg,#b8d4f0 0px 4px,transparent 4px 5px,#b8d4f0 5px 11px,transparent 11px 13px,#b8d4f0 13px 16px,transparent 16px 17px);background-position:-2px 0;opacity:.45"></i><i style="left:14px;top:20px;width:7px;height:7px;background:#6aa4e4;"></i><i style="left:23px;top:21px;width:13px;height:1px;background:repeating-linear-gradient(90deg,#b8d4f0 0px 5px,transparent 5px 7px,#b8d4f0 7px 12px,transparent 12px 14px);background-position:-7px 0;opacity:.45"></i><i style="left:23px;top:23px;width:13px;height:1px;background:repeating-linear-gradient(90deg,#b8d4f0 0px 6px,transparent 6px 8px,#b8d4f0 8px 10px,transparent 10px 11px,#b8d4f0 11px 15px,transparent 15px 16px);background-position:-5px 0;opacity:.45"></i><i style="left:14px;top:30px;width:7px;height:7px;background:#6aa4e4;"></i><i style="left:23px;top:31px;width:9px;height:1px;background:repeating-linear-gradient(90deg,#b8d4f0 0px 6px,transparent 6px 8px,#b8d4f0 8px 10px,transparent 10px 11px,#b8d4f0 11px 15px,transparent 15px 16px);background-position:-8px 0;opacity:.45"></i><i style="left:23px;top:33px;width:15px;height:1px;background:repeating-linear-gradient(90deg,#b8d4f0 0px 3px,transparent 3px 4px,#b8d4f0 4px 9px,transparent 9px 11px,#b8d4f0 11px 18px,transparent 18px 19px);background-position:-2px 0;opacity:.45"></i><i style="left:47px;top:10px;width:7px;height:7px;background:#6aa4e4;"></i><i style="left:56px;top:11px;width:13px;height:1px;background:repeating-linear-gradient(90deg,#b8d4f0 0px 3px,transparent 3px 4px,#b8d4f0 4px 9px,transparent 9px 11px,#b8d4f0 11px 18px,transparent 18px 19px);background-position:-8px 0;opacity:.45"></i><i style="left:56px;top:13px;width:10px;height:1px;background:repeating-linear-gradient(90deg,#b8d4f0 0px 4px,transparent 4px 5px,#b8d4f0 5px 11px,transparent 11px 13px,#b8d4f0 13px 16px,transparent 16px 17px);background-position:-10px 0;opacity:.45"></i><i style="left:47px;top:20px;width:7px;height:7px;background:#6aa4e4;"></i><i style="left:56px;top:21px;width:13px;height:1px;background:repeating-linear-gradient(90deg,#b8d4f0 0px 3px,transparent 3px 4px,#b8d4f0 4px 9px,transparent 9px 11px,#b8d4f0 11px 18px,transparent 18px 19px);background-position:-4px 0;opacity:.45"></i><i style="left:56px;top:23px;width:12px;height:1px;background:repeating-linear-gradient(90deg,#b8d4f0 0px 3px,transparent 3px 4px,#b8d4f0 4px 9px,transparent 9px 11px,#b8d4f0 11px 18px,transparent 18px 19px);background-position:-15px 0;opacity:.45"></i><i style="left:47px;top:30px;width:7px;height:7px;background:#6aa4e4;"></i><i style="left:56px;top:31px;width:17px;height:1px;background:repeating-linear-gradient(90deg,#b8d4f0 0px 4px,transparent 4px 5px,#b8d4f0 5px 11px,transparent 11px 13px,#b8d4f0 13px 16px,transparent 16px 17px);background-position:-16px 0;opacity:.45"></i><i style="left:56px;top:33px;width:15px;height:1px;background:repeating-linear-gradient(90deg,#b8d4f0 0px 6px,transparent 6px 8px,#b8d4f0 8px 10px,transparent 10px 11px,#b8d4f0 11px 15px,transparent 15px 16px);background-position:-7px 0;opacity:.45"></i><i style="left:13px;top:9px;width:30px;height:9px;box-sizing:border-box;border:1px solid #9ac0f0;"></i><i style="left:40px;top:56px;width:2px;height:1px;background:#9ac0f0;"></i></div></div>
<div class="lab" style="left:931px;top:780px"><span style="letter-spacing:-0.1px">Screenshot</span><br><span style="letter-spacing:-0.7px">2025</span><span style="letter-spacing:0.6px">-</span><span style="letter-spacing:-0.7px">05</span><span style="letter-spacing:0.6px">-</span><span style="letter-spacing:-0.7px">21</span><br><span style="letter-spacing:-0.7px">073637</span></div>
<div class="th" style="left:1044px;top:737px;width:90px;height:38px"><div class="tf"><i style="left:0px;top:0px;width:90px;height:38px;background:#ffffff;"></i><i style="left:4px;top:3px;width:43px;height:1px;background:repeating-linear-gradient(90deg,#c8c8c8 0px 3px,transparent 3px 4px,#c8c8c8 4px 9px,transparent 9px 11px,#c8c8c8 11px 18px,transparent 18px 19px);background-position:-16px 0;opacity:.45"></i><i style="left:2px;top:7px;width:14px;height:1px;background:repeating-linear-gradient(90deg,#3a7ad0 0px 4px,transparent 4px 5px,#3a7ad0 5px 11px,transparent 11px 13px,#3a7ad0 13px 16px,transparent 16px 17px);background-position:-15px 0;opacity:.45"></i><i style="left:2px;top:12px;width:2px;height:2px;background:#30a0a0;"></i><i style="left:5px;top:12px;width:8px;height:1px;background:repeating-linear-gradient(90deg,#8ab87a 0px 3px,transparent 3px 4px,#8ab87a 4px 9px,transparent 9px 11px,#8ab87a 11px 18px,transparent 18px 19px);background-position:-16px 0;opacity:.45"></i><i style="left:2px;top:16px;width:2px;height:2px;background:#3aa03a;"></i><i style="left:5px;top:16px;width:12px;height:1px;background:repeating-linear-gradient(90deg,#8ab87a 0px 5px,transparent 5px 7px,#8ab87a 7px 12px,transparent 12px 14px);background-position:-12px 0;opacity:.45"></i><i style="left:2px;top:20px;width:2px;height:2px;background:#2a7ad0;"></i><i style="left:5px;top:20px;width:11px;height:1px;background:repeating-linear-gradient(90deg,#8ab87a 0px 4px,transparent 4px 5px,#8ab87a 5px 11px,transparent 11px 13px,#8ab87a 13px 16px,transparent 16px 17px);background-position:-5px 0;opacity:.45"></i><i style="left:2px;top:24px;width:2px;height:2px;background:#3aa03a;"></i><i style="left:5px;top:24px;width:8px;height:1px;background:repeating-linear-gradient(90deg,#8ab87a 0px 5px,transparent 5px 7px,#8ab87a 7px 12px,transparent 12px 14px);background-position:-13px 0;opacity:.45"></i><i style="left:2px;top:28px;width:2px;height:2px;background:#2a7ad0;"></i><i style="left:5px;top:28px;width:9px;height:1px;background:repeating-linear-gradient(90deg,#8ab87a 0px 4px,transparent 4px 5px,#8ab87a 5px 11px,transparent 11px 13px,#8ab87a 13px 16px,transparent 16px 17px);background-position:-7px 0;opacity:.45"></i><i style="left:2px;top:32px;width:2px;height:2px;background:#3aa03a;"></i><i style="left:5px;top:32px;width:11px;height:1px;background:repeating-linear-gradient(90deg,#8ab87a 0px 6px,transparent 6px 8px,#8ab87a 8px 10px,transparent 10px 11px,#8ab87a 11px 15px,transparent 15px 16px);background-position:-13px 0;opacity:.45"></i><i style="left:18px;top:12px;width:2px;height:2px;background:#e0a030;"></i><i style="left:21px;top:12px;width:7px;height:1px;background:repeating-linear-gradient(90deg,#8ab87a 0px 5px,transparent 5px 7px,#8ab87a 7px 12px,transparent 12px 14px);background-position:-2px 0;opacity:.45"></i><i style="left:18px;top:16px;width:2px;height:2px;background:#3aa03a;"></i><i style="left:21px;top:16px;width:7px;height:1px;background:repeating-linear-gradient(90deg,#8ab87a 0px 5px,transparent 5px 7px,#8ab87a 7px 12px,transparent 12px 14px);background-position:-2px 0;opacity:.45"></i><i style="left:18px;top:20px;width:2px;height:2px;background:#2a7ad0;"></i><i style="left:21px;top:20px;width:6px;height:1px;background:repeating-linear-gradient(90deg,#8ab87a 0px 4px,transparent 4px 5px,#8ab87a 5px 11px,transparent 11px 13px,#8ab87a 13px 16px,transparent 16px 17px);background-position:-6px 0;opacity:.45"></i><i style="left:18px;top:24px;width:2px;height:2px;background:#2a7ad0;"></i><i style="left:21px;top:24px;width:7px;height:1px;background:repeating-linear-gradient(90deg,#8ab87a 0px 6px,transparent 6px 8px,#8ab87a 8px 10px,transparent 10px 11px,#8ab87a 11px 15px,transparent 15px 16px);background-position:-9px 0;opacity:.45"></i><i style="left:18px;top:28px;width:2px;height:2px;background:#e0a030;"></i><i style="left:21px;top:28px;width:7px;height:1px;background:repeating-linear-gradient(90deg,#8ab87a 0px 6px,transparent 6px 8px,#8ab87a 8px 10px,transparent 10px 11px,#8ab87a 11px 15px,transparent 15px 16px);background-position:-5px 0;opacity:.45"></i><i style="left:18px;top:32px;width:2px;height:2px;background:#2a7ad0;"></i><i style="left:21px;top:32px;width:9px;height:1px;background:repeating-linear-gradient(90deg,#8ab87a 0px 3px,transparent 3px 4px,#8ab87a 4px 9px,transparent 9px 11px,#8ab87a 11px 18px,transparent 18px 19px);background-position:-0px 0;opacity:.45"></i><i style="left:34px;top:12px;width:2px;height:2px;background:#e0a030;"></i><i style="left:37px;top:12px;width:9px;height:1px;background:repeating-linear-gradient(90deg,#8ab87a 0px 6px,transparent 6px 8px,#8ab87a 8px 10px,transparent 10px 11px,#8ab87a 11px 15px,transparent 15px 16px);background-position:-4px 0;opacity:.45"></i><i style="left:34px;top:16px;width:2px;height:2px;background:#e0a030;"></i><i style="left:37px;top:16px;width:6px;height:1px;background:repeating-linear-gradient(90deg,#8ab87a 0px 3px,transparent 3px 4px,#8ab87a 4px 9px,transparent 9px 11px,#8ab87a 11px 18px,transparent 18px 19px);background-position:-9px 0;opacity:.45"></i><i style="left:34px;top:20px;width:2px;height:2px;background:#30a0a0;"></i><i style="left:37px;top:20px;width:10px;height:1px;background:repeating-linear-gradient(90deg,#8ab87a 0px 4px,transparent 4px 5px,#8ab87a 5px 11px,transparent 11px 13px,#8ab87a 13px 16px,transparent 16px 17px);background-position:-10px 0;opacity:.45"></i><i style="left:34px;top:24px;width:2px;height:2px;background:#3aa03a;"></i><i style="left:37px;top:24px;width:8px;height:1px;background:repeating-linear-gradient(90deg,#8ab87a 0px 3px,transparent 3px 4px,#8ab87a 4px 9px,transparent 9px 11px,#8ab87a 11px 18px,transparent 18px 19px);background-position:-9px 0;opacity:.45"></i><i style="left:34px;top:28px;width:2px;height:2px;background:#7a5ac0;"></i><i style="left:37px;top:28px;width:11px;height:1px;background:repeating-linear-gradient(90deg,#8ab87a 0px 3px,transparent 3px 4px,#8ab87a 4px 9px,transparent 9px 11px,#8ab87a 11px 18px,transparent 18px 19px);background-position:-5px 0;opacity:.45"></i><i style="left:34px;top:32px;width:2px;height:2px;background:#7a5ac0;"></i><i style="left:37px;top:32px;width:9px;height:1px;background:repeating-linear-gradient(90deg,#8ab87a 0px 6px,transparent 6px 8px,#8ab87a 8px 10px,transparent 10px 11px,#8ab87a 11px 15px,transparent 15px 16px);background-position:-1px 0;opacity:.45"></i><i style="left:50px;top:12px;width:2px;height:2px;background:#e0a030;"></i><i style="left:53px;top:12px;width:6px;height:1px;background:repeating-linear-gradient(90deg,#8ab87a 0px 3px,transparent 3px 4px,#8ab87a 4px 9px,transparent 9px 11px,#8ab87a 11px 18px,transparent 18px 19px);background-position:-12px 0;opacity:.45"></i><i style="left:50px;top:16px;width:2px;height:2px;background:#3aa03a;"></i><i style="left:53px;top:16px;width:10px;height:1px;background:repeating-linear-gradient(90deg,#8ab87a 0px 5px,transparent 5px 7px,#8ab87a 7px 12px,transparent 12px 14px);background-position:-5px 0;opacity:.45"></i><i style="left:50px;top:20px;width:2px;height:2px;background:#7a5ac0;"></i><i style="left:53px;top:20px;width:10px;height:1px;background:repeating-linear-gradient(90deg,#8ab87a 0px 4px,transparent 4px 5px,#8ab87a 5px 11px,transparent 11px 13px,#8ab87a 13px 16px,transparent 16px 17px);background-position:-14px 0;opacity:.45"></i><i style="left:50px;top:24px;width:2px;height:2px;background:#3aa03a;"></i><i style="left:53px;top:24px;width:11px;height:1px;background:repeating-linear-gradient(90deg,#8ab87a 0px 6px,transparent 6px 8px,#8ab87a 8px 10px,transparent 10px 11px,#8ab87a 11px 15px,transparent 15px 16px);background-position:-6px 0;opacity:.45"></i><i style="left:50px;top:28px;width:2px;height:2px;background:#3aa03a;"></i><i style="left:53px;top:28px;width:12px;height:1px;background:repeating-linear-gradient(90deg,#8ab87a 0px 6px,transparent 6px 8px,#8ab87a 8px 10px,transparent 10px 11px,#8ab87a 11px 15px,transparent 15px 16px);background-position:-14px 0;opacity:.45"></i><i style="left:50px;top:32px;width:2px;height:2px;background:#e0a030;"></i><i style="left:53px;top:32px;width:10px;height:1px;background:repeating-linear-gradient(90deg,#8ab87a 0px 3px,transparent 3px 4px,#8ab87a 4px 9px,transparent 9px 11px,#8ab87a 11px 18px,transparent 18px 19px);background-position:-16px 0;opacity:.45"></i><i style="left:66px;top:12px;width:2px;height:2px;background:#e0a030;"></i><i style="left:69px;top:12px;width:12px;height:1px;background:repeating-linear-gradient(90deg,#8ab87a 0px 5px,transparent 5px 7px,#8ab87a 7px 12px,transparent 12px 14px);background-position:-1px 0;opacity:.45"></i><i style="left:66px;top:16px;width:2px;height:2px;background:#30a0a0;"></i><i style="left:69px;top:16px;width:11px;height:1px;background:repeating-linear-gradient(90deg,#8ab87a 0px 3px,transparent 3px 4px,#8ab87a 4px 9px,transparent 9px 11px,#8ab87a 11px 18px,transparent 18px 19px);background-position:-9px 0;opacity:.45"></i><i style="left:66px;top:20px;width:2px;height:2px;background:#3aa03a;"></i><i style="left:69px;top:20px;width:9px;height:1px;background:repeating-linear-gradient(90deg,#8ab87a 0px 4px,transparent 4px 5px,#8ab87a 5px 11px,transparent 11px 13px,#8ab87a 13px 16px,transparent 16px 17px);background-position:-6px 0;opacity:.45"></i><i style="left:66px;top:24px;width:2px;height:2px;background:#e0a030;"></i><i style="left:69px;top:24px;width:10px;height:1px;background:repeating-linear-gradient(90deg,#8ab87a 0px 3px,transparent 3px 4px,#8ab87a 4px 9px,transparent 9px 11px,#8ab87a 11px 18px,transparent 18px 19px);background-position:-4px 0;opacity:.45"></i><i style="left:66px;top:28px;width:2px;height:2px;background:#e0a030;"></i><i style="left:69px;top:28px;width:8px;height:1px;background:repeating-linear-gradient(90deg,#8ab87a 0px 4px,transparent 4px 5px,#8ab87a 5px 11px,transparent 11px 13px,#8ab87a 13px 16px,transparent 16px 17px);background-position:-9px 0;opacity:.45"></i><i style="left:66px;top:32px;width:2px;height:2px;background:#e0a030;"></i><i style="left:69px;top:32px;width:8px;height:1px;background:repeating-linear-gradient(90deg,#8ab87a 0px 6px,transparent 6px 8px,#8ab87a 8px 10px,transparent 10px 11px,#8ab87a 11px 15px,transparent 15px 16px);background-position:-2px 0;opacity:.45"></i></div></div>
<div class="lab" style="left:1039px;top:780px"><span style="letter-spacing:-0.1px">Screenshot</span><br><span style="letter-spacing:-0.7px">2025</span><span style="letter-spacing:0.6px">-</span><span style="letter-spacing:-0.7px">05</span><span style="letter-spacing:0.6px">-</span><span style="letter-spacing:-0.7px">21</span><br><span style="letter-spacing:-0.7px">074644</span></div>
<div class="th" style="left:1152px;top:738px;width:90px;height:37px"><div class="tf"><i style="left:0px;top:0px;width:90px;height:37px;background:#ffffff;"></i><i style="left:4px;top:3px;width:43px;height:1px;background:repeating-linear-gradient(90deg,#c8c8c8 0px 3px,transparent 3px 4px,#c8c8c8 4px 9px,transparent 9px 11px,#c8c8c8 11px 18px,transparent 18px 19px);background-position:-16px 0;opacity:.45"></i><i style="left:2px;top:7px;width:14px;height:1px;background:repeating-linear-gradient(90deg,#3a7ad0 0px 4px,transparent 4px 5px,#3a7ad0 5px 11px,transparent 11px 13px,#3a7ad0 13px 16px,transparent 16px 17px);background-position:-15px 0;opacity:.45"></i><i style="left:2px;top:12px;width:2px;height:2px;background:#30a0a0;"></i><i style="left:5px;top:12px;width:8px;height:1px;background:repeating-linear-gradient(90deg,#8ab87a 0px 3px,transparent 3px 4px,#8ab87a 4px 9px,transparent 9px 11px,#8ab87a 11px 18px,transparent 18px 19px);background-position:-16px 0;opacity:.45"></i><i style="left:2px;top:16px;width:2px;height:2px;background:#3aa03a;"></i><i style="left:5px;top:16px;width:12px;height:1px;background:repeating-linear-gradient(90deg,#8ab87a 0px 5px,transparent 5px 7px,#8ab87a 7px 12px,transparent 12px 14px);background-position:-12px 0;opacity:.45"></i><i style="left:2px;top:20px;width:2px;height:2px;background:#2a7ad0;"></i><i style="left:5px;top:20px;width:11px;height:1px;background:repeating-linear-gradient(90deg,#8ab87a 0px 4px,transparent 4px 5px,#8ab87a 5px 11px,transparent 11px 13px,#8ab87a 13px 16px,transparent 16px 17px);background-position:-5px 0;opacity:.45"></i><i style="left:2px;top:24px;width:2px;height:2px;background:#3aa03a;"></i><i style="left:5px;top:24px;width:8px;height:1px;background:repeating-linear-gradient(90deg,#8ab87a 0px 5px,transparent 5px 7px,#8ab87a 7px 12px,transparent 12px 14px);background-position:-13px 0;opacity:.45"></i><i style="left:2px;top:28px;width:2px;height:2px;background:#2a7ad0;"></i><i style="left:5px;top:28px;width:9px;height:1px;background:repeating-linear-gradient(90deg,#8ab87a 0px 4px,transparent 4px 5px,#8ab87a 5px 11px,transparent 11px 13px,#8ab87a 13px 16px,transparent 16px 17px);background-position:-7px 0;opacity:.45"></i><i style="left:2px;top:32px;width:2px;height:2px;background:#3aa03a;"></i><i style="left:5px;top:32px;width:11px;height:1px;background:repeating-linear-gradient(90deg,#8ab87a 0px 6px,transparent 6px 8px,#8ab87a 8px 10px,transparent 10px 11px,#8ab87a 11px 15px,transparent 15px 16px);background-position:-13px 0;opacity:.45"></i><i style="left:18px;top:12px;width:2px;height:2px;background:#e0a030;"></i><i style="left:21px;top:12px;width:7px;height:1px;background:repeating-linear-gradient(90deg,#8ab87a 0px 5px,transparent 5px 7px,#8ab87a 7px 12px,transparent 12px 14px);background-position:-2px 0;opacity:.45"></i><i style="left:18px;top:16px;width:2px;height:2px;background:#3aa03a;"></i><i style="left:21px;top:16px;width:7px;height:1px;background:repeating-linear-gradient(90deg,#8ab87a 0px 5px,transparent 5px 7px,#8ab87a 7px 12px,transparent 12px 14px);background-position:-2px 0;opacity:.45"></i><i style="left:18px;top:20px;width:2px;height:2px;background:#2a7ad0;"></i><i style="left:21px;top:20px;width:6px;height:1px;background:repeating-linear-gradient(90deg,#8ab87a 0px 4px,transparent 4px 5px,#8ab87a 5px 11px,transparent 11px 13px,#8ab87a 13px 16px,transparent 16px 17px);background-position:-6px 0;opacity:.45"></i><i style="left:18px;top:24px;width:2px;height:2px;background:#2a7ad0;"></i><i style="left:21px;top:24px;width:7px;height:1px;background:repeating-linear-gradient(90deg,#8ab87a 0px 6px,transparent 6px 8px,#8ab87a 8px 10px,transparent 10px 11px,#8ab87a 11px 15px,transparent 15px 16px);background-position:-9px 0;opacity:.45"></i><i style="left:18px;top:28px;width:2px;height:2px;background:#e0a030;"></i><i style="left:21px;top:28px;width:7px;height:1px;background:repeating-linear-gradient(90deg,#8ab87a 0px 6px,transparent 6px 8px,#8ab87a 8px 10px,transparent 10px 11px,#8ab87a 11px 15px,transparent 15px 16px);background-position:-5px 0;opacity:.45"></i><i style="left:18px;top:32px;width:2px;height:2px;background:#2a7ad0;"></i><i style="left:21px;top:32px;width:9px;height:1px;background:repeating-linear-gradient(90deg,#8ab87a 0px 3px,transparent 3px 4px,#8ab87a 4px 9px,transparent 9px 11px,#8ab87a 11px 18px,transparent 18px 19px);background-position:-0px 0;opacity:.45"></i><i style="left:34px;top:12px;width:2px;height:2px;background:#e0a030;"></i><i style="left:37px;top:12px;width:9px;height:1px;background:repeating-linear-gradient(90deg,#8ab87a 0px 6px,transparent 6px 8px,#8ab87a 8px 10px,transparent 10px 11px,#8ab87a 11px 15px,transparent 15px 16px);background-position:-4px 0;opacity:.45"></i><i style="left:34px;top:16px;width:2px;height:2px;background:#e0a030;"></i><i style="left:37px;top:16px;width:6px;height:1px;background:repeating-linear-gradient(90deg,#8ab87a 0px 3px,transparent 3px 4px,#8ab87a 4px 9px,transparent 9px 11px,#8ab87a 11px 18px,transparent 18px 19px);background-position:-9px 0;opacity:.45"></i><i style="left:34px;top:20px;width:2px;height:2px;background:#30a0a0;"></i><i style="left:37px;top:20px;width:10px;height:1px;background:repeating-linear-gradient(90deg,#8ab87a 0px 4px,transparent 4px 5px,#8ab87a 5px 11px,transparent 11px 13px,#8ab87a 13px 16px,transparent 16px 17px);background-position:-10px 0;opacity:.45"></i><i style="left:34px;top:24px;width:2px;height:2px;background:#3aa03a;"></i><i style="left:37px;top:24px;width:8px;height:1px;background:repeating-linear-gradient(90deg,#8ab87a 0px 3px,transparent 3px 4px,#8ab87a 4px 9px,transparent 9px 11px,#8ab87a 11px 18px,transparent 18px 19px);background-position:-9px 0;opacity:.45"></i><i style="left:34px;top:28px;width:2px;height:2px;background:#7a5ac0;"></i><i style="left:37px;top:28px;width:11px;height:1px;background:repeating-linear-gradient(90deg,#8ab87a 0px 3px,transparent 3px 4px,#8ab87a 4px 9px,transparent 9px 11px,#8ab87a 11px 18px,transparent 18px 19px);background-position:-5px 0;opacity:.45"></i><i style="left:34px;top:32px;width:2px;height:2px;background:#7a5ac0;"></i><i style="left:37px;top:32px;width:9px;height:1px;background:repeating-linear-gradient(90deg,#8ab87a 0px 6px,transparent 6px 8px,#8ab87a 8px 10px,transparent 10px 11px,#8ab87a 11px 15px,transparent 15px 16px);background-position:-1px 0;opacity:.45"></i><i style="left:50px;top:12px;width:2px;height:2px;background:#e0a030;"></i><i style="left:53px;top:12px;width:6px;height:1px;background:repeating-linear-gradient(90deg,#8ab87a 0px 3px,transparent 3px 4px,#8ab87a 4px 9px,transparent 9px 11px,#8ab87a 11px 18px,transparent 18px 19px);background-position:-12px 0;opacity:.45"></i><i style="left:50px;top:16px;width:2px;height:2px;background:#3aa03a;"></i><i style="left:53px;top:16px;width:10px;height:1px;background:repeating-linear-gradient(90deg,#8ab87a 0px 5px,transparent 5px 7px,#8ab87a 7px 12px,transparent 12px 14px);background-position:-5px 0;opacity:.45"></i><i style="left:50px;top:20px;width:2px;height:2px;background:#7a5ac0;"></i><i style="left:53px;top:20px;width:10px;height:1px;background:repeating-linear-gradient(90deg,#8ab87a 0px 4px,transparent 4px 5px,#8ab87a 5px 11px,transparent 11px 13px,#8ab87a 13px 16px,transparent 16px 17px);background-position:-14px 0;opacity:.45"></i><i style="left:50px;top:24px;width:2px;height:2px;background:#3aa03a;"></i><i style="left:53px;top:24px;width:11px;height:1px;background:repeating-linear-gradient(90deg,#8ab87a 0px 6px,transparent 6px 8px,#8ab87a 8px 10px,transparent 10px 11px,#8ab87a 11px 15px,transparent 15px 16px);background-position:-6px 0;opacity:.45"></i><i style="left:50px;top:28px;width:2px;height:2px;background:#3aa03a;"></i><i style="left:53px;top:28px;width:12px;height:1px;background:repeating-linear-gradient(90deg,#8ab87a 0px 6px,transparent 6px 8px,#8ab87a 8px 10px,transparent 10px 11px,#8ab87a 11px 15px,transparent 15px 16px);background-position:-14px 0;opacity:.45"></i><i style="left:50px;top:32px;width:2px;height:2px;background:#e0a030;"></i><i style="left:53px;top:32px;width:10px;height:1px;background:repeating-linear-gradient(90deg,#8ab87a 0px 3px,transparent 3px 4px,#8ab87a 4px 9px,transparent 9px 11px,#8ab87a 11px 18px,transparent 18px 19px);background-position:-16px 0;opacity:.45"></i><i style="left:66px;top:12px;width:2px;height:2px;background:#e0a030;"></i><i style="left:69px;top:12px;width:12px;height:1px;background:repeating-linear-gradient(90deg,#8ab87a 0px 5px,transparent 5px 7px,#8ab87a 7px 12px,transparent 12px 14px);background-position:-1px 0;opacity:.45"></i><i style="left:66px;top:16px;width:2px;height:2px;background:#30a0a0;"></i><i style="left:69px;top:16px;width:11px;height:1px;background:repeating-linear-gradient(90deg,#8ab87a 0px 3px,transparent 3px 4px,#8ab87a 4px 9px,transparent 9px 11px,#8ab87a 11px 18px,transparent 18px 19px);background-position:-9px 0;opacity:.45"></i><i style="left:66px;top:20px;width:2px;height:2px;background:#3aa03a;"></i><i style="left:69px;top:20px;width:9px;height:1px;background:repeating-linear-gradient(90deg,#8ab87a 0px 4px,transparent 4px 5px,#8ab87a 5px 11px,transparent 11px 13px,#8ab87a 13px 16px,transparent 16px 17px);background-position:-6px 0;opacity:.45"></i><i style="left:66px;top:24px;width:2px;height:2px;background:#e0a030;"></i><i style="left:69px;top:24px;width:10px;height:1px;background:repeating-linear-gradient(90deg,#8ab87a 0px 3px,transparent 3px 4px,#8ab87a 4px 9px,transparent 9px 11px,#8ab87a 11px 18px,transparent 18px 19px);background-position:-4px 0;opacity:.45"></i><i style="left:66px;top:28px;width:2px;height:2px;background:#e0a030;"></i><i style="left:69px;top:28px;width:8px;height:1px;background:repeating-linear-gradient(90deg,#8ab87a 0px 4px,transparent 4px 5px,#8ab87a 5px 11px,transparent 11px 13px,#8ab87a 13px 16px,transparent 16px 17px);background-position:-9px 0;opacity:.45"></i><i style="left:66px;top:32px;width:2px;height:2px;background:#e0a030;"></i><i style="left:69px;top:32px;width:8px;height:1px;background:repeating-linear-gradient(90deg,#8ab87a 0px 6px,transparent 6px 8px,#8ab87a 8px 10px,transparent 10px 11px,#8ab87a 11px 15px,transparent 15px 16px);background-position:-2px 0;opacity:.45"></i></div></div>
<div class="lab" style="left:1147px;top:780px"><span style="letter-spacing:-0.1px">Screenshot</span><br><span style="letter-spacing:-0.7px">2025</span><span style="letter-spacing:0.6px">-</span><span style="letter-spacing:-0.7px">05</span><span style="letter-spacing:0.6px">-</span><span style="letter-spacing:-0.7px">21</span><br><span style="letter-spacing:-0.7px">074732</span></div>
<div class="th" style="left:1260px;top:738px;width:90px;height:37px"><div class="tf"><i style="left:0px;top:0px;width:90px;height:37px;background:#ffffff;"></i><i style="left:3px;top:2px;width:74px;height:1px;background:repeating-linear-gradient(90deg,#aaa 0px 6px,transparent 6px 8px,#aaa 8px 10px,transparent 10px 11px,#aaa 11px 15px,transparent 15px 16px);background-position:-8px 0;opacity:.45"></i><i style="left:3px;top:7px;width:61px;height:1px;background:repeating-linear-gradient(90deg,#aaa 0px 4px,transparent 4px 5px,#aaa 5px 11px,transparent 11px 13px,#aaa 13px 16px,transparent 16px 17px);background-position:-10px 0;opacity:.45"></i><i style="left:3px;top:12px;width:56px;height:1px;background:repeating-linear-gradient(90deg,#aaa 0px 6px,transparent 6px 8px,#aaa 8px 10px,transparent 10px 11px,#aaa 11px 15px,transparent 15px 16px);background-position:-0px 0;opacity:.45"></i><i style="left:3px;top:17px;width:47px;height:1px;background:repeating-linear-gradient(90deg,#aaa 0px 4px,transparent 4px 5px,#aaa 5px 11px,transparent 11px 13px,#aaa 13px 16px,transparent 16px 17px);background-position:-3px 0;opacity:.45"></i><i style="left:3px;top:22px;width:31px;height:1px;background:repeating-linear-gradient(90deg,#aaa 0px 5px,transparent 5px 7px,#aaa 7px 12px,transparent 12px 14px);background-position:-9px 0;opacity:.45"></i><i style="left:3px;top:27px;width:49px;height:1px;background:repeating-linear-gradient(90deg,#aaa 0px 6px,transparent 6px 8px,#aaa 8px 10px,transparent 10px 11px,#aaa 11px 15px,transparent 15px 16px);background-position:-6px 0;opacity:.45"></i></div></div>
<div style="position:absolute;left:0;top:829px;width:1275px;height:23px;background:#1c1c1c"></div><div class="t12" style="left:14px;top:833px;color:#fff;letter-spacing:-0.2px">79 items</div><div style="position:absolute;left:68px;top:835px;width:1px;height:12px;background:#e0e0e0"></div>
<div style="position:absolute;left:0;top:852px;width:1275px;height:45px;background:linear-gradient(90deg,#1d1e20 0px,#1e1e20 180px,#2c1b22 215px,#311a24 240px,#2a1c25 290px,#301a22 340px,#2a1c28 373px,#241c2e 420px,#221c2a 500px,#1d1b22 555px,#1c1b20 850px,#281818 900px,#351515 960px,#341616 1010px,#261a1a 1060px,#1f1c1e 1100px,#1e1c1e 1275px)"></div><svg style="position:absolute;left:567px;top:865px" width="23" height="23" viewBox="0 0 23 23"><defs><linearGradient id="wg" x1="0" y1="0" x2="1" y2="1"><stop offset="0" stop-color="#7fd8ff"/><stop offset="1" stop-color="#0a8ef0"/></linearGradient></defs><rect x="0" y="0" width="11" height="11" rx="1" fill="url(#wg)"/><rect x="12" y="0" width="11" height="11" rx="1" fill="url(#wg)"/><rect x="0" y="12" width="11" height="11" rx="1" fill="url(#wg)"/><rect x="12" y="12" width="11" height="11" rx="1" fill="url(#wg)"/></svg><div style="position:absolute;left:603px;top:860px;width:220px;height:32px;border-radius:16px;background:#36363a"></div><svg style="position:absolute;left:615px;top:868px" width="15" height="15" viewBox="0 0 15 15"><circle cx="9" cy="6" r="5" fill="#4a4a4e" stroke="#d8d8d8" stroke-width="1.6"/><path d="M5.5 9.5 L1 14" stroke="#d8d8d8" stroke-width="1.8" stroke-linecap="round"/></svg><div class="tsearch" style="left:640px;top:868px">Search</div><svg style="position:absolute;left:764px;top:862px" width="54" height="29" viewBox="0 0 54 29"><defs><radialGradient id="sky" cx="0.5" cy="0.45" r="0.55"><stop offset="0" stop-color="#e8c4d8"/><stop offset="0.55" stop-color="#9ab0d0"/><stop offset="0.85" stop-color="#5a78a8" stop-opacity="0.8"/><stop offset="1" stop-color="#36363a" stop-opacity="0"/></radialGradient></defs><ellipse cx="28" cy="13" rx="25" ry="14" fill="url(#sky)"/><ellipse cx="15" cy="11" rx="6" ry="1.8" fill="#f4f4f8"/><ellipse cx="40" cy="8.5" rx="6" ry="2" fill="#f4f4f8"/><path d="M23.5 17 L24 3 L28 2 L32 3 L32.5 17Z" fill="#8c7a6c"/><rect x="26" y="6" width="1.6" height="2.5" fill="#4a3a30"/><rect x="28.6" y="10" width="1.6" height="2.5" fill="#4a3a30"/><path d="M2 28 Q6 18 16 18 Q28 14 40 17 Q50 19 53 26 L53 28Z" fill="#6ab03a"/><path d="M14 24 Q28 20 48 24" fill="none" stroke="#e8d8a0" stroke-width="1.6"/><circle cx="7" cy="24" r="4.5" fill="#3a9a28"/><circle cx="13" cy="26" r="3.5" fill="#48a830"/><circle cx="40" cy="20" r="3" fill="#3a9a28"/><circle cx="46" cy="23" r="3.5" fill="#48a830"/><circle cx="36" cy="26" r="3" fill="#3a9a28"/></svg><div style="position:absolute;left:827px;top:856px;width:40px;height:40px;border-radius:5px;background:#2e2e33"></div><svg style="position:absolute;left:835px;top:865px" width="24" height="22" viewBox="0 0 24 22"><path d="M0 2 Q0 0 2 0 H8 L10 2.5 H22 Q24 2.5 24 4.5 V20 Q24 22 22 22 H2 Q0 22 0 20Z" fill="#e0a010"/><rect x="0" y="4.5" width="24" height="17.5" rx="1.5" fill="#ffd24a"/><rect x="5" y="14" width="14" height="8" rx="2" fill="#1a78d0"/><rect x="7" y="16.5" width="10" height="1.2" fill="#5aa8f0"/></svg><div style="position:absolute;left:839px;top:892px;width:16px;height:3px;border-radius:2px;background:#f0806c"></div><svg style="position:absolute;left:878px;top:863px" width="26" height="26" viewBox="0 0 26 26"><path d="M13.5 1.8 A10.6 10.6 0 1 1 7.8 21.6 L1.8 23.6 L3.9 18 A10.6 10.6 0 0 1 13.5 1.8Z" fill="none" stroke="#25d366" stroke-width="1.9" stroke-linejoin="round"/><path d="M9.3 6.8 Q8.2 7.4 8.2 9.2 Q8.6 12.6 12.2 15.6 Q15.2 17.8 17.6 17.6 Q18.6 17.2 19 16.3 L18.5 15.2 L16.3 14.1 Q15.6 14.2 15.2 14.9 Q14.6 15.2 13.6 14.5 Q11.6 13 10.6 11 Q10.4 10.5 10.9 10 Q11.4 9.5 11.1 8.8 L10.2 6.9 Z" fill="#25d366"/></svg><svg style="position:absolute;left:923px;top:864px" width="24" height="24" viewBox="0 0 24 24"><path d="M12 6.5 L22.25 6.78 A11.5 11.5 0 0 0 2.36 5.73 L7.24 14.75 A5.5 5.5 0 0 1 12 6.5Z" fill="#e94235"/><path d="M7.24 14.75 L2.36 5.73 A11.5 11.5 0 0 0 11.4 23.48 L16.76 14.75 A5.5 5.5 0 0 1 7.24 14.75Z" fill="#1f9a48"/><path d="M16.76 14.75 L11.4 23.48 A11.5 11.5 0 0 0 22.25 6.78 L12 6.5 A5.5 5.5 0 0 1 16.76 14.75Z" fill="#fbc116"/><circle cx="12" cy="12" r="5.6" fill="#fff"/><circle cx="12" cy="12" r="4.5" fill="#2a7de8"/></svg><svg style="position:absolute;left:966px;top:863px" width="27" height="26" viewBox="0 0 27 26"><rect x="1" y="1" width="18.5" height="18.5" rx="2" fill="#f2f2f2"/><g fill="#e0300a"><rect x="2.7" y="2.7" width="2.6" height="2.6" rx="0.6"/><rect x="6.6" y="2.7" width="2.6" height="2.6" rx="0.6"/><rect x="10.5" y="2.7" width="2.6" height="2.6" rx="0.6"/><rect x="2.7" y="6.6" width="2.6" height="2.6" rx="0.6"/><rect x="2.7" y="10.5" width="2.6" height="2.6" rx="0.6"/></g><path d="M15.5 5.5 V15.5 H5" fill="none" stroke="#9a9ea4" stroke-width="2.4"/><path d="M15.5 15 L19.5 14.5 M15 15.5 L14.5 19.5" stroke="#9a9ea4" stroke-width="1.6"/><circle cx="22.5" cy="14.5" r="2.4" fill="none" stroke="#1a9ee8" stroke-width="1.5"/><circle cx="14.5" cy="22.5" r="2.4" fill="none" stroke="#1a9ee8" stroke-width="1.5"/></svg><svg style="position:absolute;left:1011px;top:864px" width="24" height="25" viewBox="0 0 24 25"><defs><linearGradient id="pal" x1="0" y1="0" x2="0" y2="1"><stop offset="0" stop-color="#48c8f8"/><stop offset="1" stop-color="#1890e0"/></linearGradient></defs><path d="M13 1 Q23.5 1.5 23.5 10.5 Q23.5 15.5 19 15.5 Q16.5 15.5 16.5 18 Q16.5 23 11 23 Q1.2 23 1.2 12.5 Q1.2 1 13 1Z" fill="url(#pal)"/><circle cx="4.8" cy="12.3" r="1.8" fill="#e8501a"/><circle cx="7.7" cy="7.3" r="1.9" fill="#3aa52a"/><circle cx="12.6" cy="5.5" r="1.9" fill="#f8c010"/><path d="M12 10.5 V12.8 M10.9 11.6 H13.1" stroke="#2a4a6a" stroke-width="0.9"/><rect x="17" y="10" width="2.8" height="14.5" rx="1" fill="#b86e1c"/><rect x="16.4" y="7.6" width="4" height="3.2" fill="#f4dcb0"/></svg><div style="position:absolute;left:888px;top:892px;width:6px;height:3px;border-radius:2px;background:#a8a4a4"></div><div style="position:absolute;left:932px;top:892px;width:6px;height:3px;border-radius:2px;background:#a8a4a4"></div><div style="position:absolute;left:976px;top:892px;width:6px;height:3px;border-radius:2px;background:#a8a4a4"></div><div style="position:absolute;left:1020px;top:892px;width:6px;height:3px;border-radius:2px;background:#a8a4a4"></div>
<div style="position:absolute;left:423px;top:79px;width:211px;height:330px;background:#2c2c2c;border-radius:8px;box-shadow:0 6px 14px rgba(0,0,0,0.45)"></div><div style="position:absolute;left:423px;top:338px;width:211px;height:1px;background:#3d3d3d"></div><div style="position:absolute;left:423px;top:373px;width:211px;height:1px;background:#3d3d3d"></div><div style="position:absolute;left:429px;top:244px;width:201px;height:28px;background:#383838;border-radius:4px"></div><svg style="position:absolute;left:466px;top:90px" width="17" height="16" viewBox="0 0 17 16"><rect x="1.5" y="0.5" width="14" height="11" rx="2" fill="none" stroke="#fff" stroke-width="1"/><path d="M3 13.5 H14" fill="none" stroke="#fff" stroke-width="1"/></svg><div class="mt" style="left:494px;top:88px">Extra large icons</div><svg style="position:absolute;left:466px;top:122px" width="17" height="16" viewBox="0 0 17 16"><rect x="2.5" y="1.5" width="12" height="8" rx="2" fill="none" stroke="#fff" stroke-width="1"/><path d="M2 12.5 H15" fill="none" stroke="#fff" stroke-width="1"/></svg><div class="mt" style="left:494px;top:120px">Large icons</div><svg style="position:absolute;left:466px;top:154px" width="17" height="16" viewBox="0 0 17 16"><rect x="3.5" y="1.5" width="10" height="7" rx="2" fill="none" stroke="#fff" stroke-width="1"/><path d="M3.5 10.5 H13.5 M3.5 12.5 H13.5" fill="none" stroke="#fff" stroke-width="1"/></svg><div class="mt" style="left:494px;top:152px">Medium-sized icons</div><svg style="position:absolute;left:466px;top:186px" width="17" height="16" viewBox="0 0 17 16"><rect x="1.5" y="0.5" width="5" height="5" rx="2" fill="none" stroke="#fff" stroke-width="1"/><rect x="8.5" y="0.5" width="5" height="5" rx="2" fill="none" stroke="#fff" stroke-width="1"/><rect x="1.5" y="8.5" width="5" height="5" rx="2" fill="none" stroke="#fff" stroke-width="1"/><rect x="8.5" y="8.5" width="5" height="5" rx="2" fill="none" stroke="#fff" stroke-width="1"/></svg><div class="mt" style="left:494px;top:184px">Small icons</div><svg style="position:absolute;left:466px;top:218px" width="17" height="16" viewBox="0 0 17 16"><path d="M0 2.5 H7 M0 5.5 H7 M0 8.5 H7 M0 11.5 H7 M9 2.5 H16 M9 5.5 H16 M9 8.5 H16 M9 11.5 H16" fill="none" stroke="#fff" stroke-width="1"/></svg><div class="mt" style="left:494px;top:216px">List</div><svg style="position:absolute;left:466px;top:250px" width="17" height="16" viewBox="0 0 17 16"><path d="M0 2.5 H16 M0 5.5 H16 M0 8.5 H16 M0 11.5 H16" fill="none" stroke="#fff" stroke-width="1"/></svg><div class="mt" style="left:494px;top:248px">Details</div><svg style="position:absolute;left:466px;top:282px" width="17" height="16" viewBox="0 0 17 16"><rect x="0.5" y="1.5" width="5" height="4" rx="2" fill="none" stroke="#fff" stroke-width="1"/><rect x="0.5" y="8.5" width="5" height="4" rx="2" fill="none" stroke="#fff" stroke-width="1"/><path d="M8 2.5 H16 M8 9.5 H16" fill="none" stroke="#fff" stroke-width="1"/></svg><div class="mt" style="left:494px;top:280px">Tiles</div><svg style="position:absolute;left:466px;top:314px" width="17" height="16" viewBox="0 0 17 16"><rect x="1" y="0.5" width="4.5" height="3" rx="1.5" fill="none" stroke="#fff" stroke-width="1"/><rect x="1" y="5.5" width="4.5" height="3" rx="1.5" fill="none" stroke="#fff" stroke-width="1"/><rect x="1" y="10.5" width="4.5" height="3" rx="1.5" fill="none" stroke="#fff" stroke-width="1"/><path d="M8 1.5 H15 M8 6.5 H15 M8 11.5 H15" fill="none" stroke="#fff" stroke-width="1"/></svg><div class="mt" style="left:494px;top:312px">Content</div><svg style="position:absolute;left:466px;top:348px" width="17" height="16" viewBox="0 0 17 16"><path d="M3.5 0 V6 M0.8 3.3 L3.5 6 L6.2 3.3 M3.5 16 V9 M0.8 11.7 L3.5 9 L6.2 11.7" fill="none" stroke="#4cc2ff" stroke-width="1.1"/><path d="M9 3.5 H16 M9 6.5 H16 M9 9.5 H16 M9 12.5 H16" fill="none" stroke="#fff" stroke-width="1"/></svg><div class="mt" style="left:494px;top:347px">Compact view</div><div class="mt" style="left:494px;top:382px">Show</div><div style="position:absolute;left:442px;top:127px;width:4px;height:4px;border-radius:2px;background:#cfcfcf"></div><svg style="position:absolute;left:610px;top:386px" width="7" height="11" viewBox="0 0 7 11"><path d="M1 1 L5.5 5.5 L1 10" fill="none" stroke="#cfcfcf" stroke-width="1.1"/></svg><div style="position:absolute;left:426px;top:241px;width:210px;height:36px;box-sizing:border-box;border:5px solid #ed1c24"></div>
</body></html>
